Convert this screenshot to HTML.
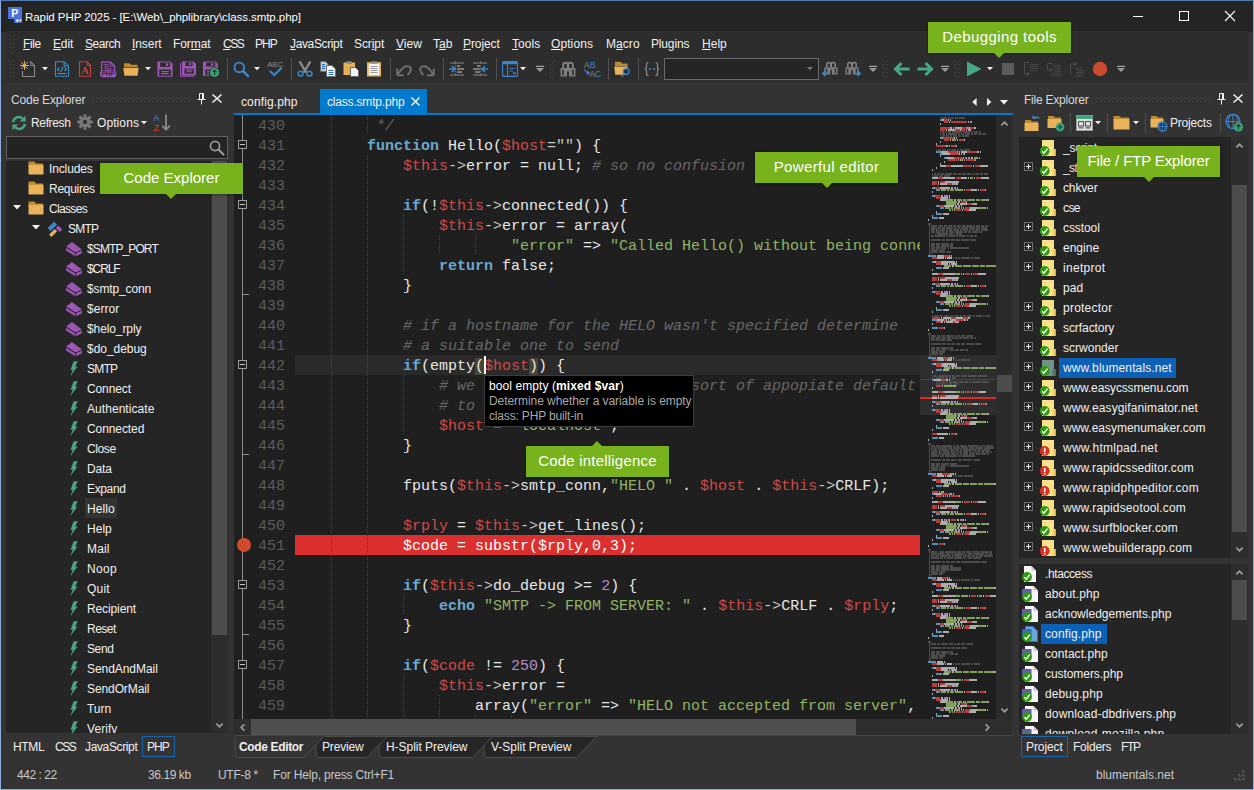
<!DOCTYPE html>
<html lang="en"><head><meta charset="utf-8"><title>Rapid PHP 2025</title>
<style>
html,body{margin:0;padding:0}
body{width:1254px;height:790px;position:relative;overflow:hidden;background:#333333;font-family:"Liberation Sans",sans-serif;font-size:12px;color:#e6e6e6}
.b{position:absolute;box-sizing:border-box}
.t{position:absolute;white-space:pre;line-height:16px;font-size:12px}
svg{position:absolute;overflow:visible}
#frame{position:absolute;left:0;top:0;width:1254px;height:790px;box-sizing:border-box;border:1px solid #90aee0;border-top-color:#4f78b0;pointer-events:none}
#titlebar{position:absolute;left:0;top:0;width:1254px;height:31.5px;background:#242424}
.title{color:#ffffff;font-size:12px}
#band{position:absolute;left:6px;top:31px;width:1242px;height:52px;background:#2d2d2d}
.menu{color:#f0f0f0;font-size:12px}
.menu u{text-decoration:underline;text-underline-offset:1px}
.ph{color:#d8d8d8;font-size:12px}
.ui{color:#f0f0f0;font-size:12px}
.bold{font-weight:bold}
.tab{color:#f0f0f0;font-size:12px}
.st{color:#c8c8c8;font-size:12px}
.tip{background:#000;border:1px solid #3c3c3c}
.callout{background:#78b31e;color:#fff;font-size:15px;line-height:30px;text-align:center;white-space:pre;box-shadow:0 1px 3px rgba(0,0,0,.35)}
.ptr{position:absolute;top:100%;margin-left:1px;width:0;height:0;border-left:5px solid transparent;border-right:5px solid transparent;border-top:5px solid #78b31e}
.ptr.up{top:-5px;border-top:none;border-bottom:5px solid #78b31e}
/* code */
#code{position:absolute;left:234px;top:115px;width:686px;height:604px;background:#1f1f1f;overflow:hidden}
.ln{position:absolute;left:0;width:686px;height:20px}
.ln .n{position:absolute;left:24px;top:2px;color:#5c5c5c;font:15px/20px "Liberation Mono",monospace;white-space:pre}
.ln .c{position:absolute;left:61px;top:2px;color:#e8e8e8;font:15px/20px "Liberation Mono",monospace;white-space:pre}
.k{color:#69a9d0;font-weight:bold}
.v{color:#d04a48}
.s{color:#8fb464}
.m{color:#676767;font-style:italic}
.o{color:#c8c8c8}
.nu{color:#b48cc8}

</style></head>
<body>
<div id="titlebar"><svg style="left:8px;top:7px" width="14" height="16" viewBox="0 0 14 16" ><path d="M0 0.8Q0 0 0.8 0H13.2Q14 0 14 0.8V16H6V12H0Z" fill="#4a72d8"/><text x="3.2" y="10" font-family="Liberation Sans,sans-serif" font-weight="bold" font-size="10.5" fill="#fff">P</text><path d="M12.8 12v1.7H8.2M9.6 12.3l-1.6 1.4 1.6 1.4" stroke="#fff" stroke-width="1" fill="none"/></svg><span class="t title" style="left:25px;top:9px;letter-spacing:-0.07px;font-size:11.5px;">Rapid PHP 2025 - [E:\Web\_phplibrary\class.smtp.php]</span><svg style="left:1133px;top:16px" width="10" height="1" viewBox="0 0 10 1" ><rect width="10" height="1" fill="#fff"/></svg><svg style="left:1179px;top:11px" width="10" height="10" viewBox="0 0 10 10" ><rect x="0.5" y="0.5" width="9" height="9" fill="none" stroke="#fff" stroke-width="1"/></svg><svg style="left:1225px;top:11px" width="10" height="10" viewBox="0 0 10 10" ><path d="M0 0L10 10M10 0L0 10" stroke="#fff" stroke-width="1.1"/></svg></div>
<div id="band"></div>
<svg style="left:9px;top:35px" width="5" height="18" viewBox="0 0 5 18" shape-rendering="crispEdges"><rect x="0" y="0" width="1" height="1" fill="#4c4c4c"/><rect x="4" y="0" width="1" height="1" fill="#4c4c4c"/><rect x="2" y="2" width="1" height="1" fill="#4c4c4c"/><rect x="0" y="4" width="1" height="1" fill="#4c4c4c"/><rect x="4" y="4" width="1" height="1" fill="#4c4c4c"/><rect x="2" y="6" width="1" height="1" fill="#4c4c4c"/><rect x="0" y="8" width="1" height="1" fill="#4c4c4c"/><rect x="4" y="8" width="1" height="1" fill="#4c4c4c"/><rect x="2" y="10" width="1" height="1" fill="#4c4c4c"/><rect x="0" y="12" width="1" height="1" fill="#4c4c4c"/><rect x="4" y="12" width="1" height="1" fill="#4c4c4c"/><rect x="2" y="14" width="1" height="1" fill="#4c4c4c"/><rect x="0" y="16" width="1" height="1" fill="#4c4c4c"/><rect x="4" y="16" width="1" height="1" fill="#4c4c4c"/><rect x="2" y="18" width="1" height="1" fill="#4c4c4c"/></svg><svg style="left:9px;top:60px" width="5" height="18" viewBox="0 0 5 18" shape-rendering="crispEdges"><rect x="0" y="0" width="1" height="1" fill="#4c4c4c"/><rect x="4" y="0" width="1" height="1" fill="#4c4c4c"/><rect x="2" y="2" width="1" height="1" fill="#4c4c4c"/><rect x="0" y="4" width="1" height="1" fill="#4c4c4c"/><rect x="4" y="4" width="1" height="1" fill="#4c4c4c"/><rect x="2" y="6" width="1" height="1" fill="#4c4c4c"/><rect x="0" y="8" width="1" height="1" fill="#4c4c4c"/><rect x="4" y="8" width="1" height="1" fill="#4c4c4c"/><rect x="2" y="10" width="1" height="1" fill="#4c4c4c"/><rect x="0" y="12" width="1" height="1" fill="#4c4c4c"/><rect x="4" y="12" width="1" height="1" fill="#4c4c4c"/><rect x="2" y="14" width="1" height="1" fill="#4c4c4c"/><rect x="0" y="16" width="1" height="1" fill="#4c4c4c"/><rect x="4" y="16" width="1" height="1" fill="#4c4c4c"/><rect x="2" y="18" width="1" height="1" fill="#4c4c4c"/></svg><div id="menubar"><span class="t menu" style="left:23px;top:36px;letter-spacing:-0.349px;"><u>F</u>ile</span><span class="t menu" style="left:53px;top:36px;letter-spacing:-0.145px;"><u>E</u>dit</span><span class="t menu" style="left:85px;top:36px;letter-spacing:-0.462px;"><u>S</u>earch</span><span class="t menu" style="left:132px;top:36px;letter-spacing:-0.072px;"><u>I</u>nsert</span><span class="t menu" style="left:173px;top:36px;letter-spacing:-0.075px;">For<u>m</u>at</span><span class="t menu" style="left:223px;top:36px;letter-spacing:-1.498px;"><u>C</u>SS</span><span class="t menu" style="left:255px;top:36px;letter-spacing:-0.904px;">PHP</span><span class="t menu" style="left:290px;top:36px;letter-spacing:-0.367px;"><u>J</u>avaScript</span><span class="t menu" style="left:354px;top:36px;letter-spacing:-0.093px;">Scr<u>i</u>pt</span><span class="t menu" style="left:396px;top:36px;letter-spacing:0.054px;"><u>V</u>iew</span><span class="t menu" style="left:433px;top:36px;letter-spacing:0.033px;">T<u>a</u>b</span><span class="t menu" style="left:463px;top:36px;letter-spacing:-0.09px;"><u>P</u>roject</span><span class="t menu" style="left:512px;top:36px;letter-spacing:0.067px;"><u>T</u>ools</span><span class="t menu" style="left:551px;top:36px;letter-spacing:0.089px;"><u>O</u>ptions</span><span class="t menu" style="left:606px;top:36px;letter-spacing:0.056px;">M<u>a</u>cro</span><span class="t menu" style="left:651px;top:36px;letter-spacing:-0.16px;">Plugins</span><span class="t menu" style="left:702px;top:36px;letter-spacing:0.019px;"><u>H</u>elp</span></div>
<div id="toolbar"><svg style="left:20px;top:61px" width="16" height="16" viewBox="0 0 16 16" ><path d="M2.5 10V15.5H14.5V4.5L11 1H9.5" fill="none" stroke="#8a8a8a" stroke-width="1.1"/><path d="M10.8 1.2V4.7H14.3" fill="none" stroke="#8a8a8a" stroke-width="1"/><g stroke="#f0b040" stroke-width="1"><path d="M4.5 0V9M0 4.5H9M1.3 1.3L7.7 7.7M7.7 1.3L1.3 7.7"/></g></svg><svg style="left:42px;top:67px" width="6" height="4" viewBox="0 0 6 4" ><path d="M0 0H6L3 3.2Z" fill="#f0f0f0"/></svg><svg style="left:54px;top:61px" width="16" height="16" viewBox="0 0 16 16" ><path d="M1.5 0.8H10L14.5 5V15.2H1.5Z" fill="none" stroke="#3c9bd8" stroke-width="1.1" stroke-dasharray="2.2 0.4"/><path d="M10 1V5H14.3" fill="none" stroke="#3c9bd8" stroke-width="1"/><path d="M5.5 6.3L3.6 8.2 5.5 10.1M10.5 6.3L12.4 8.2 10.5 10.1M8.9 5.8L7.1 10.6" fill="none" stroke="#3c9bd8" stroke-width="1.1"/><path d="M3.5 12.6H12.5" stroke="#3c9bd8" stroke-width="1.1"/></svg><svg style="left:77px;top:61px" width="16" height="16" viewBox="0 0 16 16" ><path d="M2.5 0.8H10L13.5 4.2V15.2H2.5Z" fill="none" stroke="#c8413a" stroke-width="1.1"/><path d="M10 1V4.3H13.3" fill="none" stroke="#c8413a" stroke-width="1"/><text x="8" y="13" text-anchor="middle" font-family="Liberation Serif,serif" font-weight="bold" font-size="10.5" fill="#c8413a">A</text></svg><svg style="left:100px;top:61px" width="16" height="16" viewBox="0 0 16 16" ><path d="M1.6 9.5V1.2H10.6L14.6 5V9.5" fill="none" stroke="#9c56b4" stroke-width="1.3"/><path d="M10.4 1.2V5.2H14.4" fill="none" stroke="#9c56b4" stroke-width="1"/><path d="M3.4 3.8H8.6M4.4 5.8H8.6M4.4 7.8H11.8" stroke="#9c56b4" stroke-width="1"/><rect x="0" y="9.2" width="16.2" height="7" rx="2.8" fill="#9c56b4"/><text x="8.2" y="15" text-anchor="middle" font-family="Liberation Sans,sans-serif" font-weight="bold" font-size="6.6" fill="#2d2d2d">PHP</text></svg><svg style="left:123px;top:61px" width="16" height="16" viewBox="0 0 16 16" ><path d="M1 2.2H6.5L8 3.8H14.5V6H1Z" fill="#c08a2e"/><path d="M0.3 6.8H15.7L14.6 14.8H1.4Z" fill="#e8b35a"/></svg><svg style="left:145px;top:67px" width="6" height="4" viewBox="0 0 6 4" ><path d="M0 0H6L3 3.2Z" fill="#f0f0f0"/></svg><svg style="left:157px;top:61px" width="16" height="16" viewBox="0 0 16 16" ><path d="M1.2 0.5H13.2L15.6 2.9V15Q15.6 15.8 14.8 15.8H1.2Q0.4 15.8 0.4 15V1.3Q0.4 0.5 1.2 0.5Z" fill="#9c56b4"/><rect x="3.1" y="1.4" width="10" height="4.5" fill="#2d2d2d"/><rect x="8.9" y="2.2" width="2.3" height="2.8" fill="#9c56b4"/><rect x="2.2" y="8.4" width="11.8" height="6.3" rx=".5" fill="#2d2d2d"/><path d="M4.2 10.6H11.7M4.2 12.6H11.7" stroke="#9c56b4" stroke-width="1.1"/></svg><svg style="left:180px;top:61px" width="16" height="16" viewBox="0 0 16 16" ><path d="M0.6 2.2V15.2H14" fill="none" stroke="#9c56b4" stroke-width="1.1"/><path d="M2.8 0.5H13.8L16 2.7V13.7Q16 14.4 15.3 14.4H2.8Q2 14.4 2 13.7V1.2Q2 0.5 2.8 0.5Z" fill="#9c56b4"/><rect x="5.4" y="1.3" width="7.2" height="3.6" fill="#2d2d2d"/><rect x="8.9" y="2" width="2.3" height="2" fill="#9c56b4"/><rect x="4.5" y="7.4" width="9.3" height="5.3" rx=".4" fill="#2d2d2d"/><path d="M6.1 8.9H12.3M6.1 10.8H12.3" stroke="#9c56b4" stroke-width="1.1"/></svg><svg style="left:203px;top:61px" width="16" height="16" viewBox="0 0 16 16" ><path d="M0.8 0.5H12.6L15 2.9V14.2Q15 15 14.2 15H0.8Q0 15 0 14.2V1.3Q0 0.5 0.8 0.5Z" fill="#9c56b4"/><rect x="3.2" y="1.4" width="9" height="4.2" fill="#2d2d2d"/><rect x="8" y="2.2" width="2.3" height="2.6" fill="#9c56b4"/><rect x="2.2" y="8.4" width="9" height="5.8" rx=".5" fill="#2d2d2d"/><path d="M4 10.4H6.2M4 12.4H6.2" stroke="#9c56b4" stroke-width="1.1"/><circle cx="11.6" cy="11.4" r="5.1" fill="#2d2d2d"/><circle cx="11.6" cy="11.4" r="4.5" fill="#3aa878"/><path d="M11.6 14.2V9.2M9.4 11.2L11.6 9 13.8 11.2" fill="none" stroke="#1e3a2e" stroke-width="1.2"/></svg><div class="b" style="left:227px;top:58px;width:1px;height:22px;background:#505050"></div><svg style="left:233px;top:61px" width="16" height="16" viewBox="0 0 16 16" ><circle cx="6.3" cy="6.4" r="4.8" fill="none" stroke="#3a86d0" stroke-width="1.9"/><path d="M9.9 10L15 15" stroke="#3a86d0" stroke-width="2.5" stroke-linecap="round"/></svg><svg style="left:254px;top:67px" width="6" height="4" viewBox="0 0 6 4" ><path d="M0 0H6L3 3.2Z" fill="#f0f0f0"/></svg><svg style="left:267px;top:61px" width="16" height="16" viewBox="0 0 16 16" ><text x="8.2" y="6.4" text-anchor="middle" font-family="Liberation Sans,sans-serif" font-size="7.8" fill="#8a8a8a">ABC</text><path d="M2.8 10L7.4 14 14.6 6.8" fill="none" stroke="#3a86d0" stroke-width="2.2"/></svg><div class="b" style="left:291px;top:58px;width:1px;height:22px;background:#505050"></div><svg style="left:297px;top:61px" width="16" height="16" viewBox="0 0 16 16" ><path d="M2.6 0.3L9.2 11.5M13.4 0.3L6.8 11.5" stroke="#8a8a8a" stroke-width="2.3"/><ellipse cx="3.6" cy="12.8" rx="2.6" ry="2.2" fill="none" stroke="#3a86d0" stroke-width="1.5"/><ellipse cx="12.4" cy="12.8" rx="2.6" ry="2.2" fill="none" stroke="#3a86d0" stroke-width="1.5"/></svg><svg style="left:320px;top:61px" width="16" height="16" viewBox="0 0 16 16" ><path d="M0.5 0.5H5.5L8 3V10.5H0.5Z" fill="#c8c8c8" stroke="#6a6a6a" stroke-width="1"/><path d="M2 3.5H5M2 5.5H5M2 7.5H5" stroke="#2f6cb8" stroke-width="1"/><path d="M6.5 4.5H12L15.5 8V15.5H6.5Z" fill="#f4f4f4" stroke="#6a6a6a" stroke-width="1"/><path d="M8.5 9.5H13.5M8.5 11.5H13.5M8.5 13.5H13.5" stroke="#2f6cb8" stroke-width="1"/></svg><svg style="left:343px;top:61px" width="16" height="16" viewBox="0 0 16 16" ><rect x="0.5" y="1.5" width="11.5" height="12.5" fill="#e8b35a"/><rect x="3.5" y="0.3" width="5.5" height="2.6" fill="#8a8a8a"/><rect x="2" y="3.6" width="8.5" height="9" fill="#e0a850" opacity=".6"/><path d="M7.5 6.5H12.5L15.5 9.5V15.5H7.5Z" fill="#f4f4f4" stroke="#6a6a6a" stroke-width="1"/></svg><svg style="left:366px;top:61px" width="16" height="16" viewBox="0 0 16 16" ><rect x="1" y="1.2" width="14" height="14.3" fill="#e8b35a"/><rect x="2.8" y="3" width="10.4" height="11" fill="#f4f4f4"/><rect x="5.2" y="0.2" width="5.6" height="2.4" fill="#8a8a8a"/><path d="M4.5 5.5H11.5M4.5 7.5H11.5M4.5 9.5H11.5M4.5 11.5H11.5" stroke="#9a9a9a" stroke-width="1"/></svg><div class="b" style="left:390px;top:58px;width:1px;height:22px;background:#505050"></div><svg style="left:396px;top:61px" width="16" height="16" viewBox="0 0 16 16" ><path d="M1.2 14.2V7.5M1.2 14.2H7.8" fill="none" stroke="#6e6e6e" stroke-width="2"/><path d="M1.8 13.6C5 8 9 4.3 12.5 5.4S15.5 11 11.5 14" fill="none" stroke="#6e6e6e" stroke-width="2"/></svg><svg style="left:419px;top:61px" width="16" height="16" viewBox="0 0 16 16" ><g transform="translate(16,0) scale(-1,1)"><path d="M1.2 14.2V7.5M1.2 14.2H7.8" fill="none" stroke="#6e6e6e" stroke-width="2"/><path d="M1.8 13.6C5 8 9 4.3 12.5 5.4S15.5 11 11.5 14" fill="none" stroke="#6e6e6e" stroke-width="2"/></g></svg><div class="b" style="left:443px;top:58px;width:1px;height:22px;background:#505050"></div><svg style="left:449px;top:61px" width="16" height="16" viewBox="0 0 16 16" ><path d="M6.5 0V16" stroke="#777" stroke-width="1" stroke-dasharray="1 1"/><path d="M1 2H15M1 14H15" stroke="#8a8a8a" stroke-width="1.2"/><path d="M8 5H11M8 8H15M8 11H13" stroke="#7a7a7a" stroke-width="1.8"/><path d="M0 8H5.5M3 5.2L6 8 3 10.8" fill="none" stroke="#3a86d0" stroke-width="1.7"/></svg><svg style="left:472px;top:61px" width="16" height="16" viewBox="0 0 16 16" ><path d="M8.5 0V16" stroke="#777" stroke-width="1" stroke-dasharray="1 1"/><path d="M1 2H15M1 14H15" stroke="#8a8a8a" stroke-width="1.2"/><path d="M5 5H8M1 8H8M3 11H8" stroke="#7a7a7a" stroke-width="1.8"/><path d="M16 8H10.5M13 5.2L10 8 13 10.8" fill="none" stroke="#3a86d0" stroke-width="1.7"/></svg><div class="b" style="left:496px;top:58px;width:1px;height:22px;background:#505050"></div><svg style="left:502px;top:61px" width="16" height="16" viewBox="0 0 16 16" ><rect x="0.6" y="0.6" width="14.8" height="14.8" rx="1.2" fill="none" stroke="#3a86d0" stroke-width="1.1"/><rect x="0.6" y="0.6" width="14.8" height="2.6" fill="#3a86d0"/><path d="M5.5 3.2V15.4" stroke="#3a86d0" stroke-width="1"/><path d="M7.5 7.5H13M7.5 10H11" stroke="#3a86d0" stroke-width="1"/><rect x="11" y="11.4" width="2.6" height="1.8" fill="#3a86d0"/></svg><svg style="left:520px;top:67px" width="6" height="4" viewBox="0 0 6 4" ><path d="M0 0H6L3 3.2Z" fill="#f0f0f0"/></svg><svg style="left:536px;top:65px" width="8" height="7" viewBox="0 0 8 7" ><rect x="0" y="0.8" width="8" height="1.1" fill="#b0b0b0"/><path d="M0 2.9H8L4 6.9Z" fill="#9a9a9a"/></svg><svg style="left:550px;top:60px" width="5" height="18" viewBox="0 0 5 18" shape-rendering="crispEdges"><rect x="0" y="0" width="1" height="1" fill="#4c4c4c"/><rect x="4" y="0" width="1" height="1" fill="#4c4c4c"/><rect x="2" y="2" width="1" height="1" fill="#4c4c4c"/><rect x="0" y="4" width="1" height="1" fill="#4c4c4c"/><rect x="4" y="4" width="1" height="1" fill="#4c4c4c"/><rect x="2" y="6" width="1" height="1" fill="#4c4c4c"/><rect x="0" y="8" width="1" height="1" fill="#4c4c4c"/><rect x="4" y="8" width="1" height="1" fill="#4c4c4c"/><rect x="2" y="10" width="1" height="1" fill="#4c4c4c"/><rect x="0" y="12" width="1" height="1" fill="#4c4c4c"/><rect x="4" y="12" width="1" height="1" fill="#4c4c4c"/><rect x="2" y="14" width="1" height="1" fill="#4c4c4c"/><rect x="0" y="16" width="1" height="1" fill="#4c4c4c"/><rect x="4" y="16" width="1" height="1" fill="#4c4c4c"/><rect x="2" y="18" width="1" height="1" fill="#4c4c4c"/></svg><svg style="left:560px;top:61px" width="16" height="16" viewBox="0 0 16 16" ><path d="M3.2 7V4Q3.2 1.6 5.4 1.6T7.8 4V7M8.2 7V4Q8.2 1.6 10.6 1.6T12.8 4V7" fill="none" stroke="#8a8a8a" stroke-width="1.7"/><path d="M0.5 7H7V15.5H0.5ZM9 7H15.5V15.5H9Z" fill="#7e7e7e"/><rect x="2.2" y="8.6" width="1.6" height="5.4" fill="#2d2d2d"/><rect x="12.2" y="8.6" width="1.6" height="5.4" fill="#2d2d2d"/><rect x="7" y="7" width="2" height="3.4" fill="#7e7e7e"/></svg><svg style="left:584px;top:61px" width="16" height="16" viewBox="0 0 16 16" ><text x="0" y="7" font-family="Liberation Sans,sans-serif" font-size="8.5" fill="#8a8a8a">A<tspan fill="#3a86d0">B</tspan></text><text x="5.4" y="16" font-family="Liberation Sans,sans-serif" font-size="8.5" fill="#8a8a8a">A<tspan fill="#3a86d0">C</tspan></text><path d="M0.5 8.5Q1 11.5 5 12M3 9.8L5.2 12 2.8 13.8" fill="none" stroke="#3a86d0" stroke-width="1.1"/></svg><div class="b" style="left:608px;top:58px;width:1px;height:22px;background:#505050"></div><svg style="left:614px;top:61px" width="16" height="16" viewBox="0 0 16 16" ><path d="M1 0.8H6.5L8 2.4H13.5V5H1Z" fill="#c08a2e"/><path d="M0.2 5.6H13.8L13 13.8H1.2Z" fill="#e8b35a"/><circle cx="12.2" cy="10.6" r="2.9" fill="#2d2d2d" stroke="#3a86d0" stroke-width="1.3"/><path d="M10.2 12.8L7.6 15.6" stroke="#3a86d0" stroke-width="1.5"/></svg><div class="b" style="left:638px;top:58px;width:1px;height:22px;background:#505050"></div><svg style="left:644px;top:61px" width="16" height="16" viewBox="0 0 16 16" ><path d="M4.5 1.5Q2.5 1.5 2.5 3.5V6Q2.5 8 0.8 8Q2.5 8 2.5 10V12.5Q2.5 14.5 4.5 14.5M11.5 1.5Q13.5 1.5 13.5 3.5V6Q13.5 8 15.2 8Q13.5 8 13.5 10V12.5Q13.5 14.5 11.5 14.5" fill="none" stroke="#8a8a8a" stroke-width="1.2"/><circle cx="5.8" cy="8" r="1.1" fill="#3a86d0"/><circle cx="10.2" cy="8" r="1.1" fill="#3a86d0"/></svg><div class="b" style="left:664px;top:58px;width:155px;height:22px;background:#252525;border:1px solid #6a6a6a"></div><svg style="left:807px;top:67px" width="6" height="4" viewBox="0 0 6 4" ><path d="M0 0H6L3 3.2Z" fill="#7a7a7a"/></svg><svg style="left:822px;top:61px" width="16" height="16" viewBox="0 0 16 16" ><g transform="translate(2,0) scale(0.875)"><path d="M3.2 7V4Q3.2 1.6 5.4 1.6T7.8 4V7M8.2 7V4Q8.2 1.6 10.6 1.6T12.8 4V7" fill="none" stroke="#8a8a8a" stroke-width="1.7"/><path d="M0.5 7H7V15.5H0.5ZM9 7H15.5V15.5H9Z" fill="#7e7e7e"/><rect x="2.2" y="8.6" width="1.6" height="5.4" fill="#2d2d2d"/><rect x="12.2" y="8.6" width="1.6" height="5.4" fill="#2d2d2d"/><rect x="7" y="7" width="2" height="3.4" fill="#7e7e7e"/></g><path d="M7 12.5H0.8M3.6 9.8L0.8 12.5 3.6 15.2" fill="none" stroke="#3a86d0" stroke-width="1.6"/></svg><svg style="left:845px;top:61px" width="16" height="16" viewBox="0 0 16 16" ><g transform="translate(0,0) scale(0.875)"><path d="M3.2 7V4Q3.2 1.6 5.4 1.6T7.8 4V7M8.2 7V4Q8.2 1.6 10.6 1.6T12.8 4V7" fill="none" stroke="#8a8a8a" stroke-width="1.7"/><path d="M0.5 7H7V15.5H0.5ZM9 7H15.5V15.5H9Z" fill="#7e7e7e"/><rect x="2.2" y="8.6" width="1.6" height="5.4" fill="#2d2d2d"/><rect x="12.2" y="8.6" width="1.6" height="5.4" fill="#2d2d2d"/><rect x="7" y="7" width="2" height="3.4" fill="#7e7e7e"/></g><path d="M9 12.5H15.2M12.4 9.8L15.2 12.5 12.4 15.2" fill="none" stroke="#3a86d0" stroke-width="1.6"/></svg><svg style="left:869px;top:65px" width="8" height="7" viewBox="0 0 8 7" ><rect x="0" y="0.8" width="8" height="1.1" fill="#b0b0b0"/><path d="M0 2.9H8L4 6.9Z" fill="#9a9a9a"/></svg><svg style="left:883px;top:60px" width="5" height="18" viewBox="0 0 5 18" shape-rendering="crispEdges"><rect x="0" y="0" width="1" height="1" fill="#4c4c4c"/><rect x="4" y="0" width="1" height="1" fill="#4c4c4c"/><rect x="2" y="2" width="1" height="1" fill="#4c4c4c"/><rect x="0" y="4" width="1" height="1" fill="#4c4c4c"/><rect x="4" y="4" width="1" height="1" fill="#4c4c4c"/><rect x="2" y="6" width="1" height="1" fill="#4c4c4c"/><rect x="0" y="8" width="1" height="1" fill="#4c4c4c"/><rect x="4" y="8" width="1" height="1" fill="#4c4c4c"/><rect x="2" y="10" width="1" height="1" fill="#4c4c4c"/><rect x="0" y="12" width="1" height="1" fill="#4c4c4c"/><rect x="4" y="12" width="1" height="1" fill="#4c4c4c"/><rect x="2" y="14" width="1" height="1" fill="#4c4c4c"/><rect x="0" y="16" width="1" height="1" fill="#4c4c4c"/><rect x="4" y="16" width="1" height="1" fill="#4c4c4c"/><rect x="2" y="18" width="1" height="1" fill="#4c4c4c"/></svg><svg style="left:894px;top:61px" width="16" height="16" viewBox="0 0 16 16" ><path d="M15.5 8H2M7.5 2L1.5 8 7.5 14" fill="none" stroke="#45a883" stroke-width="3"/></svg><svg style="left:917px;top:61px" width="16" height="16" viewBox="0 0 16 16" ><path d="M0.5 8H14M8.5 2L14.5 8 8.5 14" fill="none" stroke="#45a883" stroke-width="3"/></svg><svg style="left:941px;top:65px" width="8" height="7" viewBox="0 0 8 7" ><rect x="0" y="0.8" width="8" height="1.1" fill="#b0b0b0"/><path d="M0 2.9H8L4 6.9Z" fill="#9a9a9a"/></svg><svg style="left:955px;top:60px" width="5" height="18" viewBox="0 0 5 18" shape-rendering="crispEdges"><rect x="0" y="0" width="1" height="1" fill="#4c4c4c"/><rect x="4" y="0" width="1" height="1" fill="#4c4c4c"/><rect x="2" y="2" width="1" height="1" fill="#4c4c4c"/><rect x="0" y="4" width="1" height="1" fill="#4c4c4c"/><rect x="4" y="4" width="1" height="1" fill="#4c4c4c"/><rect x="2" y="6" width="1" height="1" fill="#4c4c4c"/><rect x="0" y="8" width="1" height="1" fill="#4c4c4c"/><rect x="4" y="8" width="1" height="1" fill="#4c4c4c"/><rect x="2" y="10" width="1" height="1" fill="#4c4c4c"/><rect x="0" y="12" width="1" height="1" fill="#4c4c4c"/><rect x="4" y="12" width="1" height="1" fill="#4c4c4c"/><rect x="2" y="14" width="1" height="1" fill="#4c4c4c"/><rect x="0" y="16" width="1" height="1" fill="#4c4c4c"/><rect x="4" y="16" width="1" height="1" fill="#4c4c4c"/><rect x="2" y="18" width="1" height="1" fill="#4c4c4c"/></svg><svg style="left:966px;top:61px" width="16" height="16" viewBox="0 0 16 16" ><path d="M1 0.5L15.5 8 1 15.5Z" fill="#45a883"/></svg><svg style="left:987px;top:67px" width="6" height="4" viewBox="0 0 6 4" ><path d="M0 0H6L3 3.2Z" fill="#f0f0f0"/></svg><svg style="left:1000px;top:61px" width="16" height="16" viewBox="0 0 16 16" ><rect x="2" y="2" width="12" height="12" fill="#5c5c5c"/></svg><svg style="left:1023px;top:61px" width="16" height="16" viewBox="0 0 16 16" ><path d="M6 1.5H1.5V13H4" fill="none" stroke="#4a4a4a" stroke-width="1"/><path d="M4 10.5L7 13 4 15.5Z" fill="#4a4a4a"/><path d="M7 3.5H15M7 5.5H15M7 7.5H15M7 9.5H13" stroke="#444" stroke-width="1"/></svg><svg style="left:1046px;top:61px" width="16" height="16" viewBox="0 0 16 16" ><path d="M6 2.5H1.5V9H4" fill="none" stroke="#4a4a4a" stroke-width="1"/><path d="M4 6.5L7 9 4 11.5Z" fill="#4a4a4a"/><path d="M7 4.5H15M8 6.5H15M8 8.5H15M8 10.5H15M5 12.5H15M5 14.5H15" stroke="#444" stroke-width="1"/></svg><svg style="left:1069px;top:61px" width="16" height="16" viewBox="0 0 16 16" ><path d="M3 13H1.5V3H5" fill="none" stroke="#4a4a4a" stroke-width="1"/><path d="M5 0.5L8 3 5 5.5Z" fill="#4a4a4a"/><path d="M6 7.5H13M7 9.5H15M7 11.5H15M7 13.5H15M5 15.5H15" stroke="#444" stroke-width="1"/></svg><svg style="left:1092px;top:61px" width="16" height="16" viewBox="0 0 16 16" ><circle cx="8" cy="8" r="7.2" fill="#cc4a2e"/></svg><svg style="left:1117px;top:65px" width="8" height="7" viewBox="0 0 8 7" ><rect x="0" y="0.8" width="8" height="1.1" fill="#b0b0b0"/><path d="M0 2.9H8L4 6.9Z" fill="#9a9a9a"/></svg></div>
<div id="left"><span class="t ph" style="left:11px;top:92px;letter-spacing:-0.188px;">Code Explorer</span><svg style="left:92px;top:97px" width="98" height="6" viewBox="0 0 98 6" shape-rendering="crispEdges"><rect x="0" y="0" width="1" height="1" fill="#474747"/><rect x="0" y="4" width="1" height="1" fill="#474747"/><rect x="2" y="2" width="1" height="1" fill="#474747"/><rect x="4" y="0" width="1" height="1" fill="#474747"/><rect x="4" y="4" width="1" height="1" fill="#474747"/><rect x="6" y="2" width="1" height="1" fill="#474747"/><rect x="8" y="0" width="1" height="1" fill="#474747"/><rect x="8" y="4" width="1" height="1" fill="#474747"/><rect x="10" y="2" width="1" height="1" fill="#474747"/><rect x="12" y="0" width="1" height="1" fill="#474747"/><rect x="12" y="4" width="1" height="1" fill="#474747"/><rect x="14" y="2" width="1" height="1" fill="#474747"/><rect x="16" y="0" width="1" height="1" fill="#474747"/><rect x="16" y="4" width="1" height="1" fill="#474747"/><rect x="18" y="2" width="1" height="1" fill="#474747"/><rect x="20" y="0" width="1" height="1" fill="#474747"/><rect x="20" y="4" width="1" height="1" fill="#474747"/><rect x="22" y="2" width="1" height="1" fill="#474747"/><rect x="24" y="0" width="1" height="1" fill="#474747"/><rect x="24" y="4" width="1" height="1" fill="#474747"/><rect x="26" y="2" width="1" height="1" fill="#474747"/><rect x="28" y="0" width="1" height="1" fill="#474747"/><rect x="28" y="4" width="1" height="1" fill="#474747"/><rect x="30" y="2" width="1" height="1" fill="#474747"/><rect x="32" y="0" width="1" height="1" fill="#474747"/><rect x="32" y="4" width="1" height="1" fill="#474747"/><rect x="34" y="2" width="1" height="1" fill="#474747"/><rect x="36" y="0" width="1" height="1" fill="#474747"/><rect x="36" y="4" width="1" height="1" fill="#474747"/><rect x="38" y="2" width="1" height="1" fill="#474747"/><rect x="40" y="0" width="1" height="1" fill="#474747"/><rect x="40" y="4" width="1" height="1" fill="#474747"/><rect x="42" y="2" width="1" height="1" fill="#474747"/><rect x="44" y="0" width="1" height="1" fill="#474747"/><rect x="44" y="4" width="1" height="1" fill="#474747"/><rect x="46" y="2" width="1" height="1" fill="#474747"/><rect x="48" y="0" width="1" height="1" fill="#474747"/><rect x="48" y="4" width="1" height="1" fill="#474747"/><rect x="50" y="2" width="1" height="1" fill="#474747"/><rect x="52" y="0" width="1" height="1" fill="#474747"/><rect x="52" y="4" width="1" height="1" fill="#474747"/><rect x="54" y="2" width="1" height="1" fill="#474747"/><rect x="56" y="0" width="1" height="1" fill="#474747"/><rect x="56" y="4" width="1" height="1" fill="#474747"/><rect x="58" y="2" width="1" height="1" fill="#474747"/><rect x="60" y="0" width="1" height="1" fill="#474747"/><rect x="60" y="4" width="1" height="1" fill="#474747"/><rect x="62" y="2" width="1" height="1" fill="#474747"/><rect x="64" y="0" width="1" height="1" fill="#474747"/><rect x="64" y="4" width="1" height="1" fill="#474747"/><rect x="66" y="2" width="1" height="1" fill="#474747"/><rect x="68" y="0" width="1" height="1" fill="#474747"/><rect x="68" y="4" width="1" height="1" fill="#474747"/><rect x="70" y="2" width="1" height="1" fill="#474747"/><rect x="72" y="0" width="1" height="1" fill="#474747"/><rect x="72" y="4" width="1" height="1" fill="#474747"/><rect x="74" y="2" width="1" height="1" fill="#474747"/><rect x="76" y="0" width="1" height="1" fill="#474747"/><rect x="76" y="4" width="1" height="1" fill="#474747"/><rect x="78" y="2" width="1" height="1" fill="#474747"/><rect x="80" y="0" width="1" height="1" fill="#474747"/><rect x="80" y="4" width="1" height="1" fill="#474747"/><rect x="82" y="2" width="1" height="1" fill="#474747"/><rect x="84" y="0" width="1" height="1" fill="#474747"/><rect x="84" y="4" width="1" height="1" fill="#474747"/><rect x="86" y="2" width="1" height="1" fill="#474747"/><rect x="88" y="0" width="1" height="1" fill="#474747"/><rect x="88" y="4" width="1" height="1" fill="#474747"/><rect x="90" y="2" width="1" height="1" fill="#474747"/><rect x="92" y="0" width="1" height="1" fill="#474747"/><rect x="92" y="4" width="1" height="1" fill="#474747"/><rect x="94" y="2" width="1" height="1" fill="#474747"/><rect x="96" y="0" width="1" height="1" fill="#474747"/><rect x="96" y="4" width="1" height="1" fill="#474747"/><rect x="98" y="2" width="1" height="1" fill="#474747"/></svg><svg style="left:197px;top:93px" width="9" height="12" viewBox="0 0 9 12" ><path d="M2.5 0.5H6.5V6.5H2.5ZM0.5 6.5H8.5M4.5 6.5V11.5" fill="none" stroke="#f0f0f0" stroke-width="1"/><rect x="5" y="0.5" width="1.5" height="6" fill="#f0f0f0"/></svg><svg style="left:212px;top:94px" width="10" height="9" viewBox="0 0 10 9" ><path d="M0.5 0.5L9.5 8.5M9.5 0.5L0.5 8.5" stroke="#f0f0f0" stroke-width="1.6"/></svg><svg style="left:11px;top:115px" width="16" height="16" viewBox="0 0 16 16" ><path d="M2.2 7.2A5.6 5.6 0 0 1 11.6 3.6" fill="none" stroke="#45a883" stroke-width="2.4"/><path d="M14.6 0.8V6.6H8.8Z" fill="#45a883"/><path d="M13.8 8.8A5.6 5.6 0 0 1 4.4 12.4" fill="none" stroke="#45a883" stroke-width="2.4"/><path d="M1.4 15.2V9.4H7.2Z" fill="#45a883"/></svg><span class="t ui" style="left:31px;top:115px;letter-spacing:-0.354px;">Refresh</span><svg style="left:77px;top:114px" width="16" height="16" viewBox="0 0 16 16" ><g fill="#7a7a7a"><rect x="6.5" y="0.3" width="3" height="4" transform="rotate(0 8 8)"/><rect x="6.5" y="0.3" width="3" height="4" transform="rotate(45 8 8)"/><rect x="6.5" y="0.3" width="3" height="4" transform="rotate(90 8 8)"/><rect x="6.5" y="0.3" width="3" height="4" transform="rotate(135 8 8)"/><rect x="6.5" y="0.3" width="3" height="4" transform="rotate(180 8 8)"/><rect x="6.5" y="0.3" width="3" height="4" transform="rotate(225 8 8)"/><rect x="6.5" y="0.3" width="3" height="4" transform="rotate(270 8 8)"/><rect x="6.5" y="0.3" width="3" height="4" transform="rotate(315 8 8)"/></g><circle cx="8" cy="8" r="3.7" fill="none" stroke="#7a7a7a" stroke-width="3"/></svg><span class="t ui" style="left:97px;top:115px;letter-spacing:0.089px;">Options</span><svg style="left:141px;top:121px" width="6" height="4" viewBox="0 0 6 4" ><path d="M0 0H6L3 3.2Z" fill="#f0f0f0"/></svg><svg style="left:153px;top:113px" width="18" height="18" viewBox="0 0 18 18" ><text x="0.3" y="8.2" font-family="Liberation Sans,sans-serif" font-size="9.4" fill="#3a86d0">A</text><text x="0.6" y="17.6" font-family="Liberation Sans,sans-serif" font-size="9.4" fill="#d0452f">Z</text><path d="M13 1.5V16.5M9.2 12.6L13 16.6 16.8 12.6" fill="none" stroke="#8a8a8a" stroke-width="1.8"/></svg><div class="b" style="left:6px;top:136px;width:222px;height:23px;background:#232323;border:1px solid #606060;box-sizing:border-box;"></div><svg style="left:209px;top:140px" width="16" height="16" viewBox="0 0 16 16" ><circle cx="6" cy="6" r="4.6" fill="none" stroke="#9a9a9a" stroke-width="1.7"/><path d="M9.5 9.5L14.5 14.5" stroke="#9a9a9a" stroke-width="2.2" stroke-linecap="round"/></svg><div class="b" style="left:6px;top:161px;width:205px;height:572px;background:#252525;"></div><div class="b" style="left:211px;top:161px;width:17px;height:572px;background:#2d2d2d;"></div><div class="b" style="left:212px;top:161px;width:15px;height:474px;background:#4d4d4d;"></div><svg style="left:216px;top:723px" width="7" height="5" viewBox="0 0 7 5" ><path d="M0.4 0.6L3.5 3.8 6.6 0.6" fill="none" stroke="#a0a0a0" stroke-width="1.6"/></svg><div class="b" style="left:7px;top:161px;width:205px;height:572px;overflow:hidden"><svg style="left:21px;top:-1px" width="16" height="16" viewBox="0 0 16 16" ><path d="M0.5 1.5H6.5L8 3.5H15V6H0.5Z" fill="#c08a2e"/><path d="M0.5 4.8H15.5V14.5H0.5Z" fill="#e8b35a"/></svg><span class="t ui" style="left:42px;top:0px;letter-spacing:-0.134px;">Includes</span><svg style="left:21px;top:19px" width="16" height="16" viewBox="0 0 16 16" ><path d="M0.5 1.5H6.5L8 3.5H15V6H0.5Z" fill="#c08a2e"/><path d="M0.5 4.8H15.5V14.5H0.5Z" fill="#e8b35a"/></svg><span class="t ui" style="left:42px;top:20px;letter-spacing:-0.285px;">Requires</span><svg style="left:6px;top:44px" width="8" height="5" viewBox="0 0 8 5" ><path d="M0 0H8L4 4.5Z" fill="#f0f0f0"/></svg><svg style="left:21px;top:39px" width="16" height="16" viewBox="0 0 16 16" ><path d="M0.5 1.5H6.5L8 3.5H15V6H0.5Z" fill="#c08a2e"/><path d="M0.5 4.8H15.5V14.5H0.5Z" fill="#e8b35a"/></svg><span class="t ui" style="left:42px;top:40px;letter-spacing:-0.67px;">Classes</span><svg style="left:25px;top:64px" width="8" height="5" viewBox="0 0 8 5" ><path d="M0 0H8L4 4.5Z" fill="#f0f0f0"/></svg><svg style="left:40px;top:59px" width="16" height="18" viewBox="0 0 16 18" ><path d="M0.6 7.9L7 1.8 10.1 4.5 3.6 11Z" fill="#3d86c6"/><path d="M8.6 7.9L11.2 5.6 15.4 9.4 12.7 12.1Z" fill="#9c56b4"/><path d="M2.1 14.4L7.8 9 10.1 11.3 4.4 17Z" fill="#e8b35a"/></svg><span class="t ui" style="left:61px;top:60px;letter-spacing:-0.795px;">SMTP</span><svg style="left:58px;top:80px" width="18" height="16" viewBox="0 0 18 16" ><path d="M1 5.5L7 1.1 16.9 8.5 10.7 11.4Z" fill="#9c56b4"/><path d="M1 6.7L10.1 12.3V15.2L1 9.5Z" fill="#9c56b4"/><path d="M11.1 12.2L16.9 9.5V12.2L11.1 15.2Z" fill="#9c56b4"/></svg><span class="t ui" style="left:80px;top:80px;letter-spacing:-0.895px;">$SMTP_PORT</span><svg style="left:58px;top:100px" width="18" height="16" viewBox="0 0 18 16" ><path d="M1 5.5L7 1.1 16.9 8.5 10.7 11.4Z" fill="#9c56b4"/><path d="M1 6.7L10.1 12.3V15.2L1 9.5Z" fill="#9c56b4"/><path d="M11.1 12.2L16.9 9.5V12.2L11.1 15.2Z" fill="#9c56b4"/></svg><span class="t ui" style="left:80px;top:100px;letter-spacing:-1.086px;">$CRLF</span><svg style="left:58px;top:120px" width="18" height="16" viewBox="0 0 18 16" ><path d="M1 5.5L7 1.1 16.9 8.5 10.7 11.4Z" fill="#9c56b4"/><path d="M1 6.7L10.1 12.3V15.2L1 9.5Z" fill="#9c56b4"/><path d="M11.1 12.2L16.9 9.5V12.2L11.1 15.2Z" fill="#9c56b4"/></svg><span class="t ui" style="left:80px;top:120px;letter-spacing:-0.125px;">$smtp_conn</span><svg style="left:58px;top:140px" width="18" height="16" viewBox="0 0 18 16" ><path d="M1 5.5L7 1.1 16.9 8.5 10.7 11.4Z" fill="#9c56b4"/><path d="M1 6.7L10.1 12.3V15.2L1 9.5Z" fill="#9c56b4"/><path d="M11.1 12.2L16.9 9.5V12.2L11.1 15.2Z" fill="#9c56b4"/></svg><span class="t ui" style="left:80px;top:140px;letter-spacing:0.047px;">$error</span><svg style="left:58px;top:160px" width="18" height="16" viewBox="0 0 18 16" ><path d="M1 5.5L7 1.1 16.9 8.5 10.7 11.4Z" fill="#9c56b4"/><path d="M1 6.7L10.1 12.3V15.2L1 9.5Z" fill="#9c56b4"/><path d="M11.1 12.2L16.9 9.5V12.2L11.1 15.2Z" fill="#9c56b4"/></svg><span class="t ui" style="left:80px;top:160px;letter-spacing:-0.101px;">$helo_rply</span><svg style="left:58px;top:180px" width="18" height="16" viewBox="0 0 18 16" ><path d="M1 5.5L7 1.1 16.9 8.5 10.7 11.4Z" fill="#9c56b4"/><path d="M1 6.7L10.1 12.3V15.2L1 9.5Z" fill="#9c56b4"/><path d="M11.1 12.2L16.9 9.5V12.2L11.1 15.2Z" fill="#9c56b4"/></svg><span class="t ui" style="left:80px;top:180px;letter-spacing:-0.035px;">$do_debug</span><svg style="left:62px;top:199px" width="10" height="18" viewBox="0 0 10 18" ><path d="M4.6 1.5L8.8 1.1 6.1 6.4 8.4 6.4 1.2 16.6 3.8 9.8 1.6 9.8Z" fill="#48a682"/></svg><span class="t ui" style="left:80px;top:200px;letter-spacing:-0.795px;">SMTP</span><svg style="left:62px;top:219px" width="10" height="18" viewBox="0 0 10 18" ><path d="M4.6 1.5L8.8 1.1 6.1 6.4 8.4 6.4 1.2 16.6 3.8 9.8 1.6 9.8Z" fill="#48a682"/></svg><span class="t ui" style="left:80px;top:220px;letter-spacing:-0.113px;">Connect</span><svg style="left:62px;top:239px" width="10" height="18" viewBox="0 0 10 18" ><path d="M4.6 1.5L8.8 1.1 6.1 6.4 8.4 6.4 1.2 16.6 3.8 9.8 1.6 9.8Z" fill="#48a682"/></svg><span class="t ui" style="left:80px;top:240px;letter-spacing:0.056px;">Authenticate</span><svg style="left:62px;top:259px" width="10" height="18" viewBox="0 0 10 18" ><path d="M4.6 1.5L8.8 1.1 6.1 6.4 8.4 6.4 1.2 16.6 3.8 9.8 1.6 9.8Z" fill="#48a682"/></svg><span class="t ui" style="left:80px;top:260px;letter-spacing:-0.09px;">Connected</span><svg style="left:62px;top:279px" width="10" height="18" viewBox="0 0 10 18" ><path d="M4.6 1.5L8.8 1.1 6.1 6.4 8.4 6.4 1.2 16.6 3.8 9.8 1.6 9.8Z" fill="#48a682"/></svg><span class="t ui" style="left:80px;top:280px;letter-spacing:-0.389px;">Close</span><svg style="left:62px;top:299px" width="10" height="18" viewBox="0 0 10 18" ><path d="M4.6 1.5L8.8 1.1 6.1 6.4 8.4 6.4 1.2 16.6 3.8 9.8 1.6 9.8Z" fill="#48a682"/></svg><span class="t ui" style="left:80px;top:300px;letter-spacing:-0.164px;">Data</span><svg style="left:62px;top:319px" width="10" height="18" viewBox="0 0 10 18" ><path d="M4.6 1.5L8.8 1.1 6.1 6.4 8.4 6.4 1.2 16.6 3.8 9.8 1.6 9.8Z" fill="#48a682"/></svg><span class="t ui" style="left:80px;top:320px;letter-spacing:-0.354px;">Expand</span><div class="b" style="left:78px;top:337px;width:32px;height:20px;background:#333333;"></div><svg style="left:62px;top:339px" width="10" height="18" viewBox="0 0 10 18" ><path d="M4.6 1.5L8.8 1.1 6.1 6.4 8.4 6.4 1.2 16.6 3.8 9.8 1.6 9.8Z" fill="#48a682"/></svg><span class="t ui" style="left:80px;top:340px;letter-spacing:0.059px;">Hello</span><svg style="left:62px;top:359px" width="10" height="18" viewBox="0 0 10 18" ><path d="M4.6 1.5L8.8 1.1 6.1 6.4 8.4 6.4 1.2 16.6 3.8 9.8 1.6 9.8Z" fill="#48a682"/></svg><span class="t ui" style="left:80px;top:360px;letter-spacing:0.019px;">Help</span><svg style="left:62px;top:379px" width="10" height="18" viewBox="0 0 10 18" ><path d="M4.6 1.5L8.8 1.1 6.1 6.4 8.4 6.4 1.2 16.6 3.8 9.8 1.6 9.8Z" fill="#48a682"/></svg><span class="t ui" style="left:80px;top:380px;letter-spacing:0.171px;">Mail</span><svg style="left:62px;top:399px" width="10" height="18" viewBox="0 0 10 18" ><path d="M4.6 1.5L8.8 1.1 6.1 6.4 8.4 6.4 1.2 16.6 3.8 9.8 1.6 9.8Z" fill="#48a682"/></svg><span class="t ui" style="left:80px;top:400px;letter-spacing:0.353px;">Noop</span><svg style="left:62px;top:419px" width="10" height="18" viewBox="0 0 10 18" ><path d="M4.6 1.5L8.8 1.1 6.1 6.4 8.4 6.4 1.2 16.6 3.8 9.8 1.6 9.8Z" fill="#48a682"/></svg><span class="t ui" style="left:80px;top:420px;letter-spacing:0.198px;">Quit</span><svg style="left:62px;top:439px" width="10" height="18" viewBox="0 0 10 18" ><path d="M4.6 1.5L8.8 1.1 6.1 6.4 8.4 6.4 1.2 16.6 3.8 9.8 1.6 9.8Z" fill="#48a682"/></svg><span class="t ui" style="left:80px;top:440px;letter-spacing:-0.115px;">Recipient</span><svg style="left:62px;top:459px" width="10" height="18" viewBox="0 0 10 18" ><path d="M4.6 1.5L8.8 1.1 6.1 6.4 8.4 6.4 1.2 16.6 3.8 9.8 1.6 9.8Z" fill="#48a682"/></svg><span class="t ui" style="left:80px;top:460px;letter-spacing:-0.49px;">Reset</span><svg style="left:62px;top:479px" width="10" height="18" viewBox="0 0 10 18" ><path d="M4.6 1.5L8.8 1.1 6.1 6.4 8.4 6.4 1.2 16.6 3.8 9.8 1.6 9.8Z" fill="#48a682"/></svg><span class="t ui" style="left:80px;top:480px;letter-spacing:-0.385px;">Send</span><svg style="left:62px;top:499px" width="10" height="18" viewBox="0 0 10 18" ><path d="M4.6 1.5L8.8 1.1 6.1 6.4 8.4 6.4 1.2 16.6 3.8 9.8 1.6 9.8Z" fill="#48a682"/></svg><span class="t ui" style="left:80px;top:500px;letter-spacing:-0.058px;">SendAndMail</span><svg style="left:62px;top:519px" width="10" height="18" viewBox="0 0 10 18" ><path d="M4.6 1.5L8.8 1.1 6.1 6.4 8.4 6.4 1.2 16.6 3.8 9.8 1.6 9.8Z" fill="#48a682"/></svg><span class="t ui" style="left:80px;top:520px;letter-spacing:-0.097px;">SendOrMail</span><svg style="left:62px;top:539px" width="10" height="18" viewBox="0 0 10 18" ><path d="M4.6 1.5L8.8 1.1 6.1 6.4 8.4 6.4 1.2 16.6 3.8 9.8 1.6 9.8Z" fill="#48a682"/></svg><span class="t ui" style="left:80px;top:540px;letter-spacing:-0.053px;">Turn</span><svg style="left:62px;top:559px" width="10" height="18" viewBox="0 0 10 18" ><path d="M4.6 1.5L8.8 1.1 6.1 6.4 8.4 6.4 1.2 16.6 3.8 9.8 1.6 9.8Z" fill="#48a682"/></svg><span class="t ui" style="left:80px;top:560px;letter-spacing:0.056px;">Verify</span></div><span class="t ui" style="left:13px;top:739px;letter-spacing:-0.363px;">HTML</span><span class="t ui" style="left:55px;top:739px;letter-spacing:-1.498px;">CSS</span><span class="t ui" style="left:85px;top:739px;letter-spacing:-0.367px;">JavaScript</span><div class="b" style="left:142px;top:736px;width:33px;height:21px;border:1px solid #1c64a8;box-sizing:border-box;"></div><span class="t ui" style="left:147px;top:739px;letter-spacing:-0.904px;">PHP</span></div>
<div id="tabs"><span class="t tab" style="left:241px;top:94px;letter-spacing:0.118px;">config.php</span><div class="b" style="left:320px;top:89px;width:107px;height:24px;background:#007acc;"></div><span class="t tab" style="left:327px;top:94px;letter-spacing:-0.19px;">class.smtp.php</span><svg style="left:411px;top:97px" width="9" height="9" viewBox="0 0 9 9" ><path d="M0.5 0.5L8.5 8.5M8.5 0.5L0.5 8.5" stroke="#fff" stroke-width="1.3"/></svg><div class="b" style="left:234px;top:113px;width:779px;height:2px;background:#007acc;"></div><svg style="left:972px;top:98px" width="5" height="8" viewBox="0 0 5 8" ><path d="M4.6 0V8L0.2 4Z" fill="#f0f0f0"/></svg><svg style="left:987px;top:98px" width="5" height="8" viewBox="0 0 5 8" ><path d="M0 0V8L4.4 4Z" fill="#f0f0f0"/></svg><svg style="left:1000px;top:100px" width="8" height="5" viewBox="0 0 8 5" ><path d="M0 0H8L4 4.4Z" fill="#f0f0f0"/></svg></div>
<div id="code"><div class="b" style="left:8px;top:0;width:1px;height:604px;background:#8a8a8a"></div><div class="b" style="left:61px;top:240px;width:625px;height:20px;background:#2a2a2a"></div><div class="b" style="left:61px;top:420px;width:625px;height:20px;background:#dc3030"></div><div class="b" style="left:97px;top:0px;width:1px;height:620px;background-image:linear-gradient(#444 50%,transparent 50%);background-size:1px 2px"></div><div class="b" style="left:133px;top:0px;width:1px;height:20px;background-image:linear-gradient(#444 50%,transparent 50%);background-size:1px 2px"></div><div class="b" style="left:133px;top:40px;width:1px;height:580px;background-image:linear-gradient(#444 50%,transparent 50%);background-size:1px 2px"></div><div class="b" style="left:169px;top:100px;width:1px;height:60px;background-image:linear-gradient(#444 50%,transparent 50%);background-size:1px 2px"></div><div class="b" style="left:205px;top:120px;width:1px;height:20px;background-image:linear-gradient(#444 50%,transparent 50%);background-size:1px 2px"></div><div class="b" style="left:241px;top:120px;width:1px;height:20px;background-image:linear-gradient(#444 50%,transparent 50%);background-size:1px 2px"></div><div class="b" style="left:169px;top:260px;width:1px;height:60px;background-image:linear-gradient(#444 50%,transparent 50%);background-size:1px 2px"></div><div class="b" style="left:169px;top:480px;width:1px;height:20px;background-image:linear-gradient(#444 50%,transparent 50%);background-size:1px 2px"></div><div class="b" style="left:169px;top:560px;width:1px;height:60px;background-image:linear-gradient(#444 50%,transparent 50%);background-size:1px 2px"></div><div class="b" style="left:205px;top:580px;width:1px;height:40px;background-image:linear-gradient(#444 50%,transparent 50%);background-size:1px 2px"></div><div class="b" style="left:241px;top:600px;width:1px;height:20px;background-image:linear-gradient(#444 50%,transparent 50%);background-size:1px 2px"></div><div class="b" style="left:277px;top:600px;width:1px;height:20px;background-image:linear-gradient(#444 50%,transparent 50%);background-size:1px 2px"></div><div class="ln" style="top:0px"><span class="n">430</span><span class="c">         <span class="m">*/</span></span></div><div class="ln" style="top:20px"><span class="n">431</span><span class="c">        <span class="k">function</span> Hello(<span class="v">$host</span><span class="o">=""</span>) {</span></div><div class="ln" style="top:40px"><span class="n">432</span><span class="c">            <span class="v">$this</span><span class="o">-&gt;</span>error = null; <span class="m"># so no confusion</span></span></div><div class="ln" style="top:60px"><span class="n">433</span></div><div class="ln" style="top:80px"><span class="n">434</span><span class="c">            <span class="k">if</span>(!<span class="v">$this</span><span class="o">-&gt;</span>connected()) {</span></div><div class="ln" style="top:100px"><span class="n">435</span><span class="c">                <span class="v">$this</span><span class="o">-&gt;</span>error = array(</span></div><div class="ln" style="top:120px"><span class="n">436</span><span class="c">                        <span class="s">"error"</span> =&gt; <span class="s">"Called Hello() without being connected"</span>);</span></div><div class="ln" style="top:140px"><span class="n">437</span><span class="c">                <span class="k">return</span> false;</span></div><div class="ln" style="top:160px"><span class="n">438</span><span class="c">            }</span></div><div class="ln" style="top:180px"><span class="n">439</span></div><div class="ln" style="top:200px"><span class="n">440</span><span class="c">            <span class="m"># if a hostname for the HELO wasn't specified determine</span></span></div><div class="ln" style="top:220px"><span class="n">441</span><span class="c">            <span class="m"># a suitable one to send</span></span></div><div class="ln" style="top:240px"><span class="n">442</span><span class="c">            <span class="k">if</span>(empty<span style="background:#4a4436">(</span><span class="v">$host</span><span style="background:#4a4436">)</span>) {</span></div><div class="ln" style="top:260px"><span class="n">443</span><span class="c">                <span class="m"># we need to determine some sort of appopiate default</span></span></div><div class="ln" style="top:280px"><span class="n">444</span><span class="c">                <span class="m"># to send to the server</span></span></div><div class="ln" style="top:300px"><span class="n">445</span><span class="c">                <span class="v">$host</span> = <span class="s">"localhost"</span>;</span></div><div class="ln" style="top:320px"><span class="n">446</span><span class="c">            }</span></div><div class="ln" style="top:340px"><span class="n">447</span></div><div class="ln" style="top:360px"><span class="n">448</span><span class="c">            fputs(<span class="v">$this</span><span class="o">-&gt;</span>smtp_conn,<span class="s">"HELO "</span> . <span class="v">$host</span> . <span class="v">$this</span><span class="o">-&gt;</span>CRLF);</span></div><div class="ln" style="top:380px"><span class="n">449</span></div><div class="ln" style="top:400px"><span class="n">450</span><span class="c">            <span class="v">$rply</span> = <span class="v">$this</span><span class="o">-&gt;</span>get_lines();</span></div><div class="ln" style="top:420px"><span class="n">451</span><span class="c">            <span style="color:#fff">$code = substr($rply,0,3);</span></span></div><div class="ln" style="top:440px"><span class="n">452</span></div><div class="ln" style="top:460px"><span class="n">453</span><span class="c">            <span class="k">if</span>(<span class="v">$this</span><span class="o">-&gt;</span>do_debug &gt;= <span class="nu">2</span>) {</span></div><div class="ln" style="top:480px"><span class="n">454</span><span class="c">                <span class="k">echo</span> <span class="s">"SMTP -&gt; FROM SERVER: "</span> . <span class="v">$this</span><span class="o">-&gt;</span>CRLF . <span class="v">$rply</span>;</span></div><div class="ln" style="top:500px"><span class="n">455</span><span class="c">            }</span></div><div class="ln" style="top:520px"><span class="n">456</span></div><div class="ln" style="top:540px"><span class="n">457</span><span class="c">            <span class="k">if</span>(<span class="v">$code</span> != <span class="nu">250</span>) {</span></div><div class="ln" style="top:560px"><span class="n">458</span><span class="c">                <span class="v">$this</span><span class="o">-&gt;</span>error =</span></div><div class="ln" style="top:580px"><span class="n">459</span><span class="c">                    array(<span class="s">"error"</span> =&gt; <span class="s">"HELO not accepted from server"</span>,</span></div><div class="ln" style="top:600px"><span class="n">460</span><span class="c">                          <span class="s">"smtp_code"</span> =&gt; <span class="v">$code</span>,</span></div><div class="b" style="left:250px;top:241px;width:2px;height:18px;background:#fff"></div><div class="b" style="left:4px;top:25px;width:9px;height:9px;border:1px solid #9a9a9a;background:#1f1f1f"><div class="b" style="left:1px;top:3px;width:5px;height:1px;background:#c8c8c8"></div></div><div class="b" style="left:4px;top:85px;width:9px;height:9px;border:1px solid #9a9a9a;background:#1f1f1f"><div class="b" style="left:1px;top:3px;width:5px;height:1px;background:#c8c8c8"></div></div><div class="b" style="left:4px;top:245px;width:9px;height:9px;border:1px solid #9a9a9a;background:#1f1f1f"><div class="b" style="left:1px;top:3px;width:5px;height:1px;background:#c8c8c8"></div></div><div class="b" style="left:4px;top:465px;width:9px;height:9px;border:1px solid #9a9a9a;background:#1f1f1f"><div class="b" style="left:1px;top:3px;width:5px;height:1px;background:#c8c8c8"></div></div><div class="b" style="left:4px;top:545px;width:9px;height:9px;border:1px solid #9a9a9a;background:#1f1f1f"><div class="b" style="left:1px;top:3px;width:5px;height:1px;background:#c8c8c8"></div></div><div class="b" style="left:8px;top:179px;width:7px;height:1px;background:#8a8a8a"></div><div class="b" style="left:8px;top:339px;width:7px;height:1px;background:#8a8a8a"></div><div class="b" style="left:8px;top:519px;width:7px;height:1px;background:#8a8a8a"></div><div class="b" style="left:3px;top:423px;width:14px;height:14px;border-radius:7px;background:#d04a2c"></div></div>
<svg width="76" height="604" viewBox="0 0 76 604" style="left:920px;top:115px;overflow:hidden" shape-rendering="crispEdges"><rect width="76" height="604" fill="#1f1f1f"/><rect x="0" y="240" width="76" height="60" fill="#2e2e2e"/><rect x="0" y="264" width="76" height="1" fill="#484848"/><rect x="0" y="282" width="76" height="2" fill="#e02828"/><rect x="20" y="2" width="1" height="1.6" fill="#5e5e5e" opacity="0.7"/><rect x="22" y="2" width="5" height="1.6" fill="#5e5e5e" opacity="0.7"/><rect x="28" y="2" width="2" height="1.6" fill="#5e5e5e" opacity="0.7"/><rect x="31" y="2" width="3" height="1.6" fill="#5e5e5e" opacity="0.7"/><rect x="35" y="2" width="3" height="1.6" fill="#5e5e5e" opacity="0.7"/><rect x="39" y="2" width="6" height="1.6" fill="#5e5e5e" opacity="0.7"/><rect x="20" y="4" width="2" height="1.6" fill="#5fa3d0" opacity="0.85"/><rect x="22" y="4" width="2" height="1.6" fill="#c4c4c4" opacity="0.85"/><rect x="24" y="4" width="4" height="1.6" fill="#cc4444" opacity="0.85"/><rect x="28" y="4" width="1" height="1.6" fill="#c4c4c4" opacity="0.85"/><rect x="30" y="4" width="1" height="1.6" fill="#c4c4c4" opacity="0.85"/><rect x="24" y="6" width="4" height="1.6" fill="#cc4444" opacity="0.85"/><rect x="29" y="6" width="1" height="1.6" fill="#c4c4c4" opacity="0.85"/><rect x="31" y="6" width="16" height="1.6" fill="#cc4444" opacity="0.85"/><rect x="48" y="6" width="1" height="1.6" fill="#c4c4c4" opacity="0.85"/><rect x="50" y="6" width="1" height="1.6" fill="#b48cc8" opacity="0.85"/><rect x="51" y="6" width="1" height="1.6" fill="#c4c4c4" opacity="0.85"/><rect x="20" y="8" width="1" height="1.6" fill="#c4c4c4" opacity="0.85"/><rect x="20" y="12" width="10" height="1.6" fill="#cc4444" opacity="0.85"/><rect x="30" y="12" width="2" height="1.6" fill="#c4c4c4" opacity="0.85"/><rect x="33" y="12" width="1" height="1.6" fill="#c4c4c4" opacity="0.85"/><rect x="35" y="12" width="7" height="1.6" fill="#c4c4c4" opacity="0.85"/><rect x="42" y="12" width="5" height="1.6" fill="#cc4444" opacity="0.85"/><rect x="47" y="12" width="1" height="1.6" fill="#c4c4c4" opacity="0.85"/><rect x="48" y="12" width="1" height="1.6" fill="#b48cc8" opacity="0.85"/><rect x="49" y="12" width="1" height="1.6" fill="#c4c4c4" opacity="0.85"/><rect x="50" y="12" width="4" height="1.6" fill="#cc4444" opacity="0.85"/><rect x="54" y="12" width="2" height="1.6" fill="#c4c4c4" opacity="0.85"/><rect x="20" y="14" width="5" height="1.6" fill="#cc4444" opacity="0.85"/><rect x="26" y="14" width="1" height="1.6" fill="#c4c4c4" opacity="0.85"/><rect x="28" y="14" width="7" height="1.6" fill="#c4c4c4" opacity="0.85"/><rect x="35" y="14" width="5" height="1.6" fill="#cc4444" opacity="0.85"/><rect x="40" y="14" width="1" height="1.6" fill="#c4c4c4" opacity="0.85"/><rect x="41" y="14" width="4" height="1.6" fill="#cc4444" opacity="0.85"/><rect x="46" y="14" width="1" height="1.6" fill="#c4c4c4" opacity="0.85"/><rect x="48" y="14" width="1" height="1.6" fill="#b48cc8" opacity="0.85"/><rect x="49" y="14" width="2" height="1.6" fill="#c4c4c4" opacity="0.85"/><rect x="20" y="16" width="1" height="1.6" fill="#5e5e5e" opacity="0.7"/><rect x="22" y="16" width="2" height="1.6" fill="#5e5e5e" opacity="0.7"/><rect x="25" y="16" width="2" height="1.6" fill="#5e5e5e" opacity="0.7"/><rect x="28" y="16" width="3" height="1.6" fill="#5e5e5e" opacity="0.7"/><rect x="32" y="16" width="10" height="1.6" fill="#5e5e5e" opacity="0.7"/><rect x="43" y="16" width="7" height="1.6" fill="#5e5e5e" opacity="0.7"/><rect x="51" y="16" width="2" height="1.6" fill="#5e5e5e" opacity="0.7"/><rect x="54" y="16" width="4" height="1.6" fill="#5e5e5e" opacity="0.7"/><rect x="59" y="16" width="2" height="1.6" fill="#5e5e5e" opacity="0.7"/><rect x="20" y="18" width="1" height="1.6" fill="#5e5e5e" opacity="0.7"/><rect x="22" y="18" width="3" height="1.6" fill="#5e5e5e" opacity="0.7"/><rect x="26" y="18" width="1" height="1.6" fill="#5e5e5e" opacity="0.7"/><rect x="28" y="18" width="9" height="1.6" fill="#5e5e5e" opacity="0.7"/><rect x="38" y="18" width="2" height="1.6" fill="#5e5e5e" opacity="0.7"/><rect x="41" y="18" width="3" height="1.6" fill="#5e5e5e" opacity="0.7"/><rect x="45" y="18" width="5" height="1.6" fill="#5e5e5e" opacity="0.7"/><rect x="51" y="18" width="2" height="1.6" fill="#5e5e5e" opacity="0.7"/><rect x="54" y="18" width="3" height="1.6" fill="#5e5e5e" opacity="0.7"/><rect x="58" y="18" width="3" height="1.6" fill="#5e5e5e" opacity="0.7"/><rect x="62" y="18" width="4" height="1.6" fill="#5e5e5e" opacity="0.7"/><rect x="20" y="20" width="1" height="1.6" fill="#5e5e5e" opacity="0.7"/><rect x="22" y="20" width="3" height="1.6" fill="#5e5e5e" opacity="0.7"/><rect x="26" y="20" width="3" height="1.6" fill="#5e5e5e" opacity="0.7"/><rect x="30" y="20" width="2" height="1.6" fill="#5e5e5e" opacity="0.7"/><rect x="33" y="20" width="4" height="1.6" fill="#5e5e5e" opacity="0.7"/><rect x="38" y="20" width="3" height="1.6" fill="#5e5e5e" opacity="0.7"/><rect x="42" y="20" width="7" height="1.6" fill="#5e5e5e" opacity="0.7"/><rect x="20" y="22" width="2" height="1.6" fill="#5fa3d0" opacity="0.85"/><rect x="22" y="22" width="1" height="1.6" fill="#c4c4c4" opacity="0.85"/><rect x="23" y="22" width="11" height="1.6" fill="#cc4444" opacity="0.85"/><rect x="34" y="22" width="1" height="1.6" fill="#c4c4c4" opacity="0.85"/><rect x="36" y="22" width="1" height="1.6" fill="#c4c4c4" opacity="0.85"/><rect x="24" y="24" width="5" height="1.6" fill="#cc4444" opacity="0.85"/><rect x="30" y="24" width="1" height="1.6" fill="#c4c4c4" opacity="0.85"/><rect x="32" y="24" width="4" height="1.6" fill="#93b866" opacity="0.85"/><rect x="37" y="24" width="1" height="1.6" fill="#c4c4c4" opacity="0.85"/><rect x="39" y="24" width="5" height="1.6" fill="#cc4444" opacity="0.85"/><rect x="44" y="24" width="1" height="1.6" fill="#c4c4c4" opacity="0.85"/><rect x="20" y="26" width="1" height="1.6" fill="#c4c4c4" opacity="0.85"/><rect x="16" y="28" width="1" height="1.6" fill="#c4c4c4" opacity="0.85"/><rect x="16" y="30" width="10" height="1.6" fill="#cc4444" opacity="0.85"/><rect x="26" y="30" width="2" height="1.6" fill="#c4c4c4" opacity="0.85"/><rect x="29" y="30" width="1" height="1.6" fill="#c4c4c4" opacity="0.85"/><rect x="31" y="30" width="5" height="1.6" fill="#cc4444" opacity="0.85"/><rect x="36" y="30" width="1" height="1.6" fill="#c4c4c4" opacity="0.85"/><rect x="16" y="34" width="1" height="1.6" fill="#5e5e5e" opacity="0.7"/><rect x="18" y="34" width="3" height="1.6" fill="#5e5e5e" opacity="0.7"/><rect x="22" y="34" width="4" height="1.6" fill="#5e5e5e" opacity="0.7"/><rect x="27" y="34" width="3" height="1.6" fill="#5e5e5e" opacity="0.7"/><rect x="31" y="34" width="5" height="1.6" fill="#5e5e5e" opacity="0.7"/><rect x="37" y="34" width="2" height="1.6" fill="#5e5e5e" opacity="0.7"/><rect x="40" y="34" width="3" height="1.6" fill="#5e5e5e" opacity="0.7"/><rect x="44" y="34" width="6" height="1.6" fill="#5e5e5e" opacity="0.7"/><rect x="16" y="36" width="5" height="1.6" fill="#5fa3d0" opacity="0.85"/><rect x="21" y="36" width="7" height="1.6" fill="#c4c4c4" opacity="0.85"/><rect x="28" y="36" width="9" height="1.6" fill="#cc4444" opacity="0.85"/><rect x="37" y="36" width="1" height="1.6" fill="#c4c4c4" opacity="0.85"/><rect x="39" y="36" width="1" height="1.6" fill="#c4c4c4" opacity="0.85"/><rect x="41" y="36" width="6" height="1.6" fill="#c4c4c4" opacity="0.85"/><rect x="47" y="36" width="10" height="1.6" fill="#cc4444" opacity="0.85"/><rect x="57" y="36" width="2" height="1.6" fill="#c4c4c4" opacity="0.85"/><rect x="60" y="36" width="1" height="1.6" fill="#c4c4c4" opacity="0.85"/><rect x="20" y="38" width="2" height="1.6" fill="#5fa3d0" opacity="0.85"/><rect x="22" y="38" width="8" height="1.6" fill="#c4c4c4" opacity="0.85"/><rect x="30" y="38" width="9" height="1.6" fill="#cc4444" opacity="0.85"/><rect x="39" y="38" width="1" height="1.6" fill="#c4c4c4" opacity="0.85"/><rect x="41" y="38" width="1" height="1.6" fill="#c4c4c4" opacity="0.85"/><rect x="43" y="38" width="1" height="1.6" fill="#b48cc8" opacity="0.85"/><rect x="44" y="38" width="1" height="1.6" fill="#c4c4c4" opacity="0.85"/><rect x="20" y="40" width="1" height="1.6" fill="#c4c4c4" opacity="0.85"/><rect x="24" y="42" width="2" height="1.6" fill="#5fa3d0" opacity="0.85"/><rect x="26" y="42" width="8" height="1.6" fill="#c4c4c4" opacity="0.85"/><rect x="34" y="42" width="9" height="1.6" fill="#cc4444" opacity="0.85"/><rect x="43" y="42" width="1" height="1.6" fill="#c4c4c4" opacity="0.85"/><rect x="45" y="42" width="1" height="1.6" fill="#b48cc8" opacity="0.85"/><rect x="46" y="42" width="1" height="1.6" fill="#c4c4c4" opacity="0.85"/><rect x="48" y="42" width="1" height="1.6" fill="#b48cc8" opacity="0.85"/><rect x="49" y="42" width="1" height="1.6" fill="#c4c4c4" opacity="0.85"/><rect x="51" y="42" width="2" height="1.6" fill="#c4c4c4" opacity="0.85"/><rect x="54" y="42" width="3" height="1.6" fill="#93b866" opacity="0.85"/><rect x="57" y="42" width="1" height="1.6" fill="#c4c4c4" opacity="0.85"/><rect x="59" y="42" width="1" height="1.6" fill="#c4c4c4" opacity="0.85"/><rect x="28" y="44" width="9" height="1.6" fill="#cc4444" opacity="0.85"/><rect x="38" y="44" width="1" height="1.6" fill="#c4c4c4" opacity="0.85"/><rect x="40" y="44" width="3" height="1.6" fill="#93b866" opacity="0.85"/><rect x="44" y="44" width="1" height="1.6" fill="#c4c4c4" opacity="0.85"/><rect x="46" y="44" width="9" height="1.6" fill="#cc4444" opacity="0.85"/><rect x="55" y="44" width="1" height="1.6" fill="#c4c4c4" opacity="0.85"/><rect x="24" y="46" width="1" height="1.6" fill="#c4c4c4" opacity="0.85"/><rect x="20" y="48" width="1" height="1.6" fill="#c4c4c4" opacity="0.85"/><rect x="20" y="50" width="6" height="1.6" fill="#c4c4c4" opacity="0.85"/><rect x="26" y="50" width="5" height="1.6" fill="#cc4444" opacity="0.85"/><rect x="31" y="50" width="12" height="1.6" fill="#c4c4c4" opacity="0.85"/><rect x="43" y="50" width="9" height="1.6" fill="#cc4444" opacity="0.85"/><rect x="53" y="50" width="1" height="1.6" fill="#c4c4c4" opacity="0.85"/><rect x="55" y="50" width="5" height="1.6" fill="#cc4444" opacity="0.85"/><rect x="60" y="50" width="8" height="1.6" fill="#c4c4c4" opacity="0.85"/><rect x="16" y="52" width="1" height="1.6" fill="#c4c4c4" opacity="0.85"/><rect x="12" y="54" width="1" height="1.6" fill="#c4c4c4" opacity="0.85"/><rect x="12" y="58" width="1" height="1.6" fill="#5e5e5e" opacity="0.7"/><rect x="14" y="58" width="2" height="1.6" fill="#5e5e5e" opacity="0.7"/><rect x="17" y="58" width="3" height="1.6" fill="#5e5e5e" opacity="0.7"/><rect x="21" y="58" width="3" height="1.6" fill="#5e5e5e" opacity="0.7"/><rect x="25" y="58" width="7" height="1.6" fill="#5e5e5e" opacity="0.7"/><rect x="33" y="58" width="4" height="1.6" fill="#5e5e5e" opacity="0.7"/><rect x="38" y="58" width="3" height="1.6" fill="#5e5e5e" opacity="0.7"/><rect x="42" y="58" width="4" height="1.6" fill="#5e5e5e" opacity="0.7"/><rect x="47" y="58" width="4" height="1.6" fill="#5e5e5e" opacity="0.7"/><rect x="52" y="58" width="2" height="1.6" fill="#5e5e5e" opacity="0.7"/><rect x="55" y="58" width="4" height="1.6" fill="#5e5e5e" opacity="0.7"/><rect x="60" y="58" width="3" height="1.6" fill="#5e5e5e" opacity="0.7"/><rect x="64" y="58" width="4" height="1.6" fill="#5e5e5e" opacity="0.7"/><rect x="12" y="60" width="1" height="1.6" fill="#5e5e5e" opacity="0.7"/><rect x="14" y="60" width="4" height="1.6" fill="#5e5e5e" opacity="0.7"/><rect x="19" y="60" width="4" height="1.6" fill="#5e5e5e" opacity="0.7"/><rect x="24" y="60" width="6" height="1.6" fill="#5e5e5e" opacity="0.7"/><rect x="12" y="62" width="6" height="1.6" fill="#c4c4c4" opacity="0.85"/><rect x="18" y="62" width="5" height="1.6" fill="#cc4444" opacity="0.85"/><rect x="23" y="62" width="12" height="1.6" fill="#c4c4c4" opacity="0.85"/><rect x="36" y="62" width="5" height="1.6" fill="#cc4444" opacity="0.85"/><rect x="41" y="62" width="6" height="1.6" fill="#c4c4c4" opacity="0.85"/><rect x="48" y="62" width="1" height="1.6" fill="#c4c4c4" opacity="0.85"/><rect x="50" y="62" width="3" height="1.6" fill="#93b866" opacity="0.85"/><rect x="54" y="62" width="1" height="1.6" fill="#c4c4c4" opacity="0.85"/><rect x="56" y="62" width="5" height="1.6" fill="#cc4444" opacity="0.85"/><rect x="61" y="62" width="8" height="1.6" fill="#c4c4c4" opacity="0.85"/><rect x="12" y="66" width="5" height="1.6" fill="#cc4444" opacity="0.85"/><rect x="18" y="66" width="1" height="1.6" fill="#c4c4c4" opacity="0.85"/><rect x="20" y="66" width="5" height="1.6" fill="#cc4444" opacity="0.85"/><rect x="25" y="66" width="14" height="1.6" fill="#c4c4c4" opacity="0.85"/><rect x="12" y="68" width="5" height="1.6" fill="#cc4444" opacity="0.85"/><rect x="18" y="68" width="1" height="1.6" fill="#c4c4c4" opacity="0.85"/><rect x="20" y="68" width="7" height="1.6" fill="#c4c4c4" opacity="0.85"/><rect x="27" y="68" width="5" height="1.6" fill="#cc4444" opacity="0.85"/><rect x="32" y="68" width="1" height="1.6" fill="#c4c4c4" opacity="0.85"/><rect x="33" y="68" width="1" height="1.6" fill="#b48cc8" opacity="0.85"/><rect x="34" y="68" width="1" height="1.6" fill="#c4c4c4" opacity="0.85"/><rect x="35" y="68" width="1" height="1.6" fill="#b48cc8" opacity="0.85"/><rect x="36" y="68" width="2" height="1.6" fill="#c4c4c4" opacity="0.85"/><rect x="12" y="72" width="2" height="1.6" fill="#5fa3d0" opacity="0.85"/><rect x="14" y="72" width="1" height="1.6" fill="#c4c4c4" opacity="0.85"/><rect x="15" y="72" width="5" height="1.6" fill="#cc4444" opacity="0.85"/><rect x="20" y="72" width="10" height="1.6" fill="#c4c4c4" opacity="0.85"/><rect x="31" y="72" width="2" height="1.6" fill="#c4c4c4" opacity="0.85"/><rect x="34" y="72" width="1" height="1.6" fill="#b48cc8" opacity="0.85"/><rect x="35" y="72" width="1" height="1.6" fill="#c4c4c4" opacity="0.85"/><rect x="37" y="72" width="1" height="1.6" fill="#c4c4c4" opacity="0.85"/><rect x="16" y="74" width="4" height="1.6" fill="#5fa3d0" opacity="0.85"/><rect x="21" y="74" width="5" height="1.6" fill="#93b866" opacity="0.85"/><rect x="27" y="74" width="2" height="1.6" fill="#93b866" opacity="0.85"/><rect x="30" y="74" width="4" height="1.6" fill="#93b866" opacity="0.85"/><rect x="35" y="74" width="8" height="1.6" fill="#93b866" opacity="0.85"/><rect x="44" y="74" width="1" height="1.6" fill="#c4c4c4" opacity="0.85"/><rect x="46" y="74" width="5" height="1.6" fill="#cc4444" opacity="0.85"/><rect x="51" y="74" width="6" height="1.6" fill="#c4c4c4" opacity="0.85"/><rect x="58" y="74" width="1" height="1.6" fill="#c4c4c4" opacity="0.85"/><rect x="60" y="74" width="5" height="1.6" fill="#cc4444" opacity="0.85"/><rect x="65" y="74" width="1" height="1.6" fill="#c4c4c4" opacity="0.85"/><rect x="12" y="76" width="1" height="1.6" fill="#c4c4c4" opacity="0.85"/><rect x="12" y="80" width="2" height="1.6" fill="#5fa3d0" opacity="0.85"/><rect x="14" y="80" width="1" height="1.6" fill="#c4c4c4" opacity="0.85"/><rect x="15" y="80" width="5" height="1.6" fill="#cc4444" opacity="0.85"/><rect x="21" y="80" width="2" height="1.6" fill="#c4c4c4" opacity="0.85"/><rect x="24" y="80" width="3" height="1.6" fill="#b48cc8" opacity="0.85"/><rect x="27" y="80" width="1" height="1.6" fill="#c4c4c4" opacity="0.85"/><rect x="29" y="80" width="1" height="1.6" fill="#c4c4c4" opacity="0.85"/><rect x="16" y="82" width="5" height="1.6" fill="#cc4444" opacity="0.85"/><rect x="21" y="82" width="7" height="1.6" fill="#c4c4c4" opacity="0.85"/><rect x="29" y="82" width="1" height="1.6" fill="#c4c4c4" opacity="0.85"/><rect x="20" y="84" width="6" height="1.6" fill="#c4c4c4" opacity="0.85"/><rect x="26" y="84" width="7" height="1.6" fill="#93b866" opacity="0.85"/><rect x="34" y="84" width="2" height="1.6" fill="#c4c4c4" opacity="0.85"/><rect x="37" y="84" width="5" height="1.6" fill="#93b866" opacity="0.85"/><rect x="43" y="84" width="3" height="1.6" fill="#93b866" opacity="0.85"/><rect x="47" y="84" width="8" height="1.6" fill="#93b866" opacity="0.85"/><rect x="56" y="84" width="4" height="1.6" fill="#93b866" opacity="0.85"/><rect x="61" y="84" width="7" height="1.6" fill="#93b866" opacity="0.85"/><rect x="68" y="84" width="1" height="1.6" fill="#c4c4c4" opacity="0.85"/><rect x="26" y="86" width="11" height="1.6" fill="#93b866" opacity="0.85"/><rect x="38" y="86" width="2" height="1.6" fill="#c4c4c4" opacity="0.85"/><rect x="41" y="86" width="5" height="1.6" fill="#cc4444" opacity="0.85"/><rect x="46" y="86" width="1" height="1.6" fill="#c4c4c4" opacity="0.85"/><rect x="26" y="88" width="10" height="1.6" fill="#93b866" opacity="0.85"/><rect x="37" y="88" width="2" height="1.6" fill="#c4c4c4" opacity="0.85"/><rect x="40" y="88" width="7" height="1.6" fill="#c4c4c4" opacity="0.85"/><rect x="47" y="88" width="5" height="1.6" fill="#cc4444" opacity="0.85"/><rect x="52" y="88" width="1" height="1.6" fill="#c4c4c4" opacity="0.85"/><rect x="53" y="88" width="1" height="1.6" fill="#b48cc8" opacity="0.85"/><rect x="54" y="88" width="3" height="1.6" fill="#c4c4c4" opacity="0.85"/><rect x="16" y="90" width="2" height="1.6" fill="#5fa3d0" opacity="0.85"/><rect x="18" y="90" width="1" height="1.6" fill="#c4c4c4" opacity="0.85"/><rect x="19" y="90" width="5" height="1.6" fill="#cc4444" opacity="0.85"/><rect x="24" y="90" width="10" height="1.6" fill="#c4c4c4" opacity="0.85"/><rect x="35" y="90" width="2" height="1.6" fill="#c4c4c4" opacity="0.85"/><rect x="38" y="90" width="1" height="1.6" fill="#b48cc8" opacity="0.85"/><rect x="39" y="90" width="1" height="1.6" fill="#c4c4c4" opacity="0.85"/><rect x="41" y="90" width="1" height="1.6" fill="#c4c4c4" opacity="0.85"/><rect x="20" y="92" width="4" height="1.6" fill="#5fa3d0" opacity="0.85"/><rect x="25" y="92" width="5" height="1.6" fill="#93b866" opacity="0.85"/><rect x="31" y="92" width="2" height="1.6" fill="#93b866" opacity="0.85"/><rect x="34" y="92" width="6" height="1.6" fill="#93b866" opacity="0.85"/><rect x="41" y="92" width="1" height="1.6" fill="#93b866" opacity="0.85"/><rect x="43" y="92" width="1" height="1.6" fill="#c4c4c4" opacity="0.85"/><rect x="45" y="92" width="5" height="1.6" fill="#cc4444" opacity="0.85"/><rect x="50" y="92" width="8" height="1.6" fill="#c4c4c4" opacity="0.85"/><rect x="58" y="92" width="7" height="1.6" fill="#93b866" opacity="0.85"/><rect x="65" y="92" width="1" height="1.6" fill="#c4c4c4" opacity="0.85"/><rect x="67" y="92" width="1" height="1.6" fill="#c4c4c4" opacity="0.85"/><rect x="29" y="94" width="2" height="1.6" fill="#93b866" opacity="0.85"/><rect x="32" y="94" width="1" height="1.6" fill="#93b866" opacity="0.85"/><rect x="34" y="94" width="1" height="1.6" fill="#c4c4c4" opacity="0.85"/><rect x="36" y="94" width="5" height="1.6" fill="#cc4444" opacity="0.85"/><rect x="42" y="94" width="1" height="1.6" fill="#c4c4c4" opacity="0.85"/><rect x="44" y="94" width="5" height="1.6" fill="#cc4444" opacity="0.85"/><rect x="49" y="94" width="7" height="1.6" fill="#c4c4c4" opacity="0.85"/><rect x="16" y="96" width="1" height="1.6" fill="#c4c4c4" opacity="0.85"/><rect x="16" y="98" width="6" height="1.6" fill="#5fa3d0" opacity="0.85"/><rect x="23" y="98" width="6" height="1.6" fill="#c4c4c4" opacity="0.85"/><rect x="12" y="100" width="1" height="1.6" fill="#c4c4c4" opacity="0.85"/><rect x="12" y="102" width="6" height="1.6" fill="#5fa3d0" opacity="0.85"/><rect x="19" y="102" width="5" height="1.6" fill="#c4c4c4" opacity="0.85"/><rect x="8" y="104" width="1" height="1.6" fill="#c4c4c4" opacity="0.85"/><rect x="8" y="108" width="3" height="1.6" fill="#5e5e5e" opacity="0.7"/><rect x="9" y="110" width="1" height="1.6" fill="#5e5e5e" opacity="0.7"/><rect x="11" y="110" width="6" height="1.6" fill="#5e5e5e" opacity="0.7"/><rect x="18" y="110" width="5" height="1.6" fill="#5e5e5e" opacity="0.7"/><rect x="24" y="110" width="3" height="1.6" fill="#5e5e5e" opacity="0.7"/><rect x="28" y="110" width="4" height="1.6" fill="#5e5e5e" opacity="0.7"/><rect x="33" y="110" width="3" height="1.6" fill="#5e5e5e" opacity="0.7"/><rect x="37" y="110" width="4" height="1.6" fill="#5e5e5e" opacity="0.7"/><rect x="42" y="110" width="3" height="1.6" fill="#5e5e5e" opacity="0.7"/><rect x="46" y="110" width="6" height="1.6" fill="#5e5e5e" opacity="0.7"/><rect x="53" y="110" width="2" height="1.6" fill="#5e5e5e" opacity="0.7"/><rect x="56" y="110" width="4" height="1.6" fill="#5e5e5e" opacity="0.7"/><rect x="61" y="110" width="3" height="1.6" fill="#5e5e5e" opacity="0.7"/><rect x="65" y="110" width="3" height="1.6" fill="#5e5e5e" opacity="0.7"/><rect x="9" y="112" width="1" height="1.6" fill="#5e5e5e" opacity="0.7"/><rect x="11" y="112" width="6" height="1.6" fill="#5e5e5e" opacity="0.7"/><rect x="18" y="112" width="3" height="1.6" fill="#5e5e5e" opacity="0.7"/><rect x="22" y="112" width="3" height="1.6" fill="#5e5e5e" opacity="0.7"/><rect x="26" y="112" width="7" height="1.6" fill="#5e5e5e" opacity="0.7"/><rect x="34" y="112" width="2" height="1.6" fill="#5e5e5e" opacity="0.7"/><rect x="37" y="112" width="3" height="1.6" fill="#5e5e5e" opacity="0.7"/><rect x="41" y="112" width="7" height="1.6" fill="#5e5e5e" opacity="0.7"/><rect x="49" y="112" width="6" height="1.6" fill="#5e5e5e" opacity="0.7"/><rect x="56" y="112" width="4" height="1.6" fill="#5e5e5e" opacity="0.7"/><rect x="61" y="112" width="6" height="1.6" fill="#5e5e5e" opacity="0.7"/><rect x="9" y="114" width="1" height="1.6" fill="#5e5e5e" opacity="0.7"/><rect x="11" y="114" width="4" height="1.6" fill="#5e5e5e" opacity="0.7"/><rect x="16" y="114" width="3" height="1.6" fill="#5e5e5e" opacity="0.7"/><rect x="20" y="114" width="5" height="1.6" fill="#5e5e5e" opacity="0.7"/><rect x="26" y="114" width="2" height="1.6" fill="#5e5e5e" opacity="0.7"/><rect x="29" y="114" width="3" height="1.6" fill="#5e5e5e" opacity="0.7"/><rect x="33" y="114" width="6" height="1.6" fill="#5e5e5e" opacity="0.7"/><rect x="40" y="114" width="2" height="1.6" fill="#5e5e5e" opacity="0.7"/><rect x="43" y="114" width="5" height="1.6" fill="#5e5e5e" opacity="0.7"/><rect x="49" y="114" width="2" height="1.6" fill="#5e5e5e" opacity="0.7"/><rect x="52" y="114" width="2" height="1.6" fill="#5e5e5e" opacity="0.7"/><rect x="55" y="114" width="5" height="1.6" fill="#5e5e5e" opacity="0.7"/><rect x="61" y="114" width="7" height="1.6" fill="#5e5e5e" opacity="0.7"/><rect x="9" y="116" width="1" height="1.6" fill="#5e5e5e" opacity="0.7"/><rect x="11" y="116" width="4" height="1.6" fill="#5e5e5e" opacity="0.7"/><rect x="16" y="116" width="5" height="1.6" fill="#5e5e5e" opacity="0.7"/><rect x="22" y="116" width="2" height="1.6" fill="#5e5e5e" opacity="0.7"/><rect x="25" y="116" width="3" height="1.6" fill="#5e5e5e" opacity="0.7"/><rect x="29" y="116" width="5" height="1.6" fill="#5e5e5e" opacity="0.7"/><rect x="35" y="116" width="8" height="1.6" fill="#5e5e5e" opacity="0.7"/><rect x="44" y="116" width="3" height="1.6" fill="#5e5e5e" opacity="0.7"/><rect x="48" y="116" width="3" height="1.6" fill="#5e5e5e" opacity="0.7"/><rect x="52" y="116" width="6" height="1.6" fill="#5e5e5e" opacity="0.7"/><rect x="59" y="116" width="3" height="1.6" fill="#5e5e5e" opacity="0.7"/><rect x="9" y="118" width="1" height="1.6" fill="#5e5e5e" opacity="0.7"/><rect x="15" y="118" width="1" height="1.6" fill="#5e5e5e" opacity="0.7"/><rect x="17" y="118" width="11" height="1.6" fill="#5e5e5e" opacity="0.7"/><rect x="29" y="118" width="4" height="1.6" fill="#5e5e5e" opacity="0.7"/><rect x="34" y="118" width="1" height="1.6" fill="#5e5e5e" opacity="0.7"/><rect x="36" y="118" width="6" height="1.6" fill="#5e5e5e" opacity="0.7"/><rect x="9" y="120" width="1" height="1.6" fill="#5e5e5e" opacity="0.7"/><rect x="11" y="120" width="3" height="1.6" fill="#5e5e5e" opacity="0.7"/><rect x="15" y="120" width="10" height="1.6" fill="#5e5e5e" opacity="0.7"/><rect x="26" y="120" width="2" height="1.6" fill="#5e5e5e" opacity="0.7"/><rect x="29" y="120" width="6" height="1.6" fill="#5e5e5e" opacity="0.7"/><rect x="36" y="120" width="2" height="1.6" fill="#5e5e5e" opacity="0.7"/><rect x="39" y="120" width="7" height="1.6" fill="#5e5e5e" opacity="0.7"/><rect x="47" y="120" width="2" height="1.6" fill="#5e5e5e" opacity="0.7"/><rect x="50" y="120" width="3" height="1.6" fill="#5e5e5e" opacity="0.7"/><rect x="54" y="120" width="3" height="1.6" fill="#5e5e5e" opacity="0.7"/><rect x="9" y="122" width="1" height="1.6" fill="#5e5e5e" opacity="0.7"/><rect x="9" y="124" width="1" height="1.6" fill="#5e5e5e" opacity="0.7"/><rect x="11" y="124" width="10" height="1.6" fill="#5e5e5e" opacity="0.7"/><rect x="22" y="124" width="3" height="1.6" fill="#5e5e5e" opacity="0.7"/><rect x="26" y="124" width="4" height="1.6" fill="#5e5e5e" opacity="0.7"/><rect x="31" y="124" width="4" height="1.6" fill="#5e5e5e" opacity="0.7"/><rect x="36" y="124" width="4" height="1.6" fill="#5e5e5e" opacity="0.7"/><rect x="41" y="124" width="8" height="1.6" fill="#5e5e5e" opacity="0.7"/><rect x="50" y="124" width="6" height="1.6" fill="#5e5e5e" opacity="0.7"/><rect x="9" y="126" width="1" height="1.6" fill="#5e5e5e" opacity="0.7"/><rect x="9" y="128" width="1" height="1.6" fill="#5e5e5e" opacity="0.7"/><rect x="11" y="128" width="4" height="1.6" fill="#5e5e5e" opacity="0.7"/><rect x="16" y="128" width="4" height="1.6" fill="#5e5e5e" opacity="0.7"/><rect x="21" y="128" width="8" height="1.6" fill="#5e5e5e" opacity="0.7"/><rect x="30" y="128" width="3" height="1.6" fill="#5e5e5e" opacity="0.7"/><rect x="9" y="130" width="1" height="1.6" fill="#5e5e5e" opacity="0.7"/><rect x="11" y="130" width="4" height="1.6" fill="#5e5e5e" opacity="0.7"/><rect x="16" y="130" width="4" height="1.6" fill="#5e5e5e" opacity="0.7"/><rect x="21" y="130" width="8" height="1.6" fill="#5e5e5e" opacity="0.7"/><rect x="30" y="130" width="3" height="1.6" fill="#5e5e5e" opacity="0.7"/><rect x="9" y="132" width="1" height="1.6" fill="#5e5e5e" opacity="0.7"/><rect x="11" y="132" width="4" height="1.6" fill="#5e5e5e" opacity="0.7"/><rect x="16" y="132" width="4" height="1.6" fill="#5e5e5e" opacity="0.7"/><rect x="21" y="132" width="5" height="1.6" fill="#5e5e5e" opacity="0.7"/><rect x="28" y="132" width="1" height="1.6" fill="#5e5e5e" opacity="0.7"/><rect x="30" y="132" width="19" height="1.6" fill="#5e5e5e" opacity="0.7"/><rect x="9" y="134" width="1" height="1.6" fill="#5e5e5e" opacity="0.7"/><rect x="11" y="134" width="7" height="1.6" fill="#5e5e5e" opacity="0.7"/><rect x="19" y="134" width="6" height="1.6" fill="#5e5e5e" opacity="0.7"/><rect x="9" y="136" width="1" height="1.6" fill="#5e5e5e" opacity="0.7"/><rect x="11" y="136" width="7" height="1.6" fill="#5e5e5e" opacity="0.7"/><rect x="19" y="136" width="6" height="1.6" fill="#5e5e5e" opacity="0.7"/><rect x="26" y="136" width="5" height="1.6" fill="#5e5e5e" opacity="0.7"/><rect x="9" y="138" width="2" height="1.6" fill="#5e5e5e" opacity="0.7"/><rect x="8" y="140" width="8" height="1.6" fill="#5fa3d0" opacity="0.85"/><rect x="17" y="140" width="7" height="1.6" fill="#c4c4c4" opacity="0.85"/><rect x="24" y="140" width="5" height="1.6" fill="#cc4444" opacity="0.85"/><rect x="29" y="140" width="1" height="1.6" fill="#c4c4c4" opacity="0.85"/><rect x="31" y="140" width="1" height="1.6" fill="#c4c4c4" opacity="0.85"/><rect x="12" y="142" width="5" height="1.6" fill="#cc4444" opacity="0.85"/><rect x="17" y="142" width="7" height="1.6" fill="#c4c4c4" opacity="0.85"/><rect x="25" y="142" width="1" height="1.6" fill="#c4c4c4" opacity="0.85"/><rect x="27" y="142" width="5" height="1.6" fill="#c4c4c4" opacity="0.85"/><rect x="33" y="142" width="1" height="1.6" fill="#5e5e5e" opacity="0.7"/><rect x="35" y="142" width="2" height="1.6" fill="#5e5e5e" opacity="0.7"/><rect x="38" y="142" width="2" height="1.6" fill="#5e5e5e" opacity="0.7"/><rect x="41" y="142" width="9" height="1.6" fill="#5e5e5e" opacity="0.7"/><rect x="51" y="142" width="2" height="1.6" fill="#5e5e5e" opacity="0.7"/><rect x="54" y="142" width="6" height="1.6" fill="#5e5e5e" opacity="0.7"/><rect x="12" y="146" width="2" height="1.6" fill="#5fa3d0" opacity="0.85"/><rect x="14" y="146" width="2" height="1.6" fill="#c4c4c4" opacity="0.85"/><rect x="16" y="146" width="5" height="1.6" fill="#cc4444" opacity="0.85"/><rect x="21" y="146" width="14" height="1.6" fill="#c4c4c4" opacity="0.85"/><rect x="36" y="146" width="1" height="1.6" fill="#c4c4c4" opacity="0.85"/><rect x="16" y="148" width="5" height="1.6" fill="#cc4444" opacity="0.85"/><rect x="21" y="148" width="7" height="1.6" fill="#c4c4c4" opacity="0.85"/><rect x="29" y="148" width="1" height="1.6" fill="#c4c4c4" opacity="0.85"/><rect x="31" y="148" width="6" height="1.6" fill="#c4c4c4" opacity="0.85"/><rect x="24" y="150" width="7" height="1.6" fill="#93b866" opacity="0.85"/><rect x="32" y="150" width="2" height="1.6" fill="#c4c4c4" opacity="0.85"/><rect x="35" y="150" width="7" height="1.6" fill="#93b866" opacity="0.85"/><rect x="43" y="150" width="8" height="1.6" fill="#93b866" opacity="0.85"/><rect x="52" y="150" width="7" height="1.6" fill="#93b866" opacity="0.85"/><rect x="60" y="150" width="5" height="1.6" fill="#93b866" opacity="0.85"/><rect x="66" y="150" width="10" height="1.6" fill="#93b866" opacity="0.85"/><rect x="16" y="152" width="6" height="1.6" fill="#5fa3d0" opacity="0.85"/><rect x="23" y="152" width="6" height="1.6" fill="#c4c4c4" opacity="0.85"/><rect x="12" y="154" width="1" height="1.6" fill="#c4c4c4" opacity="0.85"/><rect x="12" y="158" width="6" height="1.6" fill="#c4c4c4" opacity="0.85"/><rect x="18" y="158" width="5" height="1.6" fill="#cc4444" opacity="0.85"/><rect x="23" y="158" width="12" height="1.6" fill="#c4c4c4" opacity="0.85"/><rect x="35" y="158" width="5" height="1.6" fill="#93b866" opacity="0.85"/><rect x="41" y="158" width="1" height="1.6" fill="#93b866" opacity="0.85"/><rect x="43" y="158" width="1" height="1.6" fill="#c4c4c4" opacity="0.85"/><rect x="45" y="158" width="5" height="1.6" fill="#cc4444" opacity="0.85"/><rect x="51" y="158" width="1" height="1.6" fill="#c4c4c4" opacity="0.85"/><rect x="53" y="158" width="5" height="1.6" fill="#cc4444" opacity="0.85"/><rect x="58" y="158" width="8" height="1.6" fill="#c4c4c4" opacity="0.85"/><rect x="12" y="162" width="5" height="1.6" fill="#cc4444" opacity="0.85"/><rect x="18" y="162" width="1" height="1.6" fill="#c4c4c4" opacity="0.85"/><rect x="20" y="162" width="5" height="1.6" fill="#cc4444" opacity="0.85"/><rect x="25" y="162" width="14" height="1.6" fill="#c4c4c4" opacity="0.85"/><rect x="12" y="164" width="5" height="1.6" fill="#cc4444" opacity="0.85"/><rect x="18" y="164" width="1" height="1.6" fill="#c4c4c4" opacity="0.85"/><rect x="20" y="164" width="7" height="1.6" fill="#c4c4c4" opacity="0.85"/><rect x="27" y="164" width="5" height="1.6" fill="#cc4444" opacity="0.85"/><rect x="32" y="164" width="1" height="1.6" fill="#c4c4c4" opacity="0.85"/><rect x="33" y="164" width="1" height="1.6" fill="#b48cc8" opacity="0.85"/><rect x="34" y="164" width="1" height="1.6" fill="#c4c4c4" opacity="0.85"/><rect x="35" y="164" width="1" height="1.6" fill="#b48cc8" opacity="0.85"/><rect x="36" y="164" width="2" height="1.6" fill="#c4c4c4" opacity="0.85"/><rect x="12" y="168" width="2" height="1.6" fill="#5fa3d0" opacity="0.85"/><rect x="14" y="168" width="1" height="1.6" fill="#c4c4c4" opacity="0.85"/><rect x="15" y="168" width="5" height="1.6" fill="#cc4444" opacity="0.85"/><rect x="20" y="168" width="10" height="1.6" fill="#c4c4c4" opacity="0.85"/><rect x="31" y="168" width="2" height="1.6" fill="#c4c4c4" opacity="0.85"/><rect x="34" y="168" width="1" height="1.6" fill="#b48cc8" opacity="0.85"/><rect x="35" y="168" width="1" height="1.6" fill="#c4c4c4" opacity="0.85"/><rect x="37" y="168" width="1" height="1.6" fill="#c4c4c4" opacity="0.85"/><rect x="16" y="170" width="4" height="1.6" fill="#5fa3d0" opacity="0.85"/><rect x="21" y="170" width="5" height="1.6" fill="#93b866" opacity="0.85"/><rect x="27" y="170" width="2" height="1.6" fill="#93b866" opacity="0.85"/><rect x="30" y="170" width="4" height="1.6" fill="#93b866" opacity="0.85"/><rect x="35" y="170" width="8" height="1.6" fill="#93b866" opacity="0.85"/><rect x="44" y="170" width="1" height="1.6" fill="#c4c4c4" opacity="0.85"/><rect x="46" y="170" width="5" height="1.6" fill="#cc4444" opacity="0.85"/><rect x="51" y="170" width="6" height="1.6" fill="#c4c4c4" opacity="0.85"/><rect x="58" y="170" width="1" height="1.6" fill="#c4c4c4" opacity="0.85"/><rect x="60" y="170" width="5" height="1.6" fill="#cc4444" opacity="0.85"/><rect x="65" y="170" width="1" height="1.6" fill="#c4c4c4" opacity="0.85"/><rect x="12" y="172" width="1" height="1.6" fill="#c4c4c4" opacity="0.85"/><rect x="12" y="176" width="2" height="1.6" fill="#5fa3d0" opacity="0.85"/><rect x="14" y="176" width="1" height="1.6" fill="#c4c4c4" opacity="0.85"/><rect x="15" y="176" width="5" height="1.6" fill="#cc4444" opacity="0.85"/><rect x="21" y="176" width="2" height="1.6" fill="#c4c4c4" opacity="0.85"/><rect x="24" y="176" width="3" height="1.6" fill="#b48cc8" opacity="0.85"/><rect x="27" y="176" width="1" height="1.6" fill="#c4c4c4" opacity="0.85"/><rect x="29" y="176" width="1" height="1.6" fill="#c4c4c4" opacity="0.85"/><rect x="16" y="178" width="5" height="1.6" fill="#cc4444" opacity="0.85"/><rect x="21" y="178" width="7" height="1.6" fill="#c4c4c4" opacity="0.85"/><rect x="29" y="178" width="1" height="1.6" fill="#c4c4c4" opacity="0.85"/><rect x="20" y="180" width="6" height="1.6" fill="#c4c4c4" opacity="0.85"/><rect x="26" y="180" width="7" height="1.6" fill="#93b866" opacity="0.85"/><rect x="34" y="180" width="2" height="1.6" fill="#c4c4c4" opacity="0.85"/><rect x="37" y="180" width="5" height="1.6" fill="#93b866" opacity="0.85"/><rect x="43" y="180" width="3" height="1.6" fill="#93b866" opacity="0.85"/><rect x="47" y="180" width="8" height="1.6" fill="#93b866" opacity="0.85"/><rect x="56" y="180" width="4" height="1.6" fill="#93b866" opacity="0.85"/><rect x="61" y="180" width="7" height="1.6" fill="#93b866" opacity="0.85"/><rect x="68" y="180" width="1" height="1.6" fill="#c4c4c4" opacity="0.85"/><rect x="26" y="182" width="11" height="1.6" fill="#93b866" opacity="0.85"/><rect x="38" y="182" width="2" height="1.6" fill="#c4c4c4" opacity="0.85"/><rect x="41" y="182" width="5" height="1.6" fill="#cc4444" opacity="0.85"/><rect x="46" y="182" width="1" height="1.6" fill="#c4c4c4" opacity="0.85"/><rect x="26" y="184" width="10" height="1.6" fill="#93b866" opacity="0.85"/><rect x="37" y="184" width="2" height="1.6" fill="#c4c4c4" opacity="0.85"/><rect x="40" y="184" width="7" height="1.6" fill="#c4c4c4" opacity="0.85"/><rect x="47" y="184" width="5" height="1.6" fill="#cc4444" opacity="0.85"/><rect x="52" y="184" width="1" height="1.6" fill="#c4c4c4" opacity="0.85"/><rect x="53" y="184" width="1" height="1.6" fill="#b48cc8" opacity="0.85"/><rect x="54" y="184" width="3" height="1.6" fill="#c4c4c4" opacity="0.85"/><rect x="16" y="186" width="2" height="1.6" fill="#5fa3d0" opacity="0.85"/><rect x="18" y="186" width="1" height="1.6" fill="#c4c4c4" opacity="0.85"/><rect x="19" y="186" width="5" height="1.6" fill="#cc4444" opacity="0.85"/><rect x="24" y="186" width="10" height="1.6" fill="#c4c4c4" opacity="0.85"/><rect x="35" y="186" width="2" height="1.6" fill="#c4c4c4" opacity="0.85"/><rect x="38" y="186" width="1" height="1.6" fill="#b48cc8" opacity="0.85"/><rect x="39" y="186" width="1" height="1.6" fill="#c4c4c4" opacity="0.85"/><rect x="41" y="186" width="1" height="1.6" fill="#c4c4c4" opacity="0.85"/><rect x="20" y="188" width="4" height="1.6" fill="#5fa3d0" opacity="0.85"/><rect x="25" y="188" width="5" height="1.6" fill="#93b866" opacity="0.85"/><rect x="31" y="188" width="2" height="1.6" fill="#93b866" opacity="0.85"/><rect x="34" y="188" width="6" height="1.6" fill="#93b866" opacity="0.85"/><rect x="41" y="188" width="1" height="1.6" fill="#93b866" opacity="0.85"/><rect x="43" y="188" width="1" height="1.6" fill="#c4c4c4" opacity="0.85"/><rect x="45" y="188" width="5" height="1.6" fill="#cc4444" opacity="0.85"/><rect x="50" y="188" width="8" height="1.6" fill="#c4c4c4" opacity="0.85"/><rect x="58" y="188" width="7" height="1.6" fill="#93b866" opacity="0.85"/><rect x="65" y="188" width="1" height="1.6" fill="#c4c4c4" opacity="0.85"/><rect x="67" y="188" width="1" height="1.6" fill="#c4c4c4" opacity="0.85"/><rect x="29" y="190" width="2" height="1.6" fill="#93b866" opacity="0.85"/><rect x="32" y="190" width="1" height="1.6" fill="#93b866" opacity="0.85"/><rect x="34" y="190" width="1" height="1.6" fill="#c4c4c4" opacity="0.85"/><rect x="36" y="190" width="5" height="1.6" fill="#cc4444" opacity="0.85"/><rect x="42" y="190" width="1" height="1.6" fill="#c4c4c4" opacity="0.85"/><rect x="44" y="190" width="5" height="1.6" fill="#cc4444" opacity="0.85"/><rect x="49" y="190" width="7" height="1.6" fill="#c4c4c4" opacity="0.85"/><rect x="16" y="192" width="1" height="1.6" fill="#c4c4c4" opacity="0.85"/><rect x="16" y="194" width="6" height="1.6" fill="#5fa3d0" opacity="0.85"/><rect x="23" y="194" width="6" height="1.6" fill="#c4c4c4" opacity="0.85"/><rect x="12" y="196" width="1" height="1.6" fill="#c4c4c4" opacity="0.85"/><rect x="12" y="200" width="1" height="1.6" fill="#5e5e5e" opacity="0.7"/><rect x="14" y="200" width="5" height="1.6" fill="#5e5e5e" opacity="0.7"/><rect x="20" y="200" width="3" height="1.6" fill="#5e5e5e" opacity="0.7"/><rect x="24" y="200" width="5" height="1.6" fill="#5e5e5e" opacity="0.7"/><rect x="30" y="200" width="3" height="1.6" fill="#5e5e5e" opacity="0.7"/><rect x="34" y="200" width="5" height="1.6" fill="#5e5e5e" opacity="0.7"/><rect x="40" y="200" width="2" height="1.6" fill="#5e5e5e" opacity="0.7"/><rect x="43" y="200" width="3" height="1.6" fill="#5e5e5e" opacity="0.7"/><rect x="47" y="200" width="5" height="1.6" fill="#5e5e5e" opacity="0.7"/><rect x="53" y="200" width="2" height="1.6" fill="#5e5e5e" opacity="0.7"/><rect x="56" y="200" width="6" height="1.6" fill="#5e5e5e" opacity="0.7"/><rect x="63" y="200" width="2" height="1.6" fill="#5e5e5e" opacity="0.7"/><rect x="66" y="200" width="4" height="1.6" fill="#5e5e5e" opacity="0.7"/><rect x="12" y="202" width="8" height="1.6" fill="#cc4444" opacity="0.85"/><rect x="21" y="202" width="1" height="1.6" fill="#c4c4c4" opacity="0.85"/><rect x="23" y="202" width="8" height="1.6" fill="#c4c4c4" opacity="0.85"/><rect x="31" y="202" width="5" height="1.6" fill="#cc4444" opacity="0.85"/><rect x="36" y="202" width="7" height="1.6" fill="#c4c4c4" opacity="0.85"/><rect x="43" y="202" width="5" height="1.6" fill="#cc4444" opacity="0.85"/><rect x="48" y="202" width="2" height="1.6" fill="#c4c4c4" opacity="0.85"/><rect x="12" y="204" width="5" height="1.6" fill="#5fa3d0" opacity="0.85"/><rect x="17" y="204" width="7" height="1.6" fill="#c4c4c4" opacity="0.85"/><rect x="24" y="204" width="2" height="1.6" fill="#cc4444" opacity="0.85"/><rect x="26" y="204" width="1" height="1.6" fill="#c4c4c4" opacity="0.85"/><rect x="28" y="204" width="1" height="1.6" fill="#c4c4c4" opacity="0.85"/><rect x="30" y="204" width="6" height="1.6" fill="#c4c4c4" opacity="0.85"/><rect x="36" y="204" width="8" height="1.6" fill="#cc4444" opacity="0.85"/><rect x="44" y="204" width="2" height="1.6" fill="#c4c4c4" opacity="0.85"/><rect x="47" y="204" width="1" height="1.6" fill="#c4c4c4" opacity="0.85"/><rect x="16" y="206" width="5" height="1.6" fill="#cc4444" opacity="0.85"/><rect x="21" y="206" width="2" height="1.6" fill="#c4c4c4" opacity="0.85"/><rect x="24" y="206" width="1" height="1.6" fill="#c4c4c4" opacity="0.85"/><rect x="26" y="206" width="7" height="1.6" fill="#c4c4c4" opacity="0.85"/><rect x="33" y="206" width="2" height="1.6" fill="#cc4444" opacity="0.85"/><rect x="35" y="206" width="1" height="1.6" fill="#c4c4c4" opacity="0.85"/><rect x="36" y="206" width="1" height="1.6" fill="#b48cc8" opacity="0.85"/><rect x="37" y="206" width="2" height="1.6" fill="#c4c4c4" opacity="0.85"/><rect x="12" y="208" width="1" height="1.6" fill="#c4c4c4" opacity="0.85"/><rect x="12" y="212" width="6" height="1.6" fill="#5fa3d0" opacity="0.85"/><rect x="19" y="212" width="5" height="1.6" fill="#cc4444" opacity="0.85"/><rect x="24" y="212" width="1" height="1.6" fill="#c4c4c4" opacity="0.85"/><rect x="8" y="214" width="1" height="1.6" fill="#c4c4c4" opacity="0.85"/><rect x="8" y="218" width="3" height="1.6" fill="#5e5e5e" opacity="0.7"/><rect x="9" y="220" width="1" height="1.6" fill="#5e5e5e" opacity="0.7"/><rect x="11" y="220" width="5" height="1.6" fill="#5e5e5e" opacity="0.7"/><rect x="17" y="220" width="3" height="1.6" fill="#5e5e5e" opacity="0.7"/><rect x="21" y="220" width="4" height="1.6" fill="#5e5e5e" opacity="0.7"/><rect x="26" y="220" width="7" height="1.6" fill="#5e5e5e" opacity="0.7"/><rect x="34" y="220" width="2" height="1.6" fill="#5e5e5e" opacity="0.7"/><rect x="37" y="220" width="3" height="1.6" fill="#5e5e5e" opacity="0.7"/><rect x="41" y="220" width="4" height="1.6" fill="#5e5e5e" opacity="0.7"/><rect x="46" y="220" width="7" height="1.6" fill="#5e5e5e" opacity="0.7"/><rect x="9" y="222" width="1" height="1.6" fill="#5e5e5e" opacity="0.7"/><rect x="11" y="222" width="4" height="1.6" fill="#5e5e5e" opacity="0.7"/><rect x="16" y="222" width="5" height="1.6" fill="#5e5e5e" opacity="0.7"/><rect x="22" y="222" width="4" height="1.6" fill="#5e5e5e" opacity="0.7"/><rect x="27" y="222" width="4" height="1.6" fill="#5e5e5e" opacity="0.7"/><rect x="32" y="222" width="2" height="1.6" fill="#5e5e5e" opacity="0.7"/><rect x="35" y="222" width="3" height="1.6" fill="#5e5e5e" opacity="0.7"/><rect x="39" y="222" width="3" height="1.6" fill="#5e5e5e" opacity="0.7"/><rect x="43" y="222" width="6" height="1.6" fill="#5e5e5e" opacity="0.7"/><rect x="50" y="222" width="3" height="1.6" fill="#5e5e5e" opacity="0.7"/><rect x="54" y="222" width="2" height="1.6" fill="#5e5e5e" opacity="0.7"/><rect x="9" y="224" width="1" height="1.6" fill="#5e5e5e" opacity="0.7"/><rect x="11" y="224" width="3" height="1.6" fill="#5e5e5e" opacity="0.7"/><rect x="15" y="224" width="4" height="1.6" fill="#5e5e5e" opacity="0.7"/><rect x="20" y="224" width="5" height="1.6" fill="#5e5e5e" opacity="0.7"/><rect x="26" y="224" width="6" height="1.6" fill="#5e5e5e" opacity="0.7"/><rect x="9" y="226" width="1" height="1.6" fill="#5e5e5e" opacity="0.7"/><rect x="9" y="228" width="1" height="1.6" fill="#5e5e5e" opacity="0.7"/><rect x="11" y="228" width="10" height="1.6" fill="#5e5e5e" opacity="0.7"/><rect x="22" y="228" width="4" height="1.6" fill="#5e5e5e" opacity="0.7"/><rect x="27" y="228" width="3" height="1.6" fill="#5e5e5e" opacity="0.7"/><rect x="31" y="228" width="4" height="1.6" fill="#5e5e5e" opacity="0.7"/><rect x="36" y="228" width="4" height="1.6" fill="#5e5e5e" opacity="0.7"/><rect x="41" y="228" width="4" height="1.6" fill="#5e5e5e" opacity="0.7"/><rect x="46" y="228" width="8" height="1.6" fill="#5e5e5e" opacity="0.7"/><rect x="55" y="228" width="6" height="1.6" fill="#5e5e5e" opacity="0.7"/><rect x="9" y="230" width="1" height="1.6" fill="#5e5e5e" opacity="0.7"/><rect x="9" y="232" width="1" height="1.6" fill="#5e5e5e" opacity="0.7"/><rect x="11" y="232" width="4" height="1.6" fill="#5e5e5e" opacity="0.7"/><rect x="16" y="232" width="4" height="1.6" fill="#5e5e5e" opacity="0.7"/><rect x="21" y="232" width="8" height="1.6" fill="#5e5e5e" opacity="0.7"/><rect x="30" y="232" width="3" height="1.6" fill="#5e5e5e" opacity="0.7"/><rect x="9" y="234" width="1" height="1.6" fill="#5e5e5e" opacity="0.7"/><rect x="11" y="234" width="4" height="1.6" fill="#5e5e5e" opacity="0.7"/><rect x="16" y="234" width="4" height="1.6" fill="#5e5e5e" opacity="0.7"/><rect x="21" y="234" width="5" height="1.6" fill="#5e5e5e" opacity="0.7"/><rect x="28" y="234" width="1" height="1.6" fill="#5e5e5e" opacity="0.7"/><rect x="30" y="234" width="4" height="1.6" fill="#5e5e5e" opacity="0.7"/><rect x="35" y="234" width="4" height="1.6" fill="#5e5e5e" opacity="0.7"/><rect x="40" y="234" width="4" height="1.6" fill="#5e5e5e" opacity="0.7"/><rect x="45" y="234" width="3" height="1.6" fill="#5e5e5e" opacity="0.7"/><rect x="9" y="236" width="1" height="1.6" fill="#5e5e5e" opacity="0.7"/><rect x="11" y="236" width="7" height="1.6" fill="#5e5e5e" opacity="0.7"/><rect x="19" y="236" width="6" height="1.6" fill="#5e5e5e" opacity="0.7"/><rect x="9" y="238" width="1" height="1.6" fill="#5e5e5e" opacity="0.7"/><rect x="11" y="238" width="7" height="1.6" fill="#5e5e5e" opacity="0.7"/><rect x="19" y="238" width="4" height="1.6" fill="#5e5e5e" opacity="0.7"/><rect x="9" y="240" width="2" height="1.6" fill="#5e5e5e" opacity="0.7"/><rect x="8" y="242" width="8" height="1.6" fill="#5fa3d0" opacity="0.85"/><rect x="17" y="242" width="6" height="1.6" fill="#c4c4c4" opacity="0.85"/><rect x="23" y="242" width="5" height="1.6" fill="#cc4444" opacity="0.85"/><rect x="28" y="242" width="3" height="1.6" fill="#a0a0a0" opacity="0.85"/><rect x="31" y="242" width="1" height="1.6" fill="#c4c4c4" opacity="0.85"/><rect x="33" y="242" width="1" height="1.6" fill="#c4c4c4" opacity="0.85"/><rect x="12" y="244" width="5" height="1.6" fill="#cc4444" opacity="0.85"/><rect x="17" y="244" width="2" height="1.6" fill="#a0a0a0" opacity="0.85"/><rect x="19" y="244" width="5" height="1.6" fill="#c4c4c4" opacity="0.85"/><rect x="25" y="244" width="1" height="1.6" fill="#c4c4c4" opacity="0.85"/><rect x="27" y="244" width="5" height="1.6" fill="#c4c4c4" opacity="0.85"/><rect x="33" y="244" width="1" height="1.6" fill="#5e5e5e" opacity="0.7"/><rect x="35" y="244" width="2" height="1.6" fill="#5e5e5e" opacity="0.7"/><rect x="38" y="244" width="2" height="1.6" fill="#5e5e5e" opacity="0.7"/><rect x="41" y="244" width="9" height="1.6" fill="#5e5e5e" opacity="0.7"/><rect x="12" y="248" width="2" height="1.6" fill="#5fa3d0" opacity="0.85"/><rect x="14" y="248" width="2" height="1.6" fill="#c4c4c4" opacity="0.85"/><rect x="16" y="248" width="5" height="1.6" fill="#cc4444" opacity="0.85"/><rect x="21" y="248" width="2" height="1.6" fill="#a0a0a0" opacity="0.85"/><rect x="23" y="248" width="12" height="1.6" fill="#c4c4c4" opacity="0.85"/><rect x="36" y="248" width="1" height="1.6" fill="#c4c4c4" opacity="0.85"/><rect x="16" y="250" width="5" height="1.6" fill="#cc4444" opacity="0.85"/><rect x="21" y="250" width="2" height="1.6" fill="#a0a0a0" opacity="0.85"/><rect x="23" y="250" width="5" height="1.6" fill="#c4c4c4" opacity="0.85"/><rect x="29" y="250" width="1" height="1.6" fill="#c4c4c4" opacity="0.85"/><rect x="31" y="250" width="6" height="1.6" fill="#c4c4c4" opacity="0.85"/><rect x="24" y="252" width="7" height="1.6" fill="#93b866" opacity="0.85"/><rect x="32" y="252" width="2" height="1.6" fill="#c4c4c4" opacity="0.85"/><rect x="35" y="252" width="7" height="1.6" fill="#93b866" opacity="0.85"/><rect x="43" y="252" width="7" height="1.6" fill="#93b866" opacity="0.85"/><rect x="51" y="252" width="7" height="1.6" fill="#93b866" opacity="0.85"/><rect x="59" y="252" width="5" height="1.6" fill="#93b866" opacity="0.85"/><rect x="65" y="252" width="10" height="1.6" fill="#93b866" opacity="0.85"/><rect x="75" y="252" width="1" height="1.6" fill="#c4c4c4" opacity="0.85"/><rect x="16" y="254" width="6" height="1.6" fill="#5fa3d0" opacity="0.85"/><rect x="23" y="254" width="6" height="1.6" fill="#c4c4c4" opacity="0.85"/><rect x="12" y="256" width="1" height="1.6" fill="#c4c4c4" opacity="0.85"/><rect x="12" y="260" width="1" height="1.6" fill="#5e5e5e" opacity="0.7"/><rect x="14" y="260" width="2" height="1.6" fill="#5e5e5e" opacity="0.7"/><rect x="17" y="260" width="1" height="1.6" fill="#5e5e5e" opacity="0.7"/><rect x="19" y="260" width="8" height="1.6" fill="#5e5e5e" opacity="0.7"/><rect x="28" y="260" width="3" height="1.6" fill="#5e5e5e" opacity="0.7"/><rect x="32" y="260" width="3" height="1.6" fill="#5e5e5e" opacity="0.7"/><rect x="36" y="260" width="4" height="1.6" fill="#5e5e5e" opacity="0.7"/><rect x="41" y="260" width="6" height="1.6" fill="#5e5e5e" opacity="0.7"/><rect x="48" y="260" width="9" height="1.6" fill="#5e5e5e" opacity="0.7"/><rect x="58" y="260" width="9" height="1.6" fill="#5e5e5e" opacity="0.7"/><rect x="12" y="262" width="1" height="1.6" fill="#5e5e5e" opacity="0.7"/><rect x="14" y="262" width="1" height="1.6" fill="#5e5e5e" opacity="0.7"/><rect x="16" y="262" width="8" height="1.6" fill="#5e5e5e" opacity="0.7"/><rect x="25" y="262" width="3" height="1.6" fill="#5e5e5e" opacity="0.7"/><rect x="29" y="262" width="2" height="1.6" fill="#5e5e5e" opacity="0.7"/><rect x="32" y="262" width="4" height="1.6" fill="#5e5e5e" opacity="0.7"/><rect x="12" y="264" width="2" height="1.6" fill="#5fa3d0" opacity="0.85"/><rect x="14" y="264" width="6" height="1.6" fill="#c4c4c4" opacity="0.85"/><rect x="20" y="264" width="1" height="1.6" fill="#c4c4c4" opacity="0.85"/><rect x="21" y="264" width="5" height="1.6" fill="#cc4444" opacity="0.85"/><rect x="26" y="264" width="1" height="1.6" fill="#c4c4c4" opacity="0.85"/><rect x="27" y="264" width="1" height="1.6" fill="#c4c4c4" opacity="0.85"/><rect x="29" y="264" width="1" height="1.6" fill="#c4c4c4" opacity="0.85"/><rect x="16" y="266" width="1" height="1.6" fill="#5e5e5e" opacity="0.7"/><rect x="18" y="266" width="2" height="1.6" fill="#5e5e5e" opacity="0.7"/><rect x="21" y="266" width="4" height="1.6" fill="#5e5e5e" opacity="0.7"/><rect x="26" y="266" width="2" height="1.6" fill="#5e5e5e" opacity="0.7"/><rect x="29" y="266" width="9" height="1.6" fill="#5e5e5e" opacity="0.7"/><rect x="39" y="266" width="4" height="1.6" fill="#5e5e5e" opacity="0.7"/><rect x="44" y="266" width="4" height="1.6" fill="#5e5e5e" opacity="0.7"/><rect x="49" y="266" width="2" height="1.6" fill="#5e5e5e" opacity="0.7"/><rect x="52" y="266" width="9" height="1.6" fill="#5e5e5e" opacity="0.7"/><rect x="62" y="266" width="7" height="1.6" fill="#5e5e5e" opacity="0.7"/><rect x="16" y="268" width="1" height="1.6" fill="#5e5e5e" opacity="0.7"/><rect x="18" y="268" width="2" height="1.6" fill="#5e5e5e" opacity="0.7"/><rect x="21" y="268" width="4" height="1.6" fill="#5e5e5e" opacity="0.7"/><rect x="26" y="268" width="2" height="1.6" fill="#5e5e5e" opacity="0.7"/><rect x="29" y="268" width="3" height="1.6" fill="#5e5e5e" opacity="0.7"/><rect x="33" y="268" width="6" height="1.6" fill="#5e5e5e" opacity="0.7"/><rect x="16" y="270" width="5" height="1.6" fill="#cc4444" opacity="0.85"/><rect x="22" y="270" width="1" height="1.6" fill="#c4c4c4" opacity="0.85"/><rect x="24" y="270" width="11" height="1.6" fill="#93b866" opacity="0.85"/><rect x="35" y="270" width="1" height="1.6" fill="#c4c4c4" opacity="0.85"/><rect x="12" y="272" width="1" height="1.6" fill="#c4c4c4" opacity="0.85"/><rect x="12" y="276" width="6" height="1.6" fill="#c4c4c4" opacity="0.85"/><rect x="18" y="276" width="5" height="1.6" fill="#cc4444" opacity="0.85"/><rect x="23" y="276" width="2" height="1.6" fill="#a0a0a0" opacity="0.85"/><rect x="25" y="276" width="10" height="1.6" fill="#c4c4c4" opacity="0.85"/><rect x="35" y="276" width="5" height="1.6" fill="#93b866" opacity="0.85"/><rect x="41" y="276" width="1" height="1.6" fill="#93b866" opacity="0.85"/><rect x="43" y="276" width="1" height="1.6" fill="#c4c4c4" opacity="0.85"/><rect x="45" y="276" width="5" height="1.6" fill="#cc4444" opacity="0.85"/><rect x="51" y="276" width="1" height="1.6" fill="#c4c4c4" opacity="0.85"/><rect x="53" y="276" width="5" height="1.6" fill="#cc4444" opacity="0.85"/><rect x="58" y="276" width="2" height="1.6" fill="#a0a0a0" opacity="0.85"/><rect x="60" y="276" width="6" height="1.6" fill="#c4c4c4" opacity="0.85"/><rect x="12" y="280" width="5" height="1.6" fill="#cc4444" opacity="0.85"/><rect x="18" y="280" width="1" height="1.6" fill="#c4c4c4" opacity="0.85"/><rect x="20" y="280" width="5" height="1.6" fill="#cc4444" opacity="0.85"/><rect x="25" y="280" width="2" height="1.6" fill="#a0a0a0" opacity="0.85"/><rect x="27" y="280" width="12" height="1.6" fill="#c4c4c4" opacity="0.85"/><rect x="12" y="282" width="5" height="1.6" fill="#c4c4c4" opacity="0.85"/><rect x="18" y="282" width="1" height="1.6" fill="#c4c4c4" opacity="0.85"/><rect x="20" y="282" width="18" height="1.6" fill="#c4c4c4" opacity="0.85"/><rect x="12" y="286" width="2" height="1.6" fill="#5fa3d0" opacity="0.85"/><rect x="14" y="286" width="1" height="1.6" fill="#c4c4c4" opacity="0.85"/><rect x="15" y="286" width="5" height="1.6" fill="#cc4444" opacity="0.85"/><rect x="20" y="286" width="2" height="1.6" fill="#a0a0a0" opacity="0.85"/><rect x="22" y="286" width="8" height="1.6" fill="#c4c4c4" opacity="0.85"/><rect x="31" y="286" width="2" height="1.6" fill="#c4c4c4" opacity="0.85"/><rect x="34" y="286" width="1" height="1.6" fill="#b48cc8" opacity="0.85"/><rect x="35" y="286" width="1" height="1.6" fill="#c4c4c4" opacity="0.85"/><rect x="37" y="286" width="1" height="1.6" fill="#c4c4c4" opacity="0.85"/><rect x="16" y="288" width="4" height="1.6" fill="#5fa3d0" opacity="0.85"/><rect x="21" y="288" width="5" height="1.6" fill="#93b866" opacity="0.85"/><rect x="27" y="288" width="2" height="1.6" fill="#93b866" opacity="0.85"/><rect x="30" y="288" width="4" height="1.6" fill="#93b866" opacity="0.85"/><rect x="35" y="288" width="7" height="1.6" fill="#93b866" opacity="0.85"/><rect x="43" y="288" width="1" height="1.6" fill="#93b866" opacity="0.85"/><rect x="45" y="288" width="1" height="1.6" fill="#c4c4c4" opacity="0.85"/><rect x="47" y="288" width="5" height="1.6" fill="#cc4444" opacity="0.85"/><rect x="52" y="288" width="2" height="1.6" fill="#a0a0a0" opacity="0.85"/><rect x="54" y="288" width="4" height="1.6" fill="#c4c4c4" opacity="0.85"/><rect x="59" y="288" width="1" height="1.6" fill="#c4c4c4" opacity="0.85"/><rect x="61" y="288" width="5" height="1.6" fill="#cc4444" opacity="0.85"/><rect x="66" y="288" width="1" height="1.6" fill="#c4c4c4" opacity="0.85"/><rect x="12" y="290" width="1" height="1.6" fill="#c4c4c4" opacity="0.85"/><rect x="12" y="294" width="2" height="1.6" fill="#5fa3d0" opacity="0.85"/><rect x="14" y="294" width="1" height="1.6" fill="#c4c4c4" opacity="0.85"/><rect x="15" y="294" width="5" height="1.6" fill="#cc4444" opacity="0.85"/><rect x="21" y="294" width="2" height="1.6" fill="#c4c4c4" opacity="0.85"/><rect x="24" y="294" width="3" height="1.6" fill="#b48cc8" opacity="0.85"/><rect x="27" y="294" width="1" height="1.6" fill="#c4c4c4" opacity="0.85"/><rect x="29" y="294" width="1" height="1.6" fill="#c4c4c4" opacity="0.85"/><rect x="16" y="296" width="5" height="1.6" fill="#cc4444" opacity="0.85"/><rect x="21" y="296" width="2" height="1.6" fill="#a0a0a0" opacity="0.85"/><rect x="23" y="296" width="5" height="1.6" fill="#c4c4c4" opacity="0.85"/><rect x="29" y="296" width="1" height="1.6" fill="#c4c4c4" opacity="0.85"/><rect x="20" y="298" width="6" height="1.6" fill="#c4c4c4" opacity="0.85"/><rect x="26" y="298" width="7" height="1.6" fill="#93b866" opacity="0.85"/><rect x="34" y="298" width="2" height="1.6" fill="#c4c4c4" opacity="0.85"/><rect x="37" y="298" width="5" height="1.6" fill="#93b866" opacity="0.85"/><rect x="43" y="298" width="3" height="1.6" fill="#93b866" opacity="0.85"/><rect x="47" y="298" width="8" height="1.6" fill="#93b866" opacity="0.85"/><rect x="56" y="298" width="4" height="1.6" fill="#93b866" opacity="0.85"/><rect x="61" y="298" width="7" height="1.6" fill="#93b866" opacity="0.85"/><rect x="68" y="298" width="1" height="1.6" fill="#c4c4c4" opacity="0.85"/><rect x="26" y="300" width="11" height="1.6" fill="#93b866" opacity="0.85"/><rect x="38" y="300" width="2" height="1.6" fill="#c4c4c4" opacity="0.85"/><rect x="41" y="300" width="5" height="1.6" fill="#cc4444" opacity="0.85"/><rect x="46" y="300" width="1" height="1.6" fill="#c4c4c4" opacity="0.85"/><rect x="26" y="302" width="10" height="1.6" fill="#93b866" opacity="0.85"/><rect x="37" y="302" width="2" height="1.6" fill="#c4c4c4" opacity="0.85"/><rect x="40" y="302" width="7" height="1.6" fill="#c4c4c4" opacity="0.85"/><rect x="47" y="302" width="5" height="1.6" fill="#cc4444" opacity="0.85"/><rect x="52" y="302" width="1" height="1.6" fill="#c4c4c4" opacity="0.85"/><rect x="53" y="302" width="1" height="1.6" fill="#b48cc8" opacity="0.85"/><rect x="54" y="302" width="3" height="1.6" fill="#c4c4c4" opacity="0.85"/><rect x="16" y="304" width="2" height="1.6" fill="#5fa3d0" opacity="0.85"/><rect x="18" y="304" width="1" height="1.6" fill="#c4c4c4" opacity="0.85"/><rect x="19" y="304" width="5" height="1.6" fill="#cc4444" opacity="0.85"/><rect x="24" y="304" width="10" height="1.6" fill="#c4c4c4" opacity="0.85"/><rect x="35" y="304" width="2" height="1.6" fill="#c4c4c4" opacity="0.85"/><rect x="38" y="304" width="1" height="1.6" fill="#b48cc8" opacity="0.85"/><rect x="39" y="304" width="1" height="1.6" fill="#c4c4c4" opacity="0.85"/><rect x="41" y="304" width="1" height="1.6" fill="#c4c4c4" opacity="0.85"/><rect x="20" y="306" width="4" height="1.6" fill="#5fa3d0" opacity="0.85"/><rect x="25" y="306" width="5" height="1.6" fill="#93b866" opacity="0.85"/><rect x="31" y="306" width="2" height="1.6" fill="#93b866" opacity="0.85"/><rect x="34" y="306" width="6" height="1.6" fill="#93b866" opacity="0.85"/><rect x="41" y="306" width="1" height="1.6" fill="#93b866" opacity="0.85"/><rect x="43" y="306" width="1" height="1.6" fill="#c4c4c4" opacity="0.85"/><rect x="45" y="306" width="5" height="1.6" fill="#cc4444" opacity="0.85"/><rect x="50" y="306" width="8" height="1.6" fill="#c4c4c4" opacity="0.85"/><rect x="58" y="306" width="7" height="1.6" fill="#93b866" opacity="0.85"/><rect x="65" y="306" width="1" height="1.6" fill="#c4c4c4" opacity="0.85"/><rect x="67" y="306" width="1" height="1.6" fill="#c4c4c4" opacity="0.85"/><rect x="29" y="308" width="2" height="1.6" fill="#93b866" opacity="0.85"/><rect x="32" y="308" width="1" height="1.6" fill="#93b866" opacity="0.85"/><rect x="34" y="308" width="1" height="1.6" fill="#c4c4c4" opacity="0.85"/><rect x="36" y="308" width="5" height="1.6" fill="#cc4444" opacity="0.85"/><rect x="42" y="308" width="1" height="1.6" fill="#c4c4c4" opacity="0.85"/><rect x="44" y="308" width="5" height="1.6" fill="#cc4444" opacity="0.85"/><rect x="49" y="308" width="7" height="1.6" fill="#c4c4c4" opacity="0.85"/><rect x="16" y="310" width="1" height="1.6" fill="#c4c4c4" opacity="0.85"/><rect x="16" y="312" width="6" height="1.6" fill="#5fa3d0" opacity="0.85"/><rect x="23" y="312" width="6" height="1.6" fill="#c4c4c4" opacity="0.85"/><rect x="12" y="314" width="1" height="1.6" fill="#c4c4c4" opacity="0.85"/><rect x="12" y="318" width="5" height="1.6" fill="#cc4444" opacity="0.85"/><rect x="17" y="318" width="11" height="1.6" fill="#c4c4c4" opacity="0.85"/><rect x="29" y="318" width="1" height="1.6" fill="#c4c4c4" opacity="0.85"/><rect x="31" y="318" width="5" height="1.6" fill="#cc4444" opacity="0.85"/><rect x="36" y="318" width="1" height="1.6" fill="#c4c4c4" opacity="0.85"/><rect x="12" y="322" width="6" height="1.6" fill="#5fa3d0" opacity="0.85"/><rect x="19" y="322" width="5" height="1.6" fill="#c4c4c4" opacity="0.85"/><rect x="8" y="324" width="1" height="1.6" fill="#c4c4c4" opacity="0.85"/><rect x="8" y="328" width="3" height="1.6" fill="#5e5e5e" opacity="0.7"/><rect x="9" y="330" width="1" height="1.6" fill="#5e5e5e" opacity="0.7"/><rect x="11" y="330" width="4" height="1.6" fill="#5e5e5e" opacity="0.7"/><rect x="16" y="330" width="4" height="1.6" fill="#5e5e5e" opacity="0.7"/><rect x="21" y="330" width="11" height="1.6" fill="#5e5e5e" opacity="0.7"/><rect x="33" y="330" width="2" height="1.6" fill="#5e5e5e" opacity="0.7"/><rect x="36" y="330" width="3" height="1.6" fill="#5e5e5e" opacity="0.7"/><rect x="40" y="330" width="7" height="1.6" fill="#5e5e5e" opacity="0.7"/><rect x="48" y="330" width="10" height="1.6" fill="#5e5e5e" opacity="0.7"/><rect x="59" y="330" width="2" height="1.6" fill="#5e5e5e" opacity="0.7"/><rect x="62" y="330" width="3" height="1.6" fill="#5e5e5e" opacity="0.7"/><rect x="66" y="330" width="7" height="1.6" fill="#5e5e5e" opacity="0.7"/><rect x="9" y="332" width="1" height="1.6" fill="#5e5e5e" opacity="0.7"/><rect x="11" y="332" width="2" height="1.6" fill="#5e5e5e" opacity="0.7"/><rect x="14" y="332" width="3" height="1.6" fill="#5e5e5e" opacity="0.7"/><rect x="18" y="332" width="9" height="1.6" fill="#5e5e5e" opacity="0.7"/><rect x="28" y="332" width="4" height="1.6" fill="#5e5e5e" opacity="0.7"/><rect x="33" y="332" width="7" height="1.6" fill="#5e5e5e" opacity="0.7"/><rect x="41" y="332" width="7" height="1.6" fill="#5e5e5e" opacity="0.7"/><rect x="49" y="332" width="5" height="1.6" fill="#5e5e5e" opacity="0.7"/><rect x="55" y="332" width="8" height="1.6" fill="#5e5e5e" opacity="0.7"/><rect x="64" y="332" width="10" height="1.6" fill="#5e5e5e" opacity="0.7"/><rect x="9" y="334" width="1" height="1.6" fill="#5e5e5e" opacity="0.7"/><rect x="11" y="334" width="1" height="1.6" fill="#5e5e5e" opacity="0.7"/><rect x="13" y="334" width="4" height="1.6" fill="#5e5e5e" opacity="0.7"/><rect x="18" y="334" width="2" height="1.6" fill="#5e5e5e" opacity="0.7"/><rect x="21" y="334" width="8" height="1.6" fill="#5e5e5e" opacity="0.7"/><rect x="30" y="334" width="4" height="1.6" fill="#5e5e5e" opacity="0.7"/><rect x="35" y="334" width="4" height="1.6" fill="#5e5e5e" opacity="0.7"/><rect x="40" y="334" width="2" height="1.6" fill="#5e5e5e" opacity="0.7"/><rect x="43" y="334" width="9" height="1.6" fill="#5e5e5e" opacity="0.7"/><rect x="53" y="334" width="3" height="1.6" fill="#5e5e5e" opacity="0.7"/><rect x="57" y="334" width="4" height="1.6" fill="#5e5e5e" opacity="0.7"/><rect x="62" y="334" width="8" height="1.6" fill="#5e5e5e" opacity="0.7"/><rect x="9" y="336" width="1" height="1.6" fill="#5e5e5e" opacity="0.7"/><rect x="11" y="336" width="7" height="1.6" fill="#5e5e5e" opacity="0.7"/><rect x="19" y="336" width="3" height="1.6" fill="#5e5e5e" opacity="0.7"/><rect x="23" y="336" width="7" height="1.6" fill="#5e5e5e" opacity="0.7"/><rect x="31" y="336" width="4" height="1.6" fill="#5e5e5e" opacity="0.7"/><rect x="36" y="336" width="2" height="1.6" fill="#5e5e5e" opacity="0.7"/><rect x="39" y="336" width="3" height="1.6" fill="#5e5e5e" opacity="0.7"/><rect x="43" y="336" width="5" height="1.6" fill="#5e5e5e" opacity="0.7"/><rect x="49" y="336" width="2" height="1.6" fill="#5e5e5e" opacity="0.7"/><rect x="52" y="336" width="2" height="1.6" fill="#5e5e5e" opacity="0.7"/><rect x="55" y="336" width="2" height="1.6" fill="#5e5e5e" opacity="0.7"/><rect x="58" y="336" width="2" height="1.6" fill="#5e5e5e" opacity="0.7"/><rect x="61" y="336" width="3" height="1.6" fill="#5e5e5e" opacity="0.7"/><rect x="65" y="336" width="4" height="1.6" fill="#5e5e5e" opacity="0.7"/><rect x="70" y="336" width="2" height="1.6" fill="#5e5e5e" opacity="0.7"/><rect x="9" y="338" width="1" height="1.6" fill="#5e5e5e" opacity="0.7"/><rect x="11" y="338" width="6" height="1.6" fill="#5e5e5e" opacity="0.7"/><rect x="18" y="338" width="3" height="1.6" fill="#5e5e5e" opacity="0.7"/><rect x="22" y="338" width="8" height="1.6" fill="#5e5e5e" opacity="0.7"/><rect x="31" y="338" width="5" height="1.6" fill="#5e5e5e" opacity="0.7"/><rect x="37" y="338" width="2" height="1.6" fill="#5e5e5e" opacity="0.7"/><rect x="40" y="338" width="2" height="1.6" fill="#5e5e5e" opacity="0.7"/><rect x="43" y="338" width="5" height="1.6" fill="#5e5e5e" opacity="0.7"/><rect x="49" y="338" width="6" height="1.6" fill="#5e5e5e" opacity="0.7"/><rect x="56" y="338" width="4" height="1.6" fill="#5e5e5e" opacity="0.7"/><rect x="61" y="338" width="5" height="1.6" fill="#5e5e5e" opacity="0.7"/><rect x="67" y="338" width="2" height="1.6" fill="#5e5e5e" opacity="0.7"/><rect x="9" y="340" width="1" height="1.6" fill="#5e5e5e" opacity="0.7"/><rect x="11" y="340" width="8" height="1.6" fill="#5e5e5e" opacity="0.7"/><rect x="20" y="340" width="4" height="1.6" fill="#5e5e5e" opacity="0.7"/><rect x="25" y="340" width="12" height="1.6" fill="#5e5e5e" opacity="0.7"/><rect x="38" y="340" width="3" height="1.6" fill="#5e5e5e" opacity="0.7"/><rect x="42" y="340" width="13" height="1.6" fill="#5e5e5e" opacity="0.7"/><rect x="9" y="342" width="1" height="1.6" fill="#5e5e5e" opacity="0.7"/><rect x="9" y="344" width="1" height="1.6" fill="#5e5e5e" opacity="0.7"/><rect x="11" y="344" width="10" height="1.6" fill="#5e5e5e" opacity="0.7"/><rect x="22" y="344" width="3" height="1.6" fill="#5e5e5e" opacity="0.7"/><rect x="26" y="344" width="4" height="1.6" fill="#5e5e5e" opacity="0.7"/><rect x="31" y="344" width="4" height="1.6" fill="#5e5e5e" opacity="0.7"/><rect x="36" y="344" width="1" height="1.6" fill="#5e5e5e" opacity="0.7"/><rect x="38" y="344" width="4" height="1.6" fill="#5e5e5e" opacity="0.7"/><rect x="43" y="344" width="8" height="1.6" fill="#5e5e5e" opacity="0.7"/><rect x="52" y="344" width="1" height="1.6" fill="#5e5e5e" opacity="0.7"/><rect x="54" y="344" width="6" height="1.6" fill="#5e5e5e" opacity="0.7"/><rect x="9" y="346" width="1" height="1.6" fill="#5e5e5e" opacity="0.7"/><rect x="9" y="348" width="1" height="1.6" fill="#5e5e5e" opacity="0.7"/><rect x="11" y="348" width="4" height="1.6" fill="#5e5e5e" opacity="0.7"/><rect x="16" y="348" width="4" height="1.6" fill="#5e5e5e" opacity="0.7"/><rect x="21" y="348" width="8" height="1.6" fill="#5e5e5e" opacity="0.7"/><rect x="30" y="348" width="7" height="1.6" fill="#5e5e5e" opacity="0.7"/><rect x="9" y="350" width="1" height="1.6" fill="#5e5e5e" opacity="0.7"/><rect x="11" y="350" width="4" height="1.6" fill="#5e5e5e" opacity="0.7"/><rect x="16" y="350" width="4" height="1.6" fill="#5e5e5e" opacity="0.7"/><rect x="21" y="350" width="5" height="1.6" fill="#5e5e5e" opacity="0.7"/><rect x="28" y="350" width="1" height="1.6" fill="#5e5e5e" opacity="0.7"/><rect x="30" y="350" width="19" height="1.6" fill="#5e5e5e" opacity="0.7"/><rect x="9" y="352" width="1" height="1.6" fill="#5e5e5e" opacity="0.7"/><rect x="11" y="352" width="7" height="1.6" fill="#5e5e5e" opacity="0.7"/><rect x="19" y="352" width="6" height="1.6" fill="#5e5e5e" opacity="0.7"/><rect x="9" y="354" width="1" height="1.6" fill="#5e5e5e" opacity="0.7"/><rect x="11" y="354" width="7" height="1.6" fill="#5e5e5e" opacity="0.7"/><rect x="19" y="354" width="6" height="1.6" fill="#5e5e5e" opacity="0.7"/><rect x="9" y="356" width="2" height="1.6" fill="#5e5e5e" opacity="0.7"/><rect x="8" y="358" width="8" height="1.6" fill="#5fa3d0" opacity="0.85"/><rect x="17" y="358" width="5" height="1.6" fill="#c4c4c4" opacity="0.85"/><rect x="22" y="358" width="8" height="1.6" fill="#cc4444" opacity="0.85"/><rect x="30" y="358" width="1" height="1.6" fill="#c4c4c4" opacity="0.85"/><rect x="31" y="358" width="2" height="1.6" fill="#93b866" opacity="0.85"/><rect x="33" y="358" width="1" height="1.6" fill="#c4c4c4" opacity="0.85"/><rect x="35" y="358" width="1" height="1.6" fill="#c4c4c4" opacity="0.85"/><rect x="12" y="360" width="5" height="1.6" fill="#cc4444" opacity="0.85"/><rect x="17" y="360" width="7" height="1.6" fill="#c4c4c4" opacity="0.85"/><rect x="25" y="360" width="1" height="1.6" fill="#c4c4c4" opacity="0.85"/><rect x="27" y="360" width="5" height="1.6" fill="#c4c4c4" opacity="0.85"/><rect x="33" y="360" width="1" height="1.6" fill="#5e5e5e" opacity="0.7"/><rect x="35" y="360" width="2" height="1.6" fill="#5e5e5e" opacity="0.7"/><rect x="38" y="360" width="5" height="1.6" fill="#5e5e5e" opacity="0.7"/><rect x="44" y="360" width="9" height="1.6" fill="#5e5e5e" opacity="0.7"/><rect x="12" y="364" width="2" height="1.6" fill="#5fa3d0" opacity="0.85"/><rect x="14" y="364" width="2" height="1.6" fill="#c4c4c4" opacity="0.85"/><rect x="16" y="364" width="5" height="1.6" fill="#cc4444" opacity="0.85"/><rect x="21" y="364" width="14" height="1.6" fill="#c4c4c4" opacity="0.85"/><rect x="36" y="364" width="1" height="1.6" fill="#c4c4c4" opacity="0.85"/><rect x="16" y="366" width="5" height="1.6" fill="#cc4444" opacity="0.85"/><rect x="21" y="366" width="7" height="1.6" fill="#c4c4c4" opacity="0.85"/><rect x="29" y="366" width="1" height="1.6" fill="#c4c4c4" opacity="0.85"/><rect x="31" y="366" width="6" height="1.6" fill="#c4c4c4" opacity="0.85"/><rect x="24" y="368" width="7" height="1.6" fill="#93b866" opacity="0.85"/><rect x="32" y="368" width="2" height="1.6" fill="#c4c4c4" opacity="0.85"/><rect x="35" y="368" width="7" height="1.6" fill="#93b866" opacity="0.85"/><rect x="43" y="368" width="6" height="1.6" fill="#93b866" opacity="0.85"/><rect x="50" y="368" width="7" height="1.6" fill="#93b866" opacity="0.85"/><rect x="58" y="368" width="5" height="1.6" fill="#93b866" opacity="0.85"/><rect x="64" y="368" width="10" height="1.6" fill="#93b866" opacity="0.85"/><rect x="74" y="368" width="2" height="1.6" fill="#c4c4c4" opacity="0.85"/><rect x="16" y="370" width="6" height="1.6" fill="#5fa3d0" opacity="0.85"/><rect x="23" y="370" width="6" height="1.6" fill="#c4c4c4" opacity="0.85"/><rect x="12" y="372" width="1" height="1.6" fill="#c4c4c4" opacity="0.85"/><rect x="12" y="376" width="6" height="1.6" fill="#cc4444" opacity="0.85"/><rect x="19" y="376" width="1" height="1.6" fill="#c4c4c4" opacity="0.85"/><rect x="21" y="376" width="2" height="1.6" fill="#93b866" opacity="0.85"/><rect x="23" y="376" width="1" height="1.6" fill="#c4c4c4" opacity="0.85"/><rect x="12" y="378" width="2" height="1.6" fill="#5fa3d0" opacity="0.85"/><rect x="14" y="378" width="8" height="1.6" fill="#c4c4c4" opacity="0.85"/><rect x="22" y="378" width="8" height="1.6" fill="#cc4444" opacity="0.85"/><rect x="30" y="378" width="2" height="1.6" fill="#c4c4c4" opacity="0.85"/><rect x="33" y="378" width="1" height="1.6" fill="#c4c4c4" opacity="0.85"/><rect x="16" y="380" width="6" height="1.6" fill="#cc4444" opacity="0.85"/><rect x="23" y="380" width="1" height="1.6" fill="#c4c4c4" opacity="0.85"/><rect x="25" y="380" width="1" height="1.6" fill="#93b866" opacity="0.85"/><rect x="27" y="380" width="1" height="1.6" fill="#93b866" opacity="0.85"/><rect x="29" y="380" width="1" height="1.6" fill="#c4c4c4" opacity="0.85"/><rect x="31" y="380" width="8" height="1.6" fill="#cc4444" opacity="0.85"/><rect x="39" y="380" width="1" height="1.6" fill="#c4c4c4" opacity="0.85"/><rect x="12" y="382" width="1" height="1.6" fill="#c4c4c4" opacity="0.85"/><rect x="12" y="386" width="6" height="1.6" fill="#c4c4c4" opacity="0.85"/><rect x="18" y="386" width="5" height="1.6" fill="#cc4444" opacity="0.85"/><rect x="23" y="386" width="12" height="1.6" fill="#c4c4c4" opacity="0.85"/><rect x="35" y="386" width="6" height="1.6" fill="#93b866" opacity="0.85"/><rect x="42" y="386" width="1" height="1.6" fill="#c4c4c4" opacity="0.85"/><rect x="44" y="386" width="6" height="1.6" fill="#cc4444" opacity="0.85"/><rect x="51" y="386" width="1" height="1.6" fill="#c4c4c4" opacity="0.85"/><rect x="53" y="386" width="5" height="1.6" fill="#cc4444" opacity="0.85"/><rect x="58" y="386" width="8" height="1.6" fill="#c4c4c4" opacity="0.85"/><rect x="12" y="390" width="5" height="1.6" fill="#cc4444" opacity="0.85"/><rect x="18" y="390" width="1" height="1.6" fill="#c4c4c4" opacity="0.85"/><rect x="20" y="390" width="5" height="1.6" fill="#cc4444" opacity="0.85"/><rect x="25" y="390" width="14" height="1.6" fill="#c4c4c4" opacity="0.85"/><rect x="12" y="392" width="5" height="1.6" fill="#cc4444" opacity="0.85"/><rect x="18" y="392" width="1" height="1.6" fill="#c4c4c4" opacity="0.85"/><rect x="20" y="392" width="7" height="1.6" fill="#c4c4c4" opacity="0.85"/><rect x="27" y="392" width="5" height="1.6" fill="#cc4444" opacity="0.85"/><rect x="32" y="392" width="1" height="1.6" fill="#c4c4c4" opacity="0.85"/><rect x="33" y="392" width="1" height="1.6" fill="#b48cc8" opacity="0.85"/><rect x="34" y="392" width="1" height="1.6" fill="#c4c4c4" opacity="0.85"/><rect x="35" y="392" width="1" height="1.6" fill="#b48cc8" opacity="0.85"/><rect x="36" y="392" width="2" height="1.6" fill="#c4c4c4" opacity="0.85"/><rect x="12" y="396" width="2" height="1.6" fill="#5fa3d0" opacity="0.85"/><rect x="14" y="396" width="1" height="1.6" fill="#c4c4c4" opacity="0.85"/><rect x="15" y="396" width="5" height="1.6" fill="#cc4444" opacity="0.85"/><rect x="20" y="396" width="10" height="1.6" fill="#c4c4c4" opacity="0.85"/><rect x="31" y="396" width="2" height="1.6" fill="#c4c4c4" opacity="0.85"/><rect x="34" y="396" width="1" height="1.6" fill="#b48cc8" opacity="0.85"/><rect x="35" y="396" width="1" height="1.6" fill="#c4c4c4" opacity="0.85"/><rect x="37" y="396" width="1" height="1.6" fill="#c4c4c4" opacity="0.85"/><rect x="16" y="398" width="4" height="1.6" fill="#5fa3d0" opacity="0.85"/><rect x="21" y="398" width="5" height="1.6" fill="#93b866" opacity="0.85"/><rect x="27" y="398" width="2" height="1.6" fill="#93b866" opacity="0.85"/><rect x="30" y="398" width="4" height="1.6" fill="#93b866" opacity="0.85"/><rect x="35" y="398" width="8" height="1.6" fill="#93b866" opacity="0.85"/><rect x="44" y="398" width="1" height="1.6" fill="#c4c4c4" opacity="0.85"/><rect x="46" y="398" width="5" height="1.6" fill="#cc4444" opacity="0.85"/><rect x="51" y="398" width="6" height="1.6" fill="#c4c4c4" opacity="0.85"/><rect x="58" y="398" width="1" height="1.6" fill="#c4c4c4" opacity="0.85"/><rect x="60" y="398" width="5" height="1.6" fill="#cc4444" opacity="0.85"/><rect x="65" y="398" width="1" height="1.6" fill="#c4c4c4" opacity="0.85"/><rect x="12" y="400" width="1" height="1.6" fill="#c4c4c4" opacity="0.85"/><rect x="12" y="404" width="2" height="1.6" fill="#5fa3d0" opacity="0.85"/><rect x="14" y="404" width="1" height="1.6" fill="#c4c4c4" opacity="0.85"/><rect x="15" y="404" width="5" height="1.6" fill="#cc4444" opacity="0.85"/><rect x="21" y="404" width="2" height="1.6" fill="#c4c4c4" opacity="0.85"/><rect x="24" y="404" width="3" height="1.6" fill="#b48cc8" opacity="0.85"/><rect x="28" y="404" width="2" height="1.6" fill="#c4c4c4" opacity="0.85"/><rect x="31" y="404" width="5" height="1.6" fill="#cc4444" opacity="0.85"/><rect x="37" y="404" width="2" height="1.6" fill="#c4c4c4" opacity="0.85"/><rect x="40" y="404" width="3" height="1.6" fill="#b48cc8" opacity="0.85"/><rect x="43" y="404" width="1" height="1.6" fill="#c4c4c4" opacity="0.85"/><rect x="45" y="404" width="1" height="1.6" fill="#c4c4c4" opacity="0.85"/><rect x="16" y="406" width="5" height="1.6" fill="#cc4444" opacity="0.85"/><rect x="21" y="406" width="7" height="1.6" fill="#c4c4c4" opacity="0.85"/><rect x="29" y="406" width="1" height="1.6" fill="#c4c4c4" opacity="0.85"/><rect x="20" y="408" width="6" height="1.6" fill="#c4c4c4" opacity="0.85"/><rect x="26" y="408" width="7" height="1.6" fill="#93b866" opacity="0.85"/><rect x="34" y="408" width="2" height="1.6" fill="#c4c4c4" opacity="0.85"/><rect x="37" y="408" width="5" height="1.6" fill="#93b866" opacity="0.85"/><rect x="43" y="408" width="3" height="1.6" fill="#93b866" opacity="0.85"/><rect x="47" y="408" width="8" height="1.6" fill="#93b866" opacity="0.85"/><rect x="56" y="408" width="4" height="1.6" fill="#93b866" opacity="0.85"/><rect x="61" y="408" width="7" height="1.6" fill="#93b866" opacity="0.85"/><rect x="68" y="408" width="1" height="1.6" fill="#c4c4c4" opacity="0.85"/><rect x="26" y="410" width="11" height="1.6" fill="#93b866" opacity="0.85"/><rect x="38" y="410" width="2" height="1.6" fill="#c4c4c4" opacity="0.85"/><rect x="41" y="410" width="5" height="1.6" fill="#cc4444" opacity="0.85"/><rect x="46" y="410" width="1" height="1.6" fill="#c4c4c4" opacity="0.85"/><rect x="26" y="412" width="10" height="1.6" fill="#93b866" opacity="0.85"/><rect x="37" y="412" width="2" height="1.6" fill="#c4c4c4" opacity="0.85"/><rect x="40" y="412" width="7" height="1.6" fill="#c4c4c4" opacity="0.85"/><rect x="47" y="412" width="5" height="1.6" fill="#cc4444" opacity="0.85"/><rect x="52" y="412" width="1" height="1.6" fill="#c4c4c4" opacity="0.85"/><rect x="53" y="412" width="1" height="1.6" fill="#b48cc8" opacity="0.85"/><rect x="54" y="412" width="3" height="1.6" fill="#c4c4c4" opacity="0.85"/><rect x="16" y="414" width="2" height="1.6" fill="#5fa3d0" opacity="0.85"/><rect x="18" y="414" width="1" height="1.6" fill="#c4c4c4" opacity="0.85"/><rect x="19" y="414" width="5" height="1.6" fill="#cc4444" opacity="0.85"/><rect x="24" y="414" width="10" height="1.6" fill="#c4c4c4" opacity="0.85"/><rect x="35" y="414" width="2" height="1.6" fill="#c4c4c4" opacity="0.85"/><rect x="38" y="414" width="1" height="1.6" fill="#b48cc8" opacity="0.85"/><rect x="39" y="414" width="1" height="1.6" fill="#c4c4c4" opacity="0.85"/><rect x="41" y="414" width="1" height="1.6" fill="#c4c4c4" opacity="0.85"/><rect x="20" y="416" width="4" height="1.6" fill="#5fa3d0" opacity="0.85"/><rect x="25" y="416" width="5" height="1.6" fill="#93b866" opacity="0.85"/><rect x="31" y="416" width="2" height="1.6" fill="#93b866" opacity="0.85"/><rect x="34" y="416" width="6" height="1.6" fill="#93b866" opacity="0.85"/><rect x="41" y="416" width="1" height="1.6" fill="#93b866" opacity="0.85"/><rect x="43" y="416" width="1" height="1.6" fill="#c4c4c4" opacity="0.85"/><rect x="45" y="416" width="5" height="1.6" fill="#cc4444" opacity="0.85"/><rect x="50" y="416" width="8" height="1.6" fill="#c4c4c4" opacity="0.85"/><rect x="58" y="416" width="7" height="1.6" fill="#93b866" opacity="0.85"/><rect x="65" y="416" width="1" height="1.6" fill="#c4c4c4" opacity="0.85"/><rect x="67" y="416" width="1" height="1.6" fill="#c4c4c4" opacity="0.85"/><rect x="29" y="418" width="2" height="1.6" fill="#93b866" opacity="0.85"/><rect x="32" y="418" width="1" height="1.6" fill="#93b866" opacity="0.85"/><rect x="34" y="418" width="1" height="1.6" fill="#c4c4c4" opacity="0.85"/><rect x="36" y="418" width="5" height="1.6" fill="#cc4444" opacity="0.85"/><rect x="42" y="418" width="1" height="1.6" fill="#c4c4c4" opacity="0.85"/><rect x="44" y="418" width="5" height="1.6" fill="#cc4444" opacity="0.85"/><rect x="49" y="418" width="7" height="1.6" fill="#c4c4c4" opacity="0.85"/><rect x="16" y="420" width="1" height="1.6" fill="#c4c4c4" opacity="0.85"/><rect x="16" y="422" width="6" height="1.6" fill="#5fa3d0" opacity="0.85"/><rect x="23" y="422" width="6" height="1.6" fill="#c4c4c4" opacity="0.85"/><rect x="12" y="424" width="1" height="1.6" fill="#c4c4c4" opacity="0.85"/><rect x="12" y="428" width="6" height="1.6" fill="#5fa3d0" opacity="0.85"/><rect x="19" y="428" width="5" height="1.6" fill="#cc4444" opacity="0.85"/><rect x="24" y="428" width="1" height="1.6" fill="#c4c4c4" opacity="0.85"/><rect x="8" y="430" width="1" height="1.6" fill="#c4c4c4" opacity="0.85"/><rect x="8" y="434" width="3" height="1.6" fill="#5e5e5e" opacity="0.7"/><rect x="9" y="436" width="1" height="1.6" fill="#5e5e5e" opacity="0.7"/><rect x="11" y="436" width="6" height="1.6" fill="#5e5e5e" opacity="0.7"/><rect x="18" y="436" width="1" height="1.6" fill="#5e5e5e" opacity="0.7"/><rect x="20" y="436" width="4" height="1.6" fill="#5e5e5e" opacity="0.7"/><rect x="25" y="436" width="11" height="1.6" fill="#5e5e5e" opacity="0.7"/><rect x="37" y="436" width="4" height="1.6" fill="#5e5e5e" opacity="0.7"/><rect x="42" y="436" width="3" height="1.6" fill="#5e5e5e" opacity="0.7"/><rect x="46" y="436" width="5" height="1.6" fill="#5e5e5e" opacity="0.7"/><rect x="52" y="436" width="7" height="1.6" fill="#5e5e5e" opacity="0.7"/><rect x="60" y="436" width="9" height="1.6" fill="#5e5e5e" opacity="0.7"/><rect x="70" y="436" width="2" height="1.6" fill="#5e5e5e" opacity="0.7"/><rect x="9" y="438" width="1" height="1.6" fill="#5e5e5e" opacity="0.7"/><rect x="11" y="438" width="6" height="1.6" fill="#5e5e5e" opacity="0.7"/><rect x="18" y="438" width="7" height="1.6" fill="#5e5e5e" opacity="0.7"/><rect x="26" y="438" width="4" height="1.6" fill="#5e5e5e" opacity="0.7"/><rect x="31" y="438" width="2" height="1.6" fill="#5e5e5e" opacity="0.7"/><rect x="34" y="438" width="10" height="1.6" fill="#5e5e5e" opacity="0.7"/><rect x="45" y="438" width="2" height="1.6" fill="#5e5e5e" opacity="0.7"/><rect x="48" y="438" width="5" height="1.6" fill="#5e5e5e" opacity="0.7"/><rect x="54" y="438" width="10" height="1.6" fill="#5e5e5e" opacity="0.7"/><rect x="65" y="438" width="2" height="1.6" fill="#5e5e5e" opacity="0.7"/><rect x="68" y="438" width="4" height="1.6" fill="#5e5e5e" opacity="0.7"/><rect x="9" y="440" width="1" height="1.6" fill="#5e5e5e" opacity="0.7"/><rect x="11" y="440" width="3" height="1.6" fill="#5e5e5e" opacity="0.7"/><rect x="15" y="440" width="4" height="1.6" fill="#5e5e5e" opacity="0.7"/><rect x="20" y="440" width="11" height="1.6" fill="#5e5e5e" opacity="0.7"/><rect x="32" y="440" width="2" height="1.6" fill="#5e5e5e" opacity="0.7"/><rect x="35" y="440" width="7" height="1.6" fill="#5e5e5e" opacity="0.7"/><rect x="43" y="440" width="3" height="1.6" fill="#5e5e5e" opacity="0.7"/><rect x="47" y="440" width="4" height="1.6" fill="#5e5e5e" opacity="0.7"/><rect x="52" y="440" width="3" height="1.6" fill="#5e5e5e" opacity="0.7"/><rect x="56" y="440" width="2" height="1.6" fill="#5e5e5e" opacity="0.7"/><rect x="59" y="440" width="4" height="1.6" fill="#5e5e5e" opacity="0.7"/><rect x="64" y="440" width="9" height="1.6" fill="#5e5e5e" opacity="0.7"/><rect x="9" y="442" width="1" height="1.6" fill="#5e5e5e" opacity="0.7"/><rect x="11" y="442" width="8" height="1.6" fill="#5e5e5e" opacity="0.7"/><rect x="20" y="442" width="3" height="1.6" fill="#5e5e5e" opacity="0.7"/><rect x="24" y="442" width="2" height="1.6" fill="#5e5e5e" opacity="0.7"/><rect x="27" y="442" width="6" height="1.6" fill="#5e5e5e" opacity="0.7"/><rect x="34" y="442" width="8" height="1.6" fill="#5e5e5e" opacity="0.7"/><rect x="43" y="442" width="2" height="1.6" fill="#5e5e5e" opacity="0.7"/><rect x="46" y="442" width="1" height="1.6" fill="#5e5e5e" opacity="0.7"/><rect x="48" y="442" width="4" height="1.6" fill="#5e5e5e" opacity="0.7"/><rect x="53" y="442" width="8" height="1.6" fill="#5e5e5e" opacity="0.7"/><rect x="9" y="444" width="1" height="1.6" fill="#5e5e5e" opacity="0.7"/><rect x="9" y="446" width="1" height="1.6" fill="#5e5e5e" opacity="0.7"/><rect x="11" y="446" width="10" height="1.6" fill="#5e5e5e" opacity="0.7"/><rect x="22" y="446" width="3" height="1.6" fill="#5e5e5e" opacity="0.7"/><rect x="26" y="446" width="4" height="1.6" fill="#5e5e5e" opacity="0.7"/><rect x="31" y="446" width="4" height="1.6" fill="#5e5e5e" opacity="0.7"/><rect x="36" y="446" width="4" height="1.6" fill="#5e5e5e" opacity="0.7"/><rect x="41" y="446" width="19" height="1.6" fill="#5e5e5e" opacity="0.7"/><rect x="61" y="446" width="6" height="1.6" fill="#5e5e5e" opacity="0.7"/><rect x="9" y="448" width="1" height="1.6" fill="#5e5e5e" opacity="0.7"/><rect x="9" y="450" width="1" height="1.6" fill="#5e5e5e" opacity="0.7"/><rect x="11" y="450" width="4" height="1.6" fill="#5e5e5e" opacity="0.7"/><rect x="16" y="450" width="4" height="1.6" fill="#5e5e5e" opacity="0.7"/><rect x="21" y="450" width="8" height="1.6" fill="#5e5e5e" opacity="0.7"/><rect x="30" y="450" width="3" height="1.6" fill="#5e5e5e" opacity="0.7"/><rect x="9" y="452" width="1" height="1.6" fill="#5e5e5e" opacity="0.7"/><rect x="11" y="452" width="4" height="1.6" fill="#5e5e5e" opacity="0.7"/><rect x="16" y="452" width="4" height="1.6" fill="#5e5e5e" opacity="0.7"/><rect x="21" y="452" width="8" height="1.6" fill="#5e5e5e" opacity="0.7"/><rect x="30" y="452" width="11" height="1.6" fill="#5e5e5e" opacity="0.7"/><rect x="9" y="454" width="1" height="1.6" fill="#5e5e5e" opacity="0.7"/><rect x="11" y="454" width="4" height="1.6" fill="#5e5e5e" opacity="0.7"/><rect x="16" y="454" width="4" height="1.6" fill="#5e5e5e" opacity="0.7"/><rect x="21" y="454" width="8" height="1.6" fill="#5e5e5e" opacity="0.7"/><rect x="30" y="454" width="11" height="1.6" fill="#5e5e5e" opacity="0.7"/><rect x="9" y="456" width="1" height="1.6" fill="#5e5e5e" opacity="0.7"/><rect x="11" y="456" width="7" height="1.6" fill="#5e5e5e" opacity="0.7"/><rect x="19" y="456" width="6" height="1.6" fill="#5e5e5e" opacity="0.7"/><rect x="9" y="458" width="1" height="1.6" fill="#5e5e5e" opacity="0.7"/><rect x="11" y="458" width="7" height="1.6" fill="#5e5e5e" opacity="0.7"/><rect x="19" y="458" width="4" height="1.6" fill="#5e5e5e" opacity="0.7"/><rect x="9" y="460" width="2" height="1.6" fill="#5e5e5e" opacity="0.7"/><rect x="8" y="462" width="8" height="1.6" fill="#5fa3d0" opacity="0.85"/><rect x="17" y="462" width="5" height="1.6" fill="#c4c4c4" opacity="0.85"/><rect x="22" y="462" width="5" height="1.6" fill="#cc4444" opacity="0.85"/><rect x="27" y="462" width="1" height="1.6" fill="#c4c4c4" opacity="0.85"/><rect x="29" y="462" width="1" height="1.6" fill="#c4c4c4" opacity="0.85"/><rect x="12" y="464" width="5" height="1.6" fill="#cc4444" opacity="0.85"/><rect x="17" y="464" width="7" height="1.6" fill="#c4c4c4" opacity="0.85"/><rect x="25" y="464" width="1" height="1.6" fill="#c4c4c4" opacity="0.85"/><rect x="27" y="464" width="5" height="1.6" fill="#c4c4c4" opacity="0.85"/><rect x="33" y="464" width="1" height="1.6" fill="#5e5e5e" opacity="0.7"/><rect x="35" y="464" width="2" height="1.6" fill="#5e5e5e" opacity="0.7"/><rect x="38" y="464" width="2" height="1.6" fill="#5e5e5e" opacity="0.7"/><rect x="41" y="464" width="9" height="1.6" fill="#5e5e5e" opacity="0.7"/><rect x="51" y="464" width="2" height="1.6" fill="#5e5e5e" opacity="0.7"/><rect x="54" y="464" width="6" height="1.6" fill="#5e5e5e" opacity="0.7"/><rect x="12" y="468" width="2" height="1.6" fill="#5fa3d0" opacity="0.85"/><rect x="14" y="468" width="2" height="1.6" fill="#c4c4c4" opacity="0.85"/><rect x="16" y="468" width="5" height="1.6" fill="#cc4444" opacity="0.85"/><rect x="21" y="468" width="14" height="1.6" fill="#c4c4c4" opacity="0.85"/><rect x="36" y="468" width="1" height="1.6" fill="#c4c4c4" opacity="0.85"/><rect x="16" y="470" width="5" height="1.6" fill="#cc4444" opacity="0.85"/><rect x="21" y="470" width="7" height="1.6" fill="#c4c4c4" opacity="0.85"/><rect x="29" y="470" width="1" height="1.6" fill="#c4c4c4" opacity="0.85"/><rect x="31" y="470" width="6" height="1.6" fill="#c4c4c4" opacity="0.85"/><rect x="24" y="472" width="7" height="1.6" fill="#93b866" opacity="0.85"/><rect x="32" y="472" width="2" height="1.6" fill="#c4c4c4" opacity="0.85"/><rect x="35" y="472" width="7" height="1.6" fill="#93b866" opacity="0.85"/><rect x="43" y="472" width="6" height="1.6" fill="#93b866" opacity="0.85"/><rect x="50" y="472" width="7" height="1.6" fill="#93b866" opacity="0.85"/><rect x="58" y="472" width="5" height="1.6" fill="#93b866" opacity="0.85"/><rect x="64" y="472" width="10" height="1.6" fill="#93b866" opacity="0.85"/><rect x="74" y="472" width="2" height="1.6" fill="#c4c4c4" opacity="0.85"/><rect x="16" y="474" width="6" height="1.6" fill="#5fa3d0" opacity="0.85"/><rect x="23" y="474" width="6" height="1.6" fill="#c4c4c4" opacity="0.85"/><rect x="12" y="476" width="1" height="1.6" fill="#c4c4c4" opacity="0.85"/><rect x="12" y="480" width="6" height="1.6" fill="#c4c4c4" opacity="0.85"/><rect x="18" y="480" width="5" height="1.6" fill="#cc4444" opacity="0.85"/><rect x="23" y="480" width="12" height="1.6" fill="#c4c4c4" opacity="0.85"/><rect x="35" y="480" width="5" height="1.6" fill="#93b866" opacity="0.85"/><rect x="41" y="480" width="7" height="1.6" fill="#93b866" opacity="0.85"/><rect x="49" y="480" width="1" height="1.6" fill="#c4c4c4" opacity="0.85"/><rect x="51" y="480" width="5" height="1.6" fill="#cc4444" opacity="0.85"/><rect x="57" y="480" width="1" height="1.6" fill="#c4c4c4" opacity="0.85"/><rect x="59" y="480" width="3" height="1.6" fill="#93b866" opacity="0.85"/><rect x="63" y="480" width="1" height="1.6" fill="#c4c4c4" opacity="0.85"/><rect x="65" y="480" width="5" height="1.6" fill="#cc4444" opacity="0.85"/><rect x="70" y="480" width="6" height="1.6" fill="#c4c4c4" opacity="0.85"/><rect x="12" y="484" width="5" height="1.6" fill="#cc4444" opacity="0.85"/><rect x="18" y="484" width="1" height="1.6" fill="#c4c4c4" opacity="0.85"/><rect x="20" y="484" width="5" height="1.6" fill="#cc4444" opacity="0.85"/><rect x="25" y="484" width="14" height="1.6" fill="#c4c4c4" opacity="0.85"/><rect x="12" y="486" width="5" height="1.6" fill="#cc4444" opacity="0.85"/><rect x="18" y="486" width="1" height="1.6" fill="#c4c4c4" opacity="0.85"/><rect x="20" y="486" width="7" height="1.6" fill="#c4c4c4" opacity="0.85"/><rect x="27" y="486" width="5" height="1.6" fill="#cc4444" opacity="0.85"/><rect x="32" y="486" width="1" height="1.6" fill="#c4c4c4" opacity="0.85"/><rect x="33" y="486" width="1" height="1.6" fill="#b48cc8" opacity="0.85"/><rect x="34" y="486" width="1" height="1.6" fill="#c4c4c4" opacity="0.85"/><rect x="35" y="486" width="1" height="1.6" fill="#b48cc8" opacity="0.85"/><rect x="36" y="486" width="2" height="1.6" fill="#c4c4c4" opacity="0.85"/><rect x="12" y="490" width="2" height="1.6" fill="#5fa3d0" opacity="0.85"/><rect x="14" y="490" width="1" height="1.6" fill="#c4c4c4" opacity="0.85"/><rect x="15" y="490" width="5" height="1.6" fill="#cc4444" opacity="0.85"/><rect x="20" y="490" width="10" height="1.6" fill="#c4c4c4" opacity="0.85"/><rect x="31" y="490" width="2" height="1.6" fill="#c4c4c4" opacity="0.85"/><rect x="34" y="490" width="1" height="1.6" fill="#b48cc8" opacity="0.85"/><rect x="35" y="490" width="1" height="1.6" fill="#c4c4c4" opacity="0.85"/><rect x="37" y="490" width="1" height="1.6" fill="#c4c4c4" opacity="0.85"/><rect x="16" y="492" width="4" height="1.6" fill="#5fa3d0" opacity="0.85"/><rect x="21" y="492" width="5" height="1.6" fill="#93b866" opacity="0.85"/><rect x="27" y="492" width="2" height="1.6" fill="#93b866" opacity="0.85"/><rect x="30" y="492" width="4" height="1.6" fill="#93b866" opacity="0.85"/><rect x="35" y="492" width="8" height="1.6" fill="#93b866" opacity="0.85"/><rect x="44" y="492" width="1" height="1.6" fill="#c4c4c4" opacity="0.85"/><rect x="46" y="492" width="5" height="1.6" fill="#cc4444" opacity="0.85"/><rect x="51" y="492" width="6" height="1.6" fill="#c4c4c4" opacity="0.85"/><rect x="58" y="492" width="1" height="1.6" fill="#c4c4c4" opacity="0.85"/><rect x="60" y="492" width="5" height="1.6" fill="#cc4444" opacity="0.85"/><rect x="65" y="492" width="1" height="1.6" fill="#c4c4c4" opacity="0.85"/><rect x="12" y="494" width="1" height="1.6" fill="#c4c4c4" opacity="0.85"/><rect x="12" y="498" width="2" height="1.6" fill="#5fa3d0" opacity="0.85"/><rect x="14" y="498" width="1" height="1.6" fill="#c4c4c4" opacity="0.85"/><rect x="15" y="498" width="5" height="1.6" fill="#cc4444" opacity="0.85"/><rect x="21" y="498" width="2" height="1.6" fill="#c4c4c4" opacity="0.85"/><rect x="24" y="498" width="3" height="1.6" fill="#b48cc8" opacity="0.85"/><rect x="27" y="498" width="1" height="1.6" fill="#c4c4c4" opacity="0.85"/><rect x="29" y="498" width="1" height="1.6" fill="#c4c4c4" opacity="0.85"/><rect x="16" y="500" width="5" height="1.6" fill="#cc4444" opacity="0.85"/><rect x="21" y="500" width="7" height="1.6" fill="#c4c4c4" opacity="0.85"/><rect x="29" y="500" width="1" height="1.6" fill="#c4c4c4" opacity="0.85"/><rect x="20" y="502" width="6" height="1.6" fill="#c4c4c4" opacity="0.85"/><rect x="26" y="502" width="7" height="1.6" fill="#93b866" opacity="0.85"/><rect x="34" y="502" width="2" height="1.6" fill="#c4c4c4" opacity="0.85"/><rect x="37" y="502" width="5" height="1.6" fill="#93b866" opacity="0.85"/><rect x="43" y="502" width="3" height="1.6" fill="#93b866" opacity="0.85"/><rect x="47" y="502" width="8" height="1.6" fill="#93b866" opacity="0.85"/><rect x="56" y="502" width="4" height="1.6" fill="#93b866" opacity="0.85"/><rect x="61" y="502" width="7" height="1.6" fill="#93b866" opacity="0.85"/><rect x="68" y="502" width="1" height="1.6" fill="#c4c4c4" opacity="0.85"/><rect x="26" y="504" width="11" height="1.6" fill="#93b866" opacity="0.85"/><rect x="38" y="504" width="2" height="1.6" fill="#c4c4c4" opacity="0.85"/><rect x="41" y="504" width="5" height="1.6" fill="#cc4444" opacity="0.85"/><rect x="46" y="504" width="1" height="1.6" fill="#c4c4c4" opacity="0.85"/><rect x="26" y="506" width="10" height="1.6" fill="#93b866" opacity="0.85"/><rect x="37" y="506" width="2" height="1.6" fill="#c4c4c4" opacity="0.85"/><rect x="40" y="506" width="7" height="1.6" fill="#c4c4c4" opacity="0.85"/><rect x="47" y="506" width="5" height="1.6" fill="#cc4444" opacity="0.85"/><rect x="52" y="506" width="1" height="1.6" fill="#c4c4c4" opacity="0.85"/><rect x="53" y="506" width="1" height="1.6" fill="#b48cc8" opacity="0.85"/><rect x="54" y="506" width="3" height="1.6" fill="#c4c4c4" opacity="0.85"/><rect x="16" y="508" width="2" height="1.6" fill="#5fa3d0" opacity="0.85"/><rect x="18" y="508" width="1" height="1.6" fill="#c4c4c4" opacity="0.85"/><rect x="19" y="508" width="5" height="1.6" fill="#cc4444" opacity="0.85"/><rect x="24" y="508" width="10" height="1.6" fill="#c4c4c4" opacity="0.85"/><rect x="35" y="508" width="2" height="1.6" fill="#c4c4c4" opacity="0.85"/><rect x="38" y="508" width="1" height="1.6" fill="#b48cc8" opacity="0.85"/><rect x="39" y="508" width="1" height="1.6" fill="#c4c4c4" opacity="0.85"/><rect x="41" y="508" width="1" height="1.6" fill="#c4c4c4" opacity="0.85"/><rect x="20" y="510" width="4" height="1.6" fill="#5fa3d0" opacity="0.85"/><rect x="25" y="510" width="5" height="1.6" fill="#93b866" opacity="0.85"/><rect x="31" y="510" width="2" height="1.6" fill="#93b866" opacity="0.85"/><rect x="34" y="510" width="6" height="1.6" fill="#93b866" opacity="0.85"/><rect x="41" y="510" width="1" height="1.6" fill="#93b866" opacity="0.85"/><rect x="43" y="510" width="1" height="1.6" fill="#c4c4c4" opacity="0.85"/><rect x="45" y="510" width="5" height="1.6" fill="#cc4444" opacity="0.85"/><rect x="50" y="510" width="8" height="1.6" fill="#c4c4c4" opacity="0.85"/><rect x="58" y="510" width="7" height="1.6" fill="#93b866" opacity="0.85"/><rect x="65" y="510" width="1" height="1.6" fill="#c4c4c4" opacity="0.85"/><rect x="67" y="510" width="1" height="1.6" fill="#c4c4c4" opacity="0.85"/><rect x="29" y="512" width="2" height="1.6" fill="#93b866" opacity="0.85"/><rect x="32" y="512" width="1" height="1.6" fill="#93b866" opacity="0.85"/><rect x="34" y="512" width="1" height="1.6" fill="#c4c4c4" opacity="0.85"/><rect x="36" y="512" width="5" height="1.6" fill="#cc4444" opacity="0.85"/><rect x="42" y="512" width="1" height="1.6" fill="#c4c4c4" opacity="0.85"/><rect x="44" y="512" width="5" height="1.6" fill="#cc4444" opacity="0.85"/><rect x="49" y="512" width="7" height="1.6" fill="#c4c4c4" opacity="0.85"/><rect x="16" y="514" width="1" height="1.6" fill="#c4c4c4" opacity="0.85"/><rect x="16" y="516" width="6" height="1.6" fill="#5fa3d0" opacity="0.85"/><rect x="23" y="516" width="6" height="1.6" fill="#c4c4c4" opacity="0.85"/><rect x="12" y="518" width="1" height="1.6" fill="#c4c4c4" opacity="0.85"/><rect x="12" y="520" width="6" height="1.6" fill="#5fa3d0" opacity="0.85"/><rect x="19" y="520" width="5" height="1.6" fill="#c4c4c4" opacity="0.85"/><rect x="8" y="522" width="1" height="1.6" fill="#c4c4c4" opacity="0.85"/><rect x="8" y="526" width="3" height="1.6" fill="#5e5e5e" opacity="0.7"/><rect x="9" y="528" width="1" height="1.6" fill="#5e5e5e" opacity="0.7"/><rect x="11" y="528" width="5" height="1.6" fill="#5e5e5e" opacity="0.7"/><rect x="17" y="528" width="3" height="1.6" fill="#5e5e5e" opacity="0.7"/><rect x="21" y="528" width="7" height="1.6" fill="#5e5e5e" opacity="0.7"/><rect x="29" y="528" width="4" height="1.6" fill="#5e5e5e" opacity="0.7"/><rect x="34" y="528" width="2" height="1.6" fill="#5e5e5e" opacity="0.7"/><rect x="37" y="528" width="3" height="1.6" fill="#5e5e5e" opacity="0.7"/><rect x="41" y="528" width="4" height="1.6" fill="#5e5e5e" opacity="0.7"/><rect x="46" y="528" width="7" height="1.6" fill="#5e5e5e" opacity="0.7"/><rect x="9" y="530" width="1" height="1.6" fill="#5e5e5e" opacity="0.7"/><rect x="9" y="532" width="1" height="1.6" fill="#5e5e5e" opacity="0.7"/><rect x="11" y="532" width="10" height="1.6" fill="#5e5e5e" opacity="0.7"/><rect x="22" y="532" width="4" height="1.6" fill="#5e5e5e" opacity="0.7"/><rect x="27" y="532" width="3" height="1.6" fill="#5e5e5e" opacity="0.7"/><rect x="31" y="532" width="4" height="1.6" fill="#5e5e5e" opacity="0.7"/><rect x="36" y="532" width="4" height="1.6" fill="#5e5e5e" opacity="0.7"/><rect x="41" y="532" width="6" height="1.6" fill="#5e5e5e" opacity="0.7"/><rect x="9" y="534" width="1" height="1.6" fill="#5e5e5e" opacity="0.7"/><rect x="9" y="536" width="1" height="1.6" fill="#5e5e5e" opacity="0.7"/><rect x="11" y="536" width="4" height="1.6" fill="#5e5e5e" opacity="0.7"/><rect x="16" y="536" width="4" height="1.6" fill="#5e5e5e" opacity="0.7"/><rect x="21" y="536" width="8" height="1.6" fill="#5e5e5e" opacity="0.7"/><rect x="30" y="536" width="3" height="1.6" fill="#5e5e5e" opacity="0.7"/><rect x="9" y="538" width="1" height="1.6" fill="#5e5e5e" opacity="0.7"/><rect x="11" y="538" width="4" height="1.6" fill="#5e5e5e" opacity="0.7"/><rect x="16" y="538" width="4" height="1.6" fill="#5e5e5e" opacity="0.7"/><rect x="21" y="538" width="5" height="1.6" fill="#5e5e5e" opacity="0.7"/><rect x="28" y="538" width="1" height="1.6" fill="#5e5e5e" opacity="0.7"/><rect x="30" y="538" width="4" height="1.6" fill="#5e5e5e" opacity="0.7"/><rect x="35" y="538" width="3" height="1.6" fill="#5e5e5e" opacity="0.7"/><rect x="9" y="540" width="1" height="1.6" fill="#5e5e5e" opacity="0.7"/><rect x="11" y="540" width="7" height="1.6" fill="#5e5e5e" opacity="0.7"/><rect x="19" y="540" width="6" height="1.6" fill="#5e5e5e" opacity="0.7"/><rect x="9" y="542" width="1" height="1.6" fill="#5e5e5e" opacity="0.7"/><rect x="11" y="542" width="7" height="1.6" fill="#5e5e5e" opacity="0.7"/><rect x="19" y="542" width="4" height="1.6" fill="#5e5e5e" opacity="0.7"/><rect x="9" y="544" width="2" height="1.6" fill="#5e5e5e" opacity="0.7"/><rect x="8" y="546" width="8" height="1.6" fill="#5fa3d0" opacity="0.85"/><rect x="17" y="546" width="6" height="1.6" fill="#c4c4c4" opacity="0.85"/><rect x="24" y="546" width="1" height="1.6" fill="#c4c4c4" opacity="0.85"/><rect x="12" y="548" width="5" height="1.6" fill="#cc4444" opacity="0.85"/><rect x="17" y="548" width="7" height="1.6" fill="#c4c4c4" opacity="0.85"/><rect x="25" y="548" width="1" height="1.6" fill="#c4c4c4" opacity="0.85"/><rect x="27" y="548" width="5" height="1.6" fill="#c4c4c4" opacity="0.85"/><rect x="33" y="548" width="1" height="1.6" fill="#5e5e5e" opacity="0.7"/><rect x="35" y="548" width="2" height="1.6" fill="#5e5e5e" opacity="0.7"/><rect x="38" y="548" width="2" height="1.6" fill="#5e5e5e" opacity="0.7"/><rect x="41" y="548" width="9" height="1.6" fill="#5e5e5e" opacity="0.7"/><rect x="51" y="548" width="2" height="1.6" fill="#5e5e5e" opacity="0.7"/><rect x="54" y="548" width="6" height="1.6" fill="#5e5e5e" opacity="0.7"/><rect x="12" y="552" width="2" height="1.6" fill="#5fa3d0" opacity="0.85"/><rect x="14" y="552" width="2" height="1.6" fill="#c4c4c4" opacity="0.85"/><rect x="16" y="552" width="5" height="1.6" fill="#cc4444" opacity="0.85"/><rect x="21" y="552" width="14" height="1.6" fill="#c4c4c4" opacity="0.85"/><rect x="36" y="552" width="1" height="1.6" fill="#c4c4c4" opacity="0.85"/><rect x="16" y="554" width="5" height="1.6" fill="#cc4444" opacity="0.85"/><rect x="21" y="554" width="7" height="1.6" fill="#c4c4c4" opacity="0.85"/><rect x="29" y="554" width="1" height="1.6" fill="#c4c4c4" opacity="0.85"/><rect x="31" y="554" width="6" height="1.6" fill="#c4c4c4" opacity="0.85"/><rect x="24" y="556" width="7" height="1.6" fill="#93b866" opacity="0.85"/><rect x="32" y="556" width="2" height="1.6" fill="#c4c4c4" opacity="0.85"/><rect x="35" y="556" width="7" height="1.6" fill="#93b866" opacity="0.85"/><rect x="43" y="556" width="6" height="1.6" fill="#93b866" opacity="0.85"/><rect x="50" y="556" width="7" height="1.6" fill="#93b866" opacity="0.85"/><rect x="58" y="556" width="5" height="1.6" fill="#93b866" opacity="0.85"/><rect x="64" y="556" width="10" height="1.6" fill="#93b866" opacity="0.85"/><rect x="74" y="556" width="2" height="1.6" fill="#c4c4c4" opacity="0.85"/><rect x="16" y="558" width="6" height="1.6" fill="#5fa3d0" opacity="0.85"/><rect x="23" y="558" width="6" height="1.6" fill="#c4c4c4" opacity="0.85"/><rect x="12" y="560" width="1" height="1.6" fill="#c4c4c4" opacity="0.85"/><rect x="12" y="564" width="6" height="1.6" fill="#c4c4c4" opacity="0.85"/><rect x="18" y="564" width="5" height="1.6" fill="#cc4444" opacity="0.85"/><rect x="23" y="564" width="12" height="1.6" fill="#c4c4c4" opacity="0.85"/><rect x="35" y="564" width="6" height="1.6" fill="#93b866" opacity="0.85"/><rect x="42" y="564" width="1" height="1.6" fill="#c4c4c4" opacity="0.85"/><rect x="44" y="564" width="5" height="1.6" fill="#cc4444" opacity="0.85"/><rect x="49" y="564" width="8" height="1.6" fill="#c4c4c4" opacity="0.85"/><rect x="12" y="568" width="5" height="1.6" fill="#cc4444" opacity="0.85"/><rect x="18" y="568" width="1" height="1.6" fill="#c4c4c4" opacity="0.85"/><rect x="20" y="568" width="5" height="1.6" fill="#cc4444" opacity="0.85"/><rect x="25" y="568" width="14" height="1.6" fill="#c4c4c4" opacity="0.85"/><rect x="12" y="570" width="5" height="1.6" fill="#cc4444" opacity="0.85"/><rect x="18" y="570" width="1" height="1.6" fill="#c4c4c4" opacity="0.85"/><rect x="20" y="570" width="7" height="1.6" fill="#c4c4c4" opacity="0.85"/><rect x="27" y="570" width="5" height="1.6" fill="#cc4444" opacity="0.85"/><rect x="32" y="570" width="1" height="1.6" fill="#c4c4c4" opacity="0.85"/><rect x="33" y="570" width="1" height="1.6" fill="#b48cc8" opacity="0.85"/><rect x="34" y="570" width="1" height="1.6" fill="#c4c4c4" opacity="0.85"/><rect x="35" y="570" width="1" height="1.6" fill="#b48cc8" opacity="0.85"/><rect x="36" y="570" width="2" height="1.6" fill="#c4c4c4" opacity="0.85"/><rect x="12" y="574" width="2" height="1.6" fill="#5fa3d0" opacity="0.85"/><rect x="14" y="574" width="1" height="1.6" fill="#c4c4c4" opacity="0.85"/><rect x="15" y="574" width="5" height="1.6" fill="#cc4444" opacity="0.85"/><rect x="20" y="574" width="10" height="1.6" fill="#c4c4c4" opacity="0.85"/><rect x="31" y="574" width="2" height="1.6" fill="#c4c4c4" opacity="0.85"/><rect x="34" y="574" width="1" height="1.6" fill="#b48cc8" opacity="0.85"/><rect x="35" y="574" width="1" height="1.6" fill="#c4c4c4" opacity="0.85"/><rect x="37" y="574" width="1" height="1.6" fill="#c4c4c4" opacity="0.85"/><rect x="16" y="576" width="4" height="1.6" fill="#5fa3d0" opacity="0.85"/><rect x="21" y="576" width="5" height="1.6" fill="#93b866" opacity="0.85"/><rect x="27" y="576" width="2" height="1.6" fill="#93b866" opacity="0.85"/><rect x="30" y="576" width="4" height="1.6" fill="#93b866" opacity="0.85"/><rect x="35" y="576" width="8" height="1.6" fill="#93b866" opacity="0.85"/><rect x="44" y="576" width="1" height="1.6" fill="#c4c4c4" opacity="0.85"/><rect x="46" y="576" width="5" height="1.6" fill="#cc4444" opacity="0.85"/><rect x="51" y="576" width="6" height="1.6" fill="#c4c4c4" opacity="0.85"/><rect x="58" y="576" width="1" height="1.6" fill="#c4c4c4" opacity="0.85"/><rect x="60" y="576" width="5" height="1.6" fill="#cc4444" opacity="0.85"/><rect x="65" y="576" width="1" height="1.6" fill="#c4c4c4" opacity="0.85"/><rect x="12" y="578" width="1" height="1.6" fill="#c4c4c4" opacity="0.85"/><rect x="12" y="582" width="2" height="1.6" fill="#5fa3d0" opacity="0.85"/><rect x="14" y="582" width="1" height="1.6" fill="#c4c4c4" opacity="0.85"/><rect x="15" y="582" width="5" height="1.6" fill="#cc4444" opacity="0.85"/><rect x="21" y="582" width="2" height="1.6" fill="#c4c4c4" opacity="0.85"/><rect x="24" y="582" width="3" height="1.6" fill="#b48cc8" opacity="0.85"/><rect x="27" y="582" width="1" height="1.6" fill="#c4c4c4" opacity="0.85"/><rect x="29" y="582" width="1" height="1.6" fill="#c4c4c4" opacity="0.85"/><rect x="16" y="584" width="5" height="1.6" fill="#cc4444" opacity="0.85"/><rect x="21" y="584" width="7" height="1.6" fill="#c4c4c4" opacity="0.85"/><rect x="29" y="584" width="1" height="1.6" fill="#c4c4c4" opacity="0.85"/><rect x="20" y="586" width="6" height="1.6" fill="#c4c4c4" opacity="0.85"/><rect x="26" y="586" width="7" height="1.6" fill="#93b866" opacity="0.85"/><rect x="34" y="586" width="2" height="1.6" fill="#c4c4c4" opacity="0.85"/><rect x="37" y="586" width="5" height="1.6" fill="#93b866" opacity="0.85"/><rect x="43" y="586" width="3" height="1.6" fill="#93b866" opacity="0.85"/><rect x="47" y="586" width="8" height="1.6" fill="#93b866" opacity="0.85"/><rect x="56" y="586" width="4" height="1.6" fill="#93b866" opacity="0.85"/><rect x="61" y="586" width="7" height="1.6" fill="#93b866" opacity="0.85"/><rect x="68" y="586" width="1" height="1.6" fill="#c4c4c4" opacity="0.85"/><rect x="26" y="588" width="11" height="1.6" fill="#93b866" opacity="0.85"/><rect x="38" y="588" width="2" height="1.6" fill="#c4c4c4" opacity="0.85"/><rect x="41" y="588" width="5" height="1.6" fill="#cc4444" opacity="0.85"/><rect x="46" y="588" width="1" height="1.6" fill="#c4c4c4" opacity="0.85"/><rect x="26" y="590" width="10" height="1.6" fill="#93b866" opacity="0.85"/><rect x="37" y="590" width="2" height="1.6" fill="#c4c4c4" opacity="0.85"/><rect x="40" y="590" width="7" height="1.6" fill="#c4c4c4" opacity="0.85"/><rect x="47" y="590" width="5" height="1.6" fill="#cc4444" opacity="0.85"/><rect x="52" y="590" width="1" height="1.6" fill="#c4c4c4" opacity="0.85"/><rect x="53" y="590" width="1" height="1.6" fill="#b48cc8" opacity="0.85"/><rect x="54" y="590" width="3" height="1.6" fill="#c4c4c4" opacity="0.85"/><rect x="16" y="592" width="2" height="1.6" fill="#5fa3d0" opacity="0.85"/><rect x="18" y="592" width="1" height="1.6" fill="#c4c4c4" opacity="0.85"/><rect x="19" y="592" width="5" height="1.6" fill="#cc4444" opacity="0.85"/><rect x="24" y="592" width="10" height="1.6" fill="#c4c4c4" opacity="0.85"/><rect x="35" y="592" width="2" height="1.6" fill="#c4c4c4" opacity="0.85"/><rect x="38" y="592" width="1" height="1.6" fill="#b48cc8" opacity="0.85"/><rect x="39" y="592" width="1" height="1.6" fill="#c4c4c4" opacity="0.85"/><rect x="41" y="592" width="1" height="1.6" fill="#c4c4c4" opacity="0.85"/><rect x="20" y="594" width="4" height="1.6" fill="#5fa3d0" opacity="0.85"/><rect x="25" y="594" width="5" height="1.6" fill="#93b866" opacity="0.85"/><rect x="31" y="594" width="2" height="1.6" fill="#93b866" opacity="0.85"/><rect x="34" y="594" width="6" height="1.6" fill="#93b866" opacity="0.85"/><rect x="41" y="594" width="1" height="1.6" fill="#93b866" opacity="0.85"/><rect x="43" y="594" width="1" height="1.6" fill="#c4c4c4" opacity="0.85"/><rect x="45" y="594" width="5" height="1.6" fill="#cc4444" opacity="0.85"/><rect x="50" y="594" width="8" height="1.6" fill="#c4c4c4" opacity="0.85"/><rect x="58" y="594" width="7" height="1.6" fill="#93b866" opacity="0.85"/><rect x="65" y="594" width="1" height="1.6" fill="#c4c4c4" opacity="0.85"/><rect x="67" y="594" width="1" height="1.6" fill="#c4c4c4" opacity="0.85"/><rect x="29" y="596" width="2" height="1.6" fill="#93b866" opacity="0.85"/><rect x="32" y="596" width="1" height="1.6" fill="#93b866" opacity="0.85"/><rect x="34" y="596" width="1" height="1.6" fill="#c4c4c4" opacity="0.85"/><rect x="36" y="596" width="5" height="1.6" fill="#cc4444" opacity="0.85"/><rect x="42" y="596" width="1" height="1.6" fill="#c4c4c4" opacity="0.85"/><rect x="44" y="596" width="5" height="1.6" fill="#cc4444" opacity="0.85"/><rect x="49" y="596" width="7" height="1.6" fill="#c4c4c4" opacity="0.85"/><rect x="16" y="598" width="1" height="1.6" fill="#c4c4c4" opacity="0.85"/><rect x="16" y="600" width="6" height="1.6" fill="#5fa3d0" opacity="0.85"/><rect x="23" y="600" width="6" height="1.6" fill="#c4c4c4" opacity="0.85"/><rect x="12" y="602" width="1" height="1.6" fill="#c4c4c4" opacity="0.85"/></svg>
<div class="b" style="left:234px;top:719px;width:778px;height:16px;background:#2e2e2e;"></div><div class="b" style="left:251px;top:719px;width:605px;height:16px;background:#4f4f4f;"></div><svg style="left:240px;top:724px" width="5" height="7" viewBox="0 0 5 7" ><path d="M4.4 0.4L1.2 3.5 4.4 6.6" fill="none" stroke="#a0a0a0" stroke-width="1.6"/></svg><svg style="left:985px;top:724px" width="5" height="7" viewBox="0 0 5 7" ><path d="M0.6 0.4L3.8 3.5 0.6 6.6" fill="none" stroke="#a0a0a0" stroke-width="1.6"/></svg><div class="b" style="left:234px;top:735px;width:779px;height:1px;background:#464646;"></div><div class="b" style="left:996px;top:115px;width:16px;height:604px;background:#2b2b2b;"></div><div class="b" style="left:997px;top:375px;width:15px;height:17px;background:#4d4d4d;"></div><svg style="left:1001px;top:121px" width="7" height="5" viewBox="0 0 7 5" ><path d="M0.4 4.4L3.5 1.2 6.6 4.4" fill="none" stroke="#a0a0a0" stroke-width="1.6"/></svg><svg style="left:1001px;top:708px" width="7" height="5" viewBox="0 0 7 5" ><path d="M0.4 0.6L3.5 3.8 6.6 0.6" fill="none" stroke="#a0a0a0" stroke-width="1.6"/></svg><svg style="left:234px;top:736px" width="380" height="23" viewBox="0 0 380 23" ><path d="M250.0 0.5V18Q250.0 21.5 253.5 21.5H342.5L362.5 0.5Z" fill="#262626" stroke="#4c4c4c" stroke-width="1"/><path d="M145.0 0.5V18Q145.0 21.5 148.5 21.5H238.5L258.5 0.5Z" fill="#262626" stroke="#4c4c4c" stroke-width="1"/><path d="M82.0 0.5V18Q82.0 21.5 85.5 21.5H133L153 0.5Z" fill="#262626" stroke="#4c4c4c" stroke-width="1"/><rect x="0" y="0" width="91" height="1.2" fill="#333"/><path d="M1.0 0.5V18Q1.0 21.5 4.5 21.5H70L90 0.5" fill="#333333" stroke="#4c4c4c" stroke-width="1"/></svg><span class="t ui bold" style="left:239px;top:739px;letter-spacing:-0.35px;">Code Editor</span><span class="t ui" style="left:322px;top:739px;letter-spacing:-0.172px;">Preview</span><span class="t ui" style="left:386px;top:739px;letter-spacing:-0.042px;">H-Split Preview</span><span class="t ui" style="left:491px;top:739px;letter-spacing:-0.025px;">V-Split Preview</span><div id="right"><span class="t ph" style="left:1024px;top:92px;letter-spacing:-0.226px;">File Explorer</span><svg style="left:1096px;top:97px" width="113" height="6" viewBox="0 0 113 6" shape-rendering="crispEdges"><rect x="0" y="0" width="1" height="1" fill="#474747"/><rect x="0" y="4" width="1" height="1" fill="#474747"/><rect x="2" y="2" width="1" height="1" fill="#474747"/><rect x="4" y="0" width="1" height="1" fill="#474747"/><rect x="4" y="4" width="1" height="1" fill="#474747"/><rect x="6" y="2" width="1" height="1" fill="#474747"/><rect x="8" y="0" width="1" height="1" fill="#474747"/><rect x="8" y="4" width="1" height="1" fill="#474747"/><rect x="10" y="2" width="1" height="1" fill="#474747"/><rect x="12" y="0" width="1" height="1" fill="#474747"/><rect x="12" y="4" width="1" height="1" fill="#474747"/><rect x="14" y="2" width="1" height="1" fill="#474747"/><rect x="16" y="0" width="1" height="1" fill="#474747"/><rect x="16" y="4" width="1" height="1" fill="#474747"/><rect x="18" y="2" width="1" height="1" fill="#474747"/><rect x="20" y="0" width="1" height="1" fill="#474747"/><rect x="20" y="4" width="1" height="1" fill="#474747"/><rect x="22" y="2" width="1" height="1" fill="#474747"/><rect x="24" y="0" width="1" height="1" fill="#474747"/><rect x="24" y="4" width="1" height="1" fill="#474747"/><rect x="26" y="2" width="1" height="1" fill="#474747"/><rect x="28" y="0" width="1" height="1" fill="#474747"/><rect x="28" y="4" width="1" height="1" fill="#474747"/><rect x="30" y="2" width="1" height="1" fill="#474747"/><rect x="32" y="0" width="1" height="1" fill="#474747"/><rect x="32" y="4" width="1" height="1" fill="#474747"/><rect x="34" y="2" width="1" height="1" fill="#474747"/><rect x="36" y="0" width="1" height="1" fill="#474747"/><rect x="36" y="4" width="1" height="1" fill="#474747"/><rect x="38" y="2" width="1" height="1" fill="#474747"/><rect x="40" y="0" width="1" height="1" fill="#474747"/><rect x="40" y="4" width="1" height="1" fill="#474747"/><rect x="42" y="2" width="1" height="1" fill="#474747"/><rect x="44" y="0" width="1" height="1" fill="#474747"/><rect x="44" y="4" width="1" height="1" fill="#474747"/><rect x="46" y="2" width="1" height="1" fill="#474747"/><rect x="48" y="0" width="1" height="1" fill="#474747"/><rect x="48" y="4" width="1" height="1" fill="#474747"/><rect x="50" y="2" width="1" height="1" fill="#474747"/><rect x="52" y="0" width="1" height="1" fill="#474747"/><rect x="52" y="4" width="1" height="1" fill="#474747"/><rect x="54" y="2" width="1" height="1" fill="#474747"/><rect x="56" y="0" width="1" height="1" fill="#474747"/><rect x="56" y="4" width="1" height="1" fill="#474747"/><rect x="58" y="2" width="1" height="1" fill="#474747"/><rect x="60" y="0" width="1" height="1" fill="#474747"/><rect x="60" y="4" width="1" height="1" fill="#474747"/><rect x="62" y="2" width="1" height="1" fill="#474747"/><rect x="64" y="0" width="1" height="1" fill="#474747"/><rect x="64" y="4" width="1" height="1" fill="#474747"/><rect x="66" y="2" width="1" height="1" fill="#474747"/><rect x="68" y="0" width="1" height="1" fill="#474747"/><rect x="68" y="4" width="1" height="1" fill="#474747"/><rect x="70" y="2" width="1" height="1" fill="#474747"/><rect x="72" y="0" width="1" height="1" fill="#474747"/><rect x="72" y="4" width="1" height="1" fill="#474747"/><rect x="74" y="2" width="1" height="1" fill="#474747"/><rect x="76" y="0" width="1" height="1" fill="#474747"/><rect x="76" y="4" width="1" height="1" fill="#474747"/><rect x="78" y="2" width="1" height="1" fill="#474747"/><rect x="80" y="0" width="1" height="1" fill="#474747"/><rect x="80" y="4" width="1" height="1" fill="#474747"/><rect x="82" y="2" width="1" height="1" fill="#474747"/><rect x="84" y="0" width="1" height="1" fill="#474747"/><rect x="84" y="4" width="1" height="1" fill="#474747"/><rect x="86" y="2" width="1" height="1" fill="#474747"/><rect x="88" y="0" width="1" height="1" fill="#474747"/><rect x="88" y="4" width="1" height="1" fill="#474747"/><rect x="90" y="2" width="1" height="1" fill="#474747"/><rect x="92" y="0" width="1" height="1" fill="#474747"/><rect x="92" y="4" width="1" height="1" fill="#474747"/><rect x="94" y="2" width="1" height="1" fill="#474747"/><rect x="96" y="0" width="1" height="1" fill="#474747"/><rect x="96" y="4" width="1" height="1" fill="#474747"/><rect x="98" y="2" width="1" height="1" fill="#474747"/><rect x="100" y="0" width="1" height="1" fill="#474747"/><rect x="100" y="4" width="1" height="1" fill="#474747"/><rect x="102" y="2" width="1" height="1" fill="#474747"/><rect x="104" y="0" width="1" height="1" fill="#474747"/><rect x="104" y="4" width="1" height="1" fill="#474747"/><rect x="106" y="2" width="1" height="1" fill="#474747"/><rect x="108" y="0" width="1" height="1" fill="#474747"/><rect x="108" y="4" width="1" height="1" fill="#474747"/><rect x="110" y="2" width="1" height="1" fill="#474747"/><rect x="112" y="0" width="1" height="1" fill="#474747"/><rect x="112" y="4" width="1" height="1" fill="#474747"/><rect x="114" y="2" width="1" height="1" fill="#474747"/></svg><svg style="left:1217px;top:93px" width="9" height="12" viewBox="0 0 9 12" ><path d="M2.5 0.5H6.5V6.5H2.5ZM0.5 6.5H8.5M4.5 6.5V11.5" fill="none" stroke="#f0f0f0" stroke-width="1"/><rect x="5" y="0.5" width="1.5" height="6" fill="#f0f0f0"/></svg><svg style="left:1233px;top:94px" width="10" height="9" viewBox="0 0 10 9" ><path d="M0.5 0.5L9.5 8.5M9.5 0.5L0.5 8.5" stroke="#f0f0f0" stroke-width="1.6"/></svg><svg style="left:1024px;top:114px" width="18" height="18" viewBox="0 0 18 18" ><path d="M1 6H6.5L8 7.5H14V10H1Z" fill="#c08a2e"/><path d="M0.5 9H14.5V17H0.5Z" fill="#e8b35a"/><path d="M9 4.5Q12 1.5 15.5 4.5M9 4.5V1.5M9 4.5H12" fill="none" stroke="#3a86d0" stroke-width="1.2"/></svg><svg style="left:1047px;top:114px" width="18" height="18" viewBox="0 0 18 18" ><path d="M1 2H6.5L8 3.5H14V6H1Z" fill="#c08a2e"/><path d="M0.5 5H14.5V14H0.5Z" fill="#e8b35a"/><circle cx="13" cy="13" r="4.4" fill="#3aa878"/><path d="M13 10.4V15.6M10.4 13H15.6" stroke="#1e3a2e" stroke-width="1.2"/></svg><div class="b" style="left:1070px;top:113px;width:1px;height:20px;background:#505050"></div><svg style="left:1076px;top:115px" width="17" height="16" viewBox="0 0 17 16" ><rect x="0.5" y="0.5" width="16" height="15" fill="#e8e8e8" stroke="#9a9a9a"/><rect x="0.5" y="0.5" width="16" height="3.5" fill="#3aa878"/><rect x="2.5" y="6.5" width="5" height="4.5" fill="none" stroke="#5a5a5a" stroke-width="1.2"/><rect x="9.5" y="6.5" width="5" height="4.5" fill="none" stroke="#5a5a5a" stroke-width="1.2"/><path d="M2.5 12.8H7.5M9.5 12.8H14.5" stroke="#5a5a5a" stroke-width="1.2"/></svg><svg style="left:1095px;top:121px" width="6" height="4" viewBox="0 0 6 4" ><path d="M0 0H6L3 3.2Z" fill="#f0f0f0"/></svg><div class="b" style="left:1107px;top:113px;width:1px;height:20px;background:#505050"></div><svg style="left:1113px;top:115px" width="17" height="16" viewBox="0 0 17 16" ><path d="M0.5 1H6.5L8 2.5H16V5H0.5Z" fill="#c08a2e"/><path d="M0.5 4H16.5V14.5H0.5Z" fill="#e8b35a"/></svg><svg style="left:1133px;top:121px" width="6" height="4" viewBox="0 0 6 4" ><path d="M0 0H6L3 3.2Z" fill="#f0f0f0"/></svg><div class="b" style="left:1145px;top:113px;width:1px;height:20px;background:#505050"></div><svg style="left:1150px;top:114px" width="18" height="18" viewBox="0 0 18 18" ><path d="M1 2H6.5L8 3.5H13V6H1Z" fill="#c08a2e"/><path d="M0.5 5H13.5V13.5H0.5Z" fill="#e8b35a"/><circle cx="12.5" cy="12.5" r="4.6" fill="#2d2d2d" stroke="#3a86d0" stroke-width="1.1"/><path d="M8 12.5H17M12.5 8V17M10.3 9Q8.8 12.5 10.3 16M14.7 9Q16.2 12.5 14.7 16" fill="none" stroke="#3a86d0" stroke-width=".8"/></svg><div class="b" style="left:1220px;top:113px;width:1px;height:20px;background:#505050"></div><svg style="left:1225px;top:113px" width="19" height="19" viewBox="0 0 19 19" ><circle cx="8" cy="8.5" r="7" fill="none" stroke="#3a86d0" stroke-width="1.3"/><path d="M1 8.5H15M8 1.5V15.5M4.5 2.5Q1.5 8.5 4.5 14.5M11.5 2.5Q14.5 8.5 11.5 14.5" fill="none" stroke="#3a86d0" stroke-width="1"/><circle cx="13.5" cy="14" r="4.6" fill="#3aa878"/><path d="M13.5 16.8V11.6M11.4 13.6L13.5 11.5 15.6 13.6" fill="none" stroke="#1e3a2e" stroke-width="1.1"/></svg><span class="t ui" style="left:1170px;top:115px;letter-spacing:-0.193px;">Projects</span><div class="b" style="left:1019px;top:137px;width:212px;height:421px;background:#252525;"></div><div class="b" style="left:1231px;top:137px;width:17px;height:421px;background:#2d2d2d;"></div><div class="b" style="left:1232px;top:185px;width:15px;height:347px;background:#4d4d4d;"></div><svg style="left:1236px;top:143px" width="7" height="5" viewBox="0 0 7 5" ><path d="M0.4 4.4L3.5 1.2 6.6 4.4" fill="none" stroke="#a0a0a0" stroke-width="1.6"/></svg><svg style="left:1236px;top:547px" width="7" height="5" viewBox="0 0 7 5" ><path d="M0.4 0.6L3.5 3.8 6.6 0.6" fill="none" stroke="#a0a0a0" stroke-width="1.6"/></svg><div class="b" style="left:1019px;top:137px;width:213px;height:421px;overflow:hidden"><svg style="left:21px;top:2px" width="16" height="18" viewBox="0 0 16 18" ><path d="M2 1H14V10H15.5V17H2Z" fill="#fbe28a"/><path d="M12.6 10H15.5V17H12.6Z" fill="#f2cf5e"/><circle cx="4.7" cy="12" r="4.9" fill="#2f9a12"/><path d="M2.1 12.2L3.9000000000000004 14.2 7.5 9.6" fill="none" stroke="#fff" stroke-width="1.5"/></svg><span class="t ui" style="left:44px;top:3px;letter-spacing:-0.218px;">_script</span><svg style="left:5px;top:25px" width="9" height="9" viewBox="0 0 9 9" shape-rendering="crispEdges"><rect x="0.5" y="0.5" width="8" height="8" fill="#252525" stroke="#6e6e6e" stroke-width="1"/><path d="M2 4.5H7M4.5 2V7" stroke="#f0f0f0" stroke-width="1"/></svg><svg style="left:21px;top:22px" width="16" height="18" viewBox="0 0 16 18" ><path d="M2 1H14V10H15.5V17H2Z" fill="#fbe28a"/><path d="M12.6 10H15.5V17H12.6Z" fill="#f2cf5e"/><circle cx="4.7" cy="12" r="4.9" fill="#2f9a12"/><path d="M2.1 12.2L3.9000000000000004 14.2 7.5 9.6" fill="none" stroke="#fff" stroke-width="1.5"/></svg><span class="t ui" style="left:44px;top:23px;letter-spacing:-0.623px;">_st</span><svg style="left:21px;top:42px" width="16" height="18" viewBox="0 0 16 18" ><path d="M2 1H14V10H15.5V17H2Z" fill="#fbe28a"/><path d="M12.6 10H15.5V17H12.6Z" fill="#f2cf5e"/><circle cx="4.7" cy="12" r="4.9" fill="#2f9a12"/><path d="M2.1 12.2L3.9000000000000004 14.2 7.5 9.6" fill="none" stroke="#fff" stroke-width="1.5"/></svg><span class="t ui" style="left:44px;top:43px;letter-spacing:-0.144px;">chkver</span><svg style="left:21px;top:62px" width="16" height="18" viewBox="0 0 16 18" ><path d="M2 1H14V10H15.5V17H2Z" fill="#fbe28a"/><path d="M12.6 10H15.5V17H12.6Z" fill="#f2cf5e"/><circle cx="4.7" cy="12" r="4.9" fill="#2f9a12"/><path d="M2.1 12.2L3.9000000000000004 14.2 7.5 9.6" fill="none" stroke="#fff" stroke-width="1.5"/></svg><span class="t ui" style="left:44px;top:63px;letter-spacing:-0.588px;">cse</span><svg style="left:5px;top:85px" width="9" height="9" viewBox="0 0 9 9" shape-rendering="crispEdges"><rect x="0.5" y="0.5" width="8" height="8" fill="#252525" stroke="#6e6e6e" stroke-width="1"/><path d="M2 4.5H7M4.5 2V7" stroke="#f0f0f0" stroke-width="1"/></svg><svg style="left:21px;top:82px" width="16" height="18" viewBox="0 0 16 18" ><path d="M2 1H14V10H15.5V17H2Z" fill="#fbe28a"/><path d="M12.6 10H15.5V17H12.6Z" fill="#f2cf5e"/><circle cx="4.7" cy="12" r="4.9" fill="#2f9a12"/><path d="M2.1 12.2L3.9000000000000004 14.2 7.5 9.6" fill="none" stroke="#fff" stroke-width="1.5"/></svg><span class="t ui" style="left:44px;top:83px;letter-spacing:-0.084px;">csstool</span><svg style="left:5px;top:105px" width="9" height="9" viewBox="0 0 9 9" shape-rendering="crispEdges"><rect x="0.5" y="0.5" width="8" height="8" fill="#252525" stroke="#6e6e6e" stroke-width="1"/><path d="M2 4.5H7M4.5 2V7" stroke="#f0f0f0" stroke-width="1"/></svg><svg style="left:21px;top:102px" width="16" height="18" viewBox="0 0 16 18" ><path d="M2 1H14V10H15.5V17H2Z" fill="#fbe28a"/><path d="M12.6 10H15.5V17H12.6Z" fill="#f2cf5e"/><circle cx="4.7" cy="12" r="4.9" fill="#2f9a12"/><path d="M2.1 12.2L3.9000000000000004 14.2 7.5 9.6" fill="none" stroke="#fff" stroke-width="1.5"/></svg><span class="t ui" style="left:44px;top:103px;letter-spacing:0.006px;">engine</span><svg style="left:5px;top:125px" width="9" height="9" viewBox="0 0 9 9" shape-rendering="crispEdges"><rect x="0.5" y="0.5" width="8" height="8" fill="#252525" stroke="#6e6e6e" stroke-width="1"/><path d="M2 4.5H7M4.5 2V7" stroke="#f0f0f0" stroke-width="1"/></svg><svg style="left:21px;top:122px" width="16" height="18" viewBox="0 0 16 18" ><path d="M2 1H14V10H15.5V17H2Z" fill="#fbe28a"/><path d="M12.6 10H15.5V17H12.6Z" fill="#f2cf5e"/><circle cx="4.7" cy="12" r="4.9" fill="#2f9a12"/><path d="M2.1 12.2L3.9000000000000004 14.2 7.5 9.6" fill="none" stroke="#fff" stroke-width="1.5"/></svg><span class="t ui" style="left:44px;top:123px;letter-spacing:0.291px;">inetprot</span><svg style="left:21px;top:142px" width="16" height="18" viewBox="0 0 16 18" ><path d="M2 1H14V10H15.5V17H2Z" fill="#fbe28a"/><path d="M12.6 10H15.5V17H12.6Z" fill="#f2cf5e"/><circle cx="4.7" cy="12" r="4.9" fill="#2f9a12"/><path d="M2.1 12.2L3.9000000000000004 14.2 7.5 9.6" fill="none" stroke="#fff" stroke-width="1.5"/></svg><span class="t ui" style="left:44px;top:143px;letter-spacing:0.064px;">pad</span><svg style="left:5px;top:165px" width="9" height="9" viewBox="0 0 9 9" shape-rendering="crispEdges"><rect x="0.5" y="0.5" width="8" height="8" fill="#252525" stroke="#6e6e6e" stroke-width="1"/><path d="M2 4.5H7M4.5 2V7" stroke="#f0f0f0" stroke-width="1"/></svg><svg style="left:21px;top:162px" width="16" height="18" viewBox="0 0 16 18" ><path d="M2 1H14V10H15.5V17H2Z" fill="#fbe28a"/><path d="M12.6 10H15.5V17H12.6Z" fill="#f2cf5e"/><circle cx="4.7" cy="12" r="4.9" fill="#2f9a12"/><path d="M2.1 12.2L3.9000000000000004 14.2 7.5 9.6" fill="none" stroke="#fff" stroke-width="1.5"/></svg><span class="t ui" style="left:44px;top:163px;letter-spacing:0.229px;">protector</span><svg style="left:5px;top:185px" width="9" height="9" viewBox="0 0 9 9" shape-rendering="crispEdges"><rect x="0.5" y="0.5" width="8" height="8" fill="#252525" stroke="#6e6e6e" stroke-width="1"/><path d="M2 4.5H7M4.5 2V7" stroke="#f0f0f0" stroke-width="1"/></svg><svg style="left:21px;top:182px" width="16" height="18" viewBox="0 0 16 18" ><path d="M2 1H14V10H15.5V17H2Z" fill="#fbe28a"/><path d="M12.6 10H15.5V17H12.6Z" fill="#f2cf5e"/><circle cx="4.7" cy="12" r="4.9" fill="#2f9a12"/><path d="M2.1 12.2L3.9000000000000004 14.2 7.5 9.6" fill="none" stroke="#fff" stroke-width="1.5"/></svg><span class="t ui" style="left:44px;top:183px;letter-spacing:-0.074px;">scrfactory</span><svg style="left:5px;top:205px" width="9" height="9" viewBox="0 0 9 9" shape-rendering="crispEdges"><rect x="0.5" y="0.5" width="8" height="8" fill="#252525" stroke="#6e6e6e" stroke-width="1"/><path d="M2 4.5H7M4.5 2V7" stroke="#f0f0f0" stroke-width="1"/></svg><svg style="left:21px;top:202px" width="16" height="18" viewBox="0 0 16 18" ><path d="M2 1H14V10H15.5V17H2Z" fill="#fbe28a"/><path d="M12.6 10H15.5V17H12.6Z" fill="#f2cf5e"/><circle cx="4.7" cy="12" r="4.9" fill="#2f9a12"/><path d="M2.1 12.2L3.9000000000000004 14.2 7.5 9.6" fill="none" stroke="#fff" stroke-width="1.5"/></svg><span class="t ui" style="left:44px;top:203px;letter-spacing:0.016px;">scrwonder</span><svg style="left:5px;top:225px" width="9" height="9" viewBox="0 0 9 9" shape-rendering="crispEdges"><rect x="0.5" y="0.5" width="8" height="8" fill="#252525" stroke="#6e6e6e" stroke-width="1"/><path d="M2 4.5H7M4.5 2V7" stroke="#f0f0f0" stroke-width="1"/></svg><div class="b" style="left:40px;top:221px;width:117px;height:20px;background:#0c60b6;"></div><svg style="left:21px;top:222px" width="16" height="18" viewBox="0 0 16 18" ><path d="M2 1H14V10H15.5V17H2Z" fill="#6f9488"/><path d="M12.6 10H15.5V17H12.6Z" fill="#55756c"/><circle cx="4.7" cy="12" r="4.9" fill="#2f9a12"/><path d="M2.1 12.2L3.9000000000000004 14.2 7.5 9.6" fill="none" stroke="#fff" stroke-width="1.5"/></svg><span class="t ui" style="left:44px;top:223px;letter-spacing:0.112px;">www.blumentals.net</span><svg style="left:5px;top:245px" width="9" height="9" viewBox="0 0 9 9" shape-rendering="crispEdges"><rect x="0.5" y="0.5" width="8" height="8" fill="#252525" stroke="#6e6e6e" stroke-width="1"/><path d="M2 4.5H7M4.5 2V7" stroke="#f0f0f0" stroke-width="1"/></svg><svg style="left:21px;top:242px" width="16" height="18" viewBox="0 0 16 18" ><path d="M2 1H14V10H15.5V17H2Z" fill="#fbe28a"/><path d="M12.6 10H15.5V17H12.6Z" fill="#f2cf5e"/><circle cx="4.7" cy="12" r="4.9" fill="#2f9a12"/><path d="M2.1 12.2L3.9000000000000004 14.2 7.5 9.6" fill="none" stroke="#fff" stroke-width="1.5"/></svg><span class="t ui" style="left:44px;top:243px;letter-spacing:-0.141px;">www.easycssmenu.com</span><svg style="left:5px;top:265px" width="9" height="9" viewBox="0 0 9 9" shape-rendering="crispEdges"><rect x="0.5" y="0.5" width="8" height="8" fill="#252525" stroke="#6e6e6e" stroke-width="1"/><path d="M2 4.5H7M4.5 2V7" stroke="#f0f0f0" stroke-width="1"/></svg><svg style="left:21px;top:262px" width="16" height="18" viewBox="0 0 16 18" ><path d="M2 1H14V10H15.5V17H2Z" fill="#fbe28a"/><path d="M12.6 10H15.5V17H12.6Z" fill="#f2cf5e"/><circle cx="4.7" cy="12" r="4.9" fill="#2f9a12"/><path d="M2.1 12.2L3.9000000000000004 14.2 7.5 9.6" fill="none" stroke="#fff" stroke-width="1.5"/></svg><span class="t ui" style="left:44px;top:263px;letter-spacing:0.095px;">www.easygifanimator.net</span><svg style="left:5px;top:285px" width="9" height="9" viewBox="0 0 9 9" shape-rendering="crispEdges"><rect x="0.5" y="0.5" width="8" height="8" fill="#252525" stroke="#6e6e6e" stroke-width="1"/><path d="M2 4.5H7M4.5 2V7" stroke="#f0f0f0" stroke-width="1"/></svg><svg style="left:21px;top:282px" width="16" height="18" viewBox="0 0 16 18" ><path d="M2 1H14V10H15.5V17H2Z" fill="#fbe28a"/><path d="M12.6 10H15.5V17H12.6Z" fill="#f2cf5e"/><circle cx="4.7" cy="12" r="4.9" fill="#2f9a12"/><path d="M2.1 12.2L3.9000000000000004 14.2 7.5 9.6" fill="none" stroke="#fff" stroke-width="1.5"/></svg><span class="t ui" style="left:44px;top:283px;letter-spacing:-0.011px;">www.easymenumaker.com</span><svg style="left:5px;top:305px" width="9" height="9" viewBox="0 0 9 9" shape-rendering="crispEdges"><rect x="0.5" y="0.5" width="8" height="8" fill="#252525" stroke="#6e6e6e" stroke-width="1"/><path d="M2 4.5H7M4.5 2V7" stroke="#f0f0f0" stroke-width="1"/></svg><svg style="left:21px;top:302px" width="16" height="18" viewBox="0 0 16 18" ><path d="M2 1H14V10H15.5V17H2Z" fill="#fbe28a"/><path d="M12.6 10H15.5V17H12.6Z" fill="#f2cf5e"/><circle cx="4.7" cy="12" r="4.9" fill="#d8301e"/><rect x="3.9000000000000004" y="8.8" width="1.6" height="4.2" fill="#fff"/><rect x="3.9000000000000004" y="13.8" width="1.6" height="1.6" fill="#fff"/></svg><span class="t ui" style="left:44px;top:303px;letter-spacing:0.224px;">www.htmlpad.net</span><svg style="left:5px;top:325px" width="9" height="9" viewBox="0 0 9 9" shape-rendering="crispEdges"><rect x="0.5" y="0.5" width="8" height="8" fill="#252525" stroke="#6e6e6e" stroke-width="1"/><path d="M2 4.5H7M4.5 2V7" stroke="#f0f0f0" stroke-width="1"/></svg><svg style="left:21px;top:322px" width="16" height="18" viewBox="0 0 16 18" ><path d="M2 1H14V10H15.5V17H2Z" fill="#fbe28a"/><path d="M12.6 10H15.5V17H12.6Z" fill="#f2cf5e"/><circle cx="4.7" cy="12" r="4.9" fill="#d8301e"/><rect x="3.9000000000000004" y="8.8" width="1.6" height="4.2" fill="#fff"/><rect x="3.9000000000000004" y="13.8" width="1.6" height="1.6" fill="#fff"/></svg><span class="t ui" style="left:44px;top:323px;letter-spacing:0.093px;">www.rapidcsseditor.com</span><svg style="left:5px;top:345px" width="9" height="9" viewBox="0 0 9 9" shape-rendering="crispEdges"><rect x="0.5" y="0.5" width="8" height="8" fill="#252525" stroke="#6e6e6e" stroke-width="1"/><path d="M2 4.5H7M4.5 2V7" stroke="#f0f0f0" stroke-width="1"/></svg><svg style="left:21px;top:342px" width="16" height="18" viewBox="0 0 16 18" ><path d="M2 1H14V10H15.5V17H2Z" fill="#fbe28a"/><path d="M12.6 10H15.5V17H12.6Z" fill="#f2cf5e"/><circle cx="4.7" cy="12" r="4.9" fill="#d8301e"/><rect x="3.9000000000000004" y="8.8" width="1.6" height="4.2" fill="#fff"/><rect x="3.9000000000000004" y="13.8" width="1.6" height="1.6" fill="#fff"/></svg><span class="t ui" style="left:44px;top:343px;letter-spacing:0.235px;">www.rapidphpeditor.com</span><svg style="left:5px;top:365px" width="9" height="9" viewBox="0 0 9 9" shape-rendering="crispEdges"><rect x="0.5" y="0.5" width="8" height="8" fill="#252525" stroke="#6e6e6e" stroke-width="1"/><path d="M2 4.5H7M4.5 2V7" stroke="#f0f0f0" stroke-width="1"/></svg><svg style="left:21px;top:362px" width="16" height="18" viewBox="0 0 16 18" ><path d="M2 1H14V10H15.5V17H2Z" fill="#fbe28a"/><path d="M12.6 10H15.5V17H12.6Z" fill="#f2cf5e"/><circle cx="4.7" cy="12" r="4.9" fill="#2f9a12"/><path d="M2.1 12.2L3.9000000000000004 14.2 7.5 9.6" fill="none" stroke="#fff" stroke-width="1.5"/></svg><span class="t ui" style="left:44px;top:363px;letter-spacing:0.145px;">www.rapidseotool.com</span><svg style="left:5px;top:385px" width="9" height="9" viewBox="0 0 9 9" shape-rendering="crispEdges"><rect x="0.5" y="0.5" width="8" height="8" fill="#252525" stroke="#6e6e6e" stroke-width="1"/><path d="M2 4.5H7M4.5 2V7" stroke="#f0f0f0" stroke-width="1"/></svg><svg style="left:21px;top:382px" width="16" height="18" viewBox="0 0 16 18" ><path d="M2 1H14V10H15.5V17H2Z" fill="#fbe28a"/><path d="M12.6 10H15.5V17H12.6Z" fill="#f2cf5e"/><circle cx="4.7" cy="12" r="4.9" fill="#2f9a12"/><path d="M2.1 12.2L3.9000000000000004 14.2 7.5 9.6" fill="none" stroke="#fff" stroke-width="1.5"/></svg><span class="t ui" style="left:44px;top:383px;letter-spacing:0.12px;">www.surfblocker.com</span><svg style="left:5px;top:405px" width="9" height="9" viewBox="0 0 9 9" shape-rendering="crispEdges"><rect x="0.5" y="0.5" width="8" height="8" fill="#252525" stroke="#6e6e6e" stroke-width="1"/><path d="M2 4.5H7M4.5 2V7" stroke="#f0f0f0" stroke-width="1"/></svg><svg style="left:21px;top:402px" width="16" height="18" viewBox="0 0 16 18" ><path d="M2 1H14V10H15.5V17H2Z" fill="#fbe28a"/><path d="M12.6 10H15.5V17H12.6Z" fill="#f2cf5e"/><circle cx="4.7" cy="12" r="4.9" fill="#d8301e"/><rect x="3.9000000000000004" y="8.8" width="1.6" height="4.2" fill="#fff"/><rect x="3.9000000000000004" y="13.8" width="1.6" height="1.6" fill="#fff"/></svg><span class="t ui" style="left:44px;top:403px;letter-spacing:0.159px;">www.webuilderapp.com</span></div><div class="b" style="left:1019px;top:564px;width:212px;height:170px;background:#252525;"></div><div class="b" style="left:1231px;top:564px;width:17px;height:170px;background:#2d2d2d;"></div><div class="b" style="left:1232px;top:580px;width:15px;height:40px;background:#4d4d4d;"></div><svg style="left:1236px;top:570px" width="7" height="5" viewBox="0 0 7 5" ><path d="M0.4 4.4L3.5 1.2 6.6 4.4" fill="none" stroke="#a0a0a0" stroke-width="1.6"/></svg><svg style="left:1236px;top:723px" width="7" height="5" viewBox="0 0 7 5" ><path d="M0.4 0.6L3.5 3.8 6.6 0.6" fill="none" stroke="#a0a0a0" stroke-width="1.6"/></svg><div class="b" style="left:1019px;top:564px;width:212px;height:170px;overflow:hidden"><svg style="left:2px;top:1px" width="18" height="18" viewBox="0 0 18 18" ><path d="M3 1H10.5L15 5.5V17H3Z" fill="#f6f6f6"/><path d="M10.5 1V5.5H15Z" fill="#c8c8c8"/><circle cx="6" cy="12" r="4.9" fill="#2f9a12"/><path d="M3.4 12.2L5.2 14.2 8.8 9.6" fill="none" stroke="#fff" stroke-width="1.5"/></svg><span class="t ui" style="left:26px;top:2px;letter-spacing:-0.399px;">.htaccess</span><svg style="left:2px;top:21px" width="18" height="18" viewBox="0 0 18 18" ><path d="M4 1H12.5L17 5.5V17H4Z" fill="#f6f6f6"/><path d="M12.5 1V5.5H17Z" fill="#c8c8c8"/><path d="M1 4H10.5V12H1Z" fill="#6a58b0"/><circle cx="6" cy="12" r="4.9" fill="#2f9a12"/><path d="M3.4 12.2L5.2 14.2 8.8 9.6" fill="none" stroke="#fff" stroke-width="1.5"/></svg><span class="t ui" style="left:26px;top:22px;letter-spacing:0.127px;">about.php</span><svg style="left:2px;top:41px" width="18" height="18" viewBox="0 0 18 18" ><path d="M4 1H12.5L17 5.5V17H4Z" fill="#f6f6f6"/><path d="M12.5 1V5.5H17Z" fill="#c8c8c8"/><path d="M1 4H10.5V12H1Z" fill="#6a58b0"/><circle cx="6" cy="12" r="4.9" fill="#2f9a12"/><path d="M3.4 12.2L5.2 14.2 8.8 9.6" fill="none" stroke="#fff" stroke-width="1.5"/></svg><span class="t ui" style="left:26px;top:42px;letter-spacing:0.016px;">acknowledgements.php</span><div class="b" style="left:22px;top:60px;width:66px;height:20px;background:#0c60b6;"></div><svg style="left:2px;top:61px" width="18" height="18" viewBox="0 0 18 18" ><path d="M4.5 1.5H12L16.5 6V16.5H4.5Z" fill="#6aa4dc" stroke="#3a74b8" stroke-width="1"/><path d="M1 4H10.5V12H1Z" fill="#3a6ab8"/><circle cx="6" cy="12" r="4.9" fill="#2f9a12"/><path d="M3.4 12.2L5.2 14.2 8.8 9.6" fill="none" stroke="#fff" stroke-width="1.5"/></svg><span class="t ui" style="left:26px;top:62px;letter-spacing:0.118px;">config.php</span><svg style="left:2px;top:81px" width="18" height="18" viewBox="0 0 18 18" ><path d="M4 1H12.5L17 5.5V17H4Z" fill="#f6f6f6"/><path d="M12.5 1V5.5H17Z" fill="#c8c8c8"/><path d="M1 4H10.5V12H1Z" fill="#6a58b0"/><circle cx="6" cy="12" r="4.9" fill="#2f9a12"/><path d="M3.4 12.2L5.2 14.2 8.8 9.6" fill="none" stroke="#fff" stroke-width="1.5"/></svg><span class="t ui" style="left:26px;top:82px;letter-spacing:0.053px;">contact.php</span><svg style="left:2px;top:101px" width="18" height="18" viewBox="0 0 18 18" ><path d="M4 1H12.5L17 5.5V17H4Z" fill="#f6f6f6"/><path d="M12.5 1V5.5H17Z" fill="#c8c8c8"/><path d="M1 4H10.5V12H1Z" fill="#6a58b0"/><circle cx="6" cy="12" r="4.9" fill="#2f9a12"/><path d="M3.4 12.2L5.2 14.2 8.8 9.6" fill="none" stroke="#fff" stroke-width="1.5"/></svg><span class="t ui" style="left:26px;top:102px;letter-spacing:-0.064px;">customers.php</span><svg style="left:2px;top:121px" width="18" height="18" viewBox="0 0 18 18" ><path d="M4 1H12.5L17 5.5V17H4Z" fill="#f6f6f6"/><path d="M12.5 1V5.5H17Z" fill="#c8c8c8"/><path d="M1 4H10.5V12H1Z" fill="#6a58b0"/><circle cx="6" cy="12" r="4.9" fill="#2f9a12"/><path d="M3.4 12.2L5.2 14.2 8.8 9.6" fill="none" stroke="#fff" stroke-width="1.5"/></svg><span class="t ui" style="left:26px;top:122px;letter-spacing:0.109px;">debug.php</span><svg style="left:2px;top:141px" width="18" height="18" viewBox="0 0 18 18" ><path d="M4 1H12.5L17 5.5V17H4Z" fill="#f6f6f6"/><path d="M12.5 1V5.5H17Z" fill="#c8c8c8"/><path d="M1 4H10.5V12H1Z" fill="#6a58b0"/><circle cx="6" cy="12" r="4.9" fill="#2f9a12"/><path d="M3.4 12.2L5.2 14.2 8.8 9.6" fill="none" stroke="#fff" stroke-width="1.5"/></svg><span class="t ui" style="left:26px;top:142px;letter-spacing:0.14px;">download-dbdrivers.php</span><svg style="left:2px;top:161px" width="18" height="18" viewBox="0 0 18 18" ><path d="M4 1H12.5L17 5.5V17H4Z" fill="#f6f6f6"/><path d="M12.5 1V5.5H17Z" fill="#c8c8c8"/><path d="M1 4H10.5V12H1Z" fill="#6a58b0"/><circle cx="6" cy="12" r="4.9" fill="#2f9a12"/><path d="M3.4 12.2L5.2 14.2 8.8 9.6" fill="none" stroke="#fff" stroke-width="1.5"/></svg><span class="t ui" style="left:26px;top:162px;letter-spacing:0.158px;">download-mozilla.php</span></div><div class="b" style="left:1021px;top:736px;width:47px;height:21px;border:1px solid #1c64a8;box-sizing:border-box;"></div><span class="t ui" style="left:1026px;top:739px;letter-spacing:-0.09px;">Project</span><span class="t ui" style="left:1073px;top:739px;letter-spacing:-0.233px;">Folders</span><span class="t ui" style="left:1121px;top:739px;letter-spacing:-1.268px;">FTP</span></div>
<span class="t st" style="left:17px;top:767px;letter-spacing:-0.45px;">442 : 22</span><span class="t st" style="left:148px;top:767px;letter-spacing:-0.42px;">36.19 kb</span><span class="t st" style="left:218px;top:767px;letter-spacing:-0.295px;">UTF-8 *</span><span class="t st" style="left:273px;top:767px;letter-spacing:-0.172px;">For Help, press Ctrl+F1</span><span class="t st" style="left:1096px;top:767px;letter-spacing:-0.003px;">blumentals.net</span><svg style="left:1234px;top:770px" width="11" height="11" viewBox="0 0 11 11" shape-rendering="crispEdges"><rect x="8" y="0" width="2" height="2" fill="#585858"/><rect x="9" y="1" width="2" height="2" fill="#4a4a4a"/><rect x="4" y="4" width="2" height="2" fill="#585858"/><rect x="5" y="5" width="2" height="2" fill="#4a4a4a"/><rect x="8" y="4" width="2" height="2" fill="#585858"/><rect x="9" y="5" width="2" height="2" fill="#4a4a4a"/><rect x="0" y="8" width="2" height="2" fill="#585858"/><rect x="1" y="9" width="2" height="2" fill="#4a4a4a"/><rect x="4" y="8" width="2" height="2" fill="#585858"/><rect x="5" y="9" width="2" height="2" fill="#4a4a4a"/><rect x="8" y="8" width="2" height="2" fill="#585858"/><rect x="9" y="9" width="2" height="2" fill="#4a4a4a"/></svg><div class="b tip" style="left:484px;top:375px;width:210px;height:52px"><span class="t " style="left:4px;top:2px;letter-spacing:0.09px;color:#fff">bool empty (<b>mixed $var</b>)</span><span class="t " style="left:4px;top:17px;letter-spacing:-0.06px;color:#a8a8a8">Determine whether a variable is empty</span><span class="t " style="left:4px;top:32px;letter-spacing:-0.162px;color:#a8a8a8">class: PHP built-in</span></div>
<div class="b callout" style="left:928px;top:22px;width:143px;height:31px;letter-spacing:0.418px">Debugging tools<i class="ptr" style="left:65px"></i></div>
<div class="b callout" style="left:100px;top:163px;width:143px;height:31px;letter-spacing:0.004px">Code Explorer<i class="ptr" style="left:65px"></i></div>
<div class="b callout" style="left:755px;top:152px;width:143px;height:31px;letter-spacing:0.375px">Powerful editor<i class="ptr" style="left:66px"></i></div>
<div class="b callout" style="left:1077px;top:146px;width:143px;height:31px;letter-spacing:-0.14px">File / FTP Explorer<i class="ptr" style="left:66px"></i></div>
<div class="b callout" style="left:526px;top:446px;width:143px;height:31px;letter-spacing:0.202px">Code intelligence<i class="ptr up" style="left:65px"></i></div>
<div id="frame"></div>
</body></html>
